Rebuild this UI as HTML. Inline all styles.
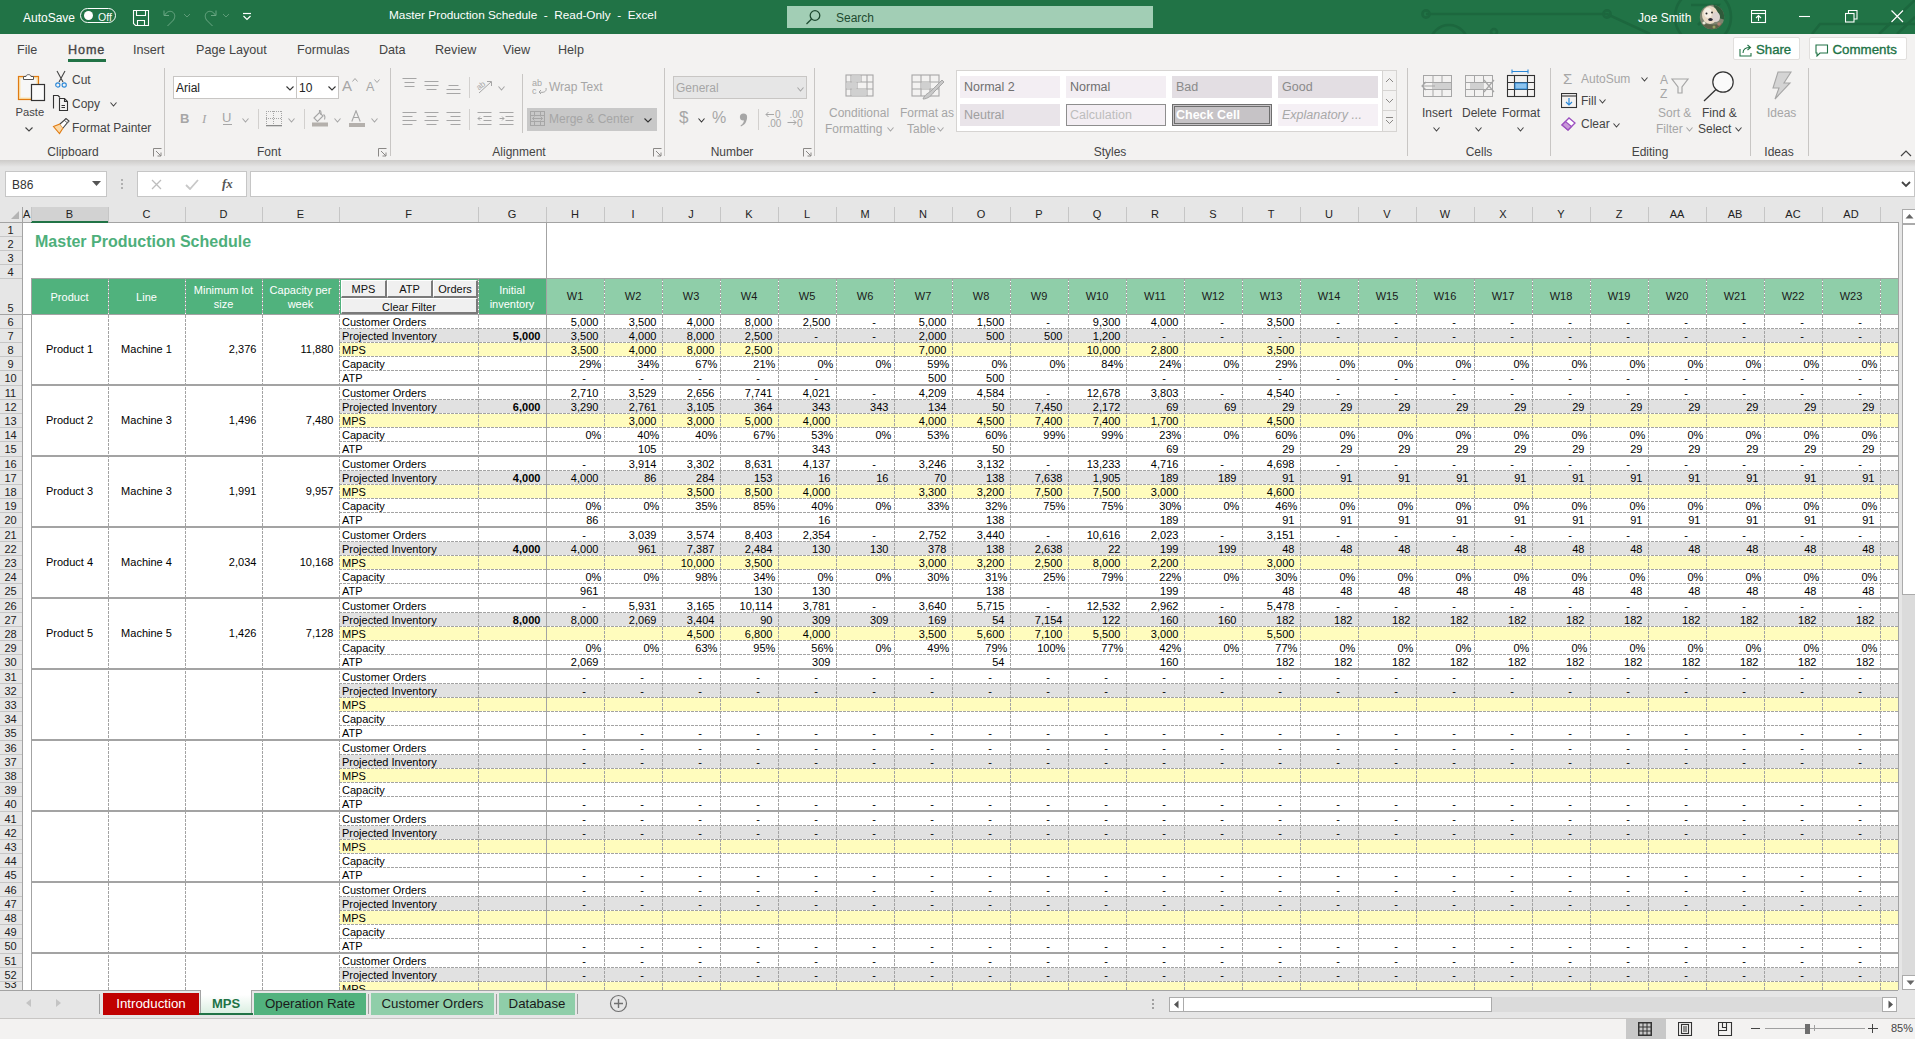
<!DOCTYPE html><html><head><meta charset="utf-8"><title>Master Production Schedule - Excel</title><style>html,body{margin:0;padding:0;}body{width:1915px;height:1039px;overflow:hidden;position:relative;background:#F3F2F1;font-family:"Liberation Sans",sans-serif;}</style></head><body><div style="position:absolute;left:0px;top:0px;width:1915px;height:34px;background:#217346;"></div><svg style="position:absolute;left:1400px;top:0px;" width="515" height="34" viewBox="0 0 515 34"><g stroke="#1C673E" stroke-width="2.6" fill="none"><path d="M26 14 H207 L250 34"/><circle cx="26" cy="14" r="3.6"/><circle cx="207" cy="14" r="3.6"/><circle cx="49" cy="44" r="19"/><circle cx="94" cy="32" r="3"/><circle cx="303" cy="17" r="28"/><path d="M291 5 H318 L298 25"/><path d="M479 34 L515 0"/><path d="M497 34 L515 17"/><path d="M412 34 L420 24 H515"/></g></svg><div style="position:absolute;left:23px;top:11px;white-space:pre;font:12px 'Liberation Sans', sans-serif;color:#fff;">AutoSave</div><div style="position:absolute;left:80px;top:8px;width:36px;height:15px;border:1px solid #fff;border-radius:9px;box-sizing:border-box;"></div><div style="position:absolute;left:84px;top:11px;width:9px;height:9px;background:#fff;border-radius:50%;"></div><div style="position:absolute;left:98px;top:11px;white-space:pre;font:10.5px 'Liberation Sans', sans-serif;color:#fff;">Off</div><svg style="position:absolute;left:132px;top:9px;" width="18" height="18" viewBox="0 0 18 18"><g fill="none" stroke="#fff" stroke-width="1.1"><path d="M1.5 1.5 H16.5 V16.5 H3.5 L1.5 14.5 Z"/><path d="M4.5 1.5 V6.5 H13.5 V1.5"/><path d="M5.5 16.5 V11.5 H12.5 V16.5"/></g></svg><svg style="position:absolute;left:161px;top:9px;" width="20" height="18" viewBox="0 0 20 18"><g fill="none" stroke="#6BA784" stroke-width="1"><path d="M3 1.5 V6.5 H8"/><path d="M3.5 6.5 C5.5 2.5 9 1.5 11.5 3 C14 4.5 14.5 8 12.5 11 L6.5 17"/></g></svg><svg style="position:absolute;left:183px;top:13px;" width="8" height="6" viewBox="0 0 8 6"><path d="M1 1 L4 4 L7 1" fill="none" stroke="#5E9B78" stroke-width="1"/></svg><svg style="position:absolute;left:200px;top:9px;" width="20" height="18" viewBox="0 0 20 18"><g fill="none" stroke="#6BA784" stroke-width="1"><path d="M16 1.5 V6.5 H11"/><path d="M15.5 6.5 C13.5 2.5 10 1.5 7.5 3 C5 4.5 4.5 8 6.5 11 L12.5 17"/></g></svg><svg style="position:absolute;left:222px;top:13px;" width="8" height="6" viewBox="0 0 8 6"><path d="M1 1 L4 4 L7 1" fill="none" stroke="#5E9B78" stroke-width="1"/></svg><svg style="position:absolute;left:242px;top:12px;" width="10" height="10" viewBox="0 0 10 10"><g fill="none" stroke="#fff" stroke-width="1.2"><path d="M1 1.5 H9"/><path d="M1.5 4 L5 7.5 L8.5 4"/></g></svg><div style="position:absolute;left:389px;top:7.6px;white-space:pre;font:11.8px 'Liberation Sans', sans-serif;color:#fff;">Master Production Schedule  -  Read-Only  -  Excel</div><div style="position:absolute;left:787px;top:6px;width:366px;height:22px;background:#A2CEB5;"></div><svg style="position:absolute;left:804px;top:9px;" width="18" height="16" viewBox="0 0 18 16"><g fill="none" stroke="#1E4A30" stroke-width="1.3"><circle cx="11" cy="6.5" r="4.8"/><path d="M7.6 10 L2.5 15"/></g></svg><div style="position:absolute;left:836px;top:11px;white-space:pre;font:12px 'Liberation Sans', sans-serif;color:#1E4A30;">Search</div><div style="position:absolute;left:1638px;top:11px;white-space:pre;font:12px 'Liberation Sans', sans-serif;color:#fff;">Joe Smith</div><svg style="position:absolute;left:1699px;top:4px;" width="26" height="26" viewBox="0 0 26 26"><defs><clipPath id="avc"><circle cx="13" cy="13" r="12.2"/></clipPath></defs><g clip-path="url(#avc)"><rect width="26" height="26" fill="#7E8470"/><path d="M14 0 H26 V16 L20 14 Z" fill="#2F5A3A"/><ellipse cx="11" cy="11" rx="8" ry="9" fill="#E8D9C4"/><ellipse cx="9" cy="9" rx="4" ry="5" fill="#F6EEE4"/><ellipse cx="17" cy="13" rx="4" ry="5" fill="#DCD3D0"/><circle cx="7.5" cy="9.5" r="1" fill="#222"/><circle cx="13" cy="8.5" r="0.9" fill="#222"/><ellipse cx="11.5" cy="15.5" rx="2.2" ry="1.6" fill="#2A2A3A"/><path d="M0 18 C6 20 12 22 26 19 V26 H0 Z" fill="#5B6148"/><circle cx="5" cy="19" r="1.6" fill="#E8E8D8"/><circle cx="20" cy="20" r="1.8" fill="#B08070"/><circle cx="15" cy="23" r="1.5" fill="#9AA060"/></g></svg><svg style="position:absolute;left:1751px;top:10px;" width="16" height="14" viewBox="0 0 16 14"><g fill="none" stroke="#fff" stroke-width="1.1"><rect x="0.5" y="0.5" width="14" height="12"/><path d="M0.5 3.5 H14.5"/><path d="M7.5 11 V6 M5 8 L7.5 5.5 L10 8"/></g></svg><svg style="position:absolute;left:1799px;top:15px;" width="12" height="3" viewBox="0 0 12 3"><path d="M0 1.5 H11" stroke="#fff" stroke-width="1.1"/></svg><svg style="position:absolute;left:1845px;top:10px;" width="13" height="13" viewBox="0 0 13 13"><g fill="none" stroke="#fff" stroke-width="1.1"><rect x="0.5" y="3.5" width="8.5" height="8.5"/><path d="M3.5 3.5 V0.5 H12 V9 H9"/></g></svg><svg style="position:absolute;left:1891px;top:10px;" width="13" height="13" viewBox="0 0 13 13"><path d="M0.5 0.5 L12 12 M12 0.5 L0.5 12" stroke="#fff" stroke-width="1.2"/></svg><div style="position:absolute;left:0px;top:34px;width:1915px;height:126px;background:#F3F2F1;"></div><div style="position:absolute;left:17px;top:43.3px;white-space:pre;font:12.6px 'Liberation Sans', sans-serif;color:#444444;">File</div><div style="position:absolute;left:68px;top:43.3px;white-space:pre;font:12.6px 'Liberation Sans', sans-serif;color:#444444;-webkit-text-stroke:0.35px #444;letter-spacing:0.9px;">Home</div><div style="position:absolute;left:133px;top:43.3px;white-space:pre;font:12.6px 'Liberation Sans', sans-serif;color:#444444;">Insert</div><div style="position:absolute;left:196px;top:43.3px;white-space:pre;font:12.6px 'Liberation Sans', sans-serif;color:#444444;">Page Layout</div><div style="position:absolute;left:297px;top:43.3px;white-space:pre;font:12.6px 'Liberation Sans', sans-serif;color:#444444;">Formulas</div><div style="position:absolute;left:379px;top:43.3px;white-space:pre;font:12.6px 'Liberation Sans', sans-serif;color:#444444;">Data</div><div style="position:absolute;left:435px;top:43.3px;white-space:pre;font:12.6px 'Liberation Sans', sans-serif;color:#444444;">Review</div><div style="position:absolute;left:503px;top:43.3px;white-space:pre;font:12.6px 'Liberation Sans', sans-serif;color:#444444;">View</div><div style="position:absolute;left:558px;top:43.3px;white-space:pre;font:12.6px 'Liberation Sans', sans-serif;color:#444444;">Help</div><div style="position:absolute;left:68px;top:59px;width:38px;height:3px;background:#217346;"></div><div style="position:absolute;left:1733px;top:37px;width:67px;height:23px;background:#fff;border:1px solid #E1DFDD;box-sizing:border-box;border-radius:2px;"></div><svg style="position:absolute;left:1739px;top:43px;" width="14" height="14" viewBox="0 0 14 14"><g fill="none" stroke="#217346" stroke-width="1.1"><path d="M1 6 V13 H12 V10"/><path d="M4 10 C4 6 7 4.5 11 4.5"/><path d="M8.5 2 L11.5 4.5 L8.5 7"/></g></svg><div style="position:absolute;left:1756px;top:42px;white-space:pre;font:13.2px 'Liberation Sans', sans-serif;color:#217346;-webkit-text-stroke:0.35px #217346;">Share</div><div style="position:absolute;left:1809px;top:37px;width:98px;height:23px;background:#fff;border:1px solid #E1DFDD;box-sizing:border-box;border-radius:2px;"></div><svg style="position:absolute;left:1815px;top:44px;" width="14" height="13" viewBox="0 0 14 13"><path d="M1 1 H12.5 V9 H5 L2 12 V9 H1 Z" fill="none" stroke="#217346" stroke-width="1.1"/></svg><div style="position:absolute;left:1832.5px;top:42px;white-space:pre;font:13.3px 'Liberation Sans', sans-serif;color:#217346;-webkit-text-stroke:0.35px #217346;">Comments</div><svg style="position:absolute;left:15px;top:71px;" width="32" height="32" viewBox="0 0 32 32"><rect x="3.5" y="5.5" width="20" height="23" fill="#FBE3B0" stroke="#E07B12" stroke-width="1.2"/><rect x="5.5" y="7.5" width="16" height="19" fill="#F7F7F7"/><path d="M8.5 8.5 V5.5 H11 C11 3 16 3 16 5.5 H18.5 V8.5 Z" fill="#fff" stroke="#555" stroke-width="1"/><rect x="16.5" y="13.5" width="13" height="16" fill="#FAFAFA" stroke="#333" stroke-width="1.2"/></svg><div style="position:absolute;left:15.5px;top:106px;white-space:pre;font:11.2px 'Liberation Sans', sans-serif;color:#444444;">Paste</div><svg style="position:absolute;left:25px;top:127px;" width="8" height="5" viewBox="0 0 8 5"><path d="M0.5 0.5 L4.0 4 L7.5 0.5" fill="none" stroke="#444" stroke-width="1.1"/></svg><svg style="position:absolute;left:55px;top:70px;" width="12" height="18" viewBox="0 0 12 18"><g fill="none" stroke-width="1.1"><path d="M2 1 L8 12 M10 1 L4 12" stroke="#444"/><circle cx="2.8" cy="15" r="2.1" stroke="#2B88D8"/><circle cx="9.2" cy="15" r="2.1" stroke="#2B88D8"/></g></svg><div style="position:absolute;left:72px;top:73px;white-space:pre;font:12px 'Liberation Sans', sans-serif;color:#444444;">Cut</div><svg style="position:absolute;left:52px;top:94px;" width="18" height="18" viewBox="0 0 18 18"><g fill="none" stroke="#333" stroke-width="1.1"><path d="M1.5 14.5 V1.5 H6 L8 3.5"/><path d="M7.5 4.5 H12.5 L15.5 7.5 V16.5 H7.5 Z"/><path d="M12.5 4.5 V7.5 H15.5"/><path d="M9.5 11.5 H13 M9.5 13.5 H13"/></g></svg><div style="position:absolute;left:72px;top:97px;white-space:pre;font:12px 'Liberation Sans', sans-serif;color:#444444;">Copy</div><svg style="position:absolute;left:110px;top:102px;" width="7" height="5" viewBox="0 0 7 5"><path d="M0.5 0.5 L3.5 4 L6.5 0.5" fill="none" stroke="#444" stroke-width="1.1"/></svg><svg style="position:absolute;left:52px;top:118px;" width="18" height="17" viewBox="0 0 18 17"><g stroke-width="1.1"><path d="M1.5 8.5 L8 6 L11 10 L7.5 15.5 Z" fill="#FCD9A5" stroke="#E07B12"/><path d="M8 6 L12.5 2 L15.5 4.5 L11 10" fill="#fff" stroke="#444"/><path d="M12.5 2 L14 0.5 L17 3 L15.5 4.5" fill="#fff" stroke="#444"/></g></svg><div style="position:absolute;left:72px;top:121px;white-space:pre;font:12px 'Liberation Sans', sans-serif;color:#444444;">Format Painter</div><div style="position:absolute;left:13px;top:145px;width:120px;text-align:center;font:12px 'Liberation Sans', sans-serif;color:#444444;white-space:pre;">Clipboard</div><svg style="position:absolute;left:153px;top:148px;" width="9" height="9" viewBox="0 0 9 9"><g fill="none" stroke="#8A8886" stroke-width="1"><path d="M0.5 8.5 V0.5 H8.5"/><path d="M3 3 L8 8 M8 4.5 V8 H4.5"/></g></svg><div style="position:absolute;left:164px;top:68px;width:1px;height:88px;background:#C8C6C4;"></div><div style="position:absolute;left:173px;top:76px;width:124px;height:23px;background:#fff;border:1px solid #C8C6C4;box-sizing:border-box;"></div><div style="position:absolute;left:176px;top:81px;white-space:pre;font:12px 'Liberation Sans', sans-serif;color:#222;">Arial</div><svg style="position:absolute;left:286px;top:86px;" width="8" height="5" viewBox="0 0 8 5"><path d="M0.5 0.5 L4.0 4 L7.5 0.5" fill="none" stroke="#333" stroke-width="1.1"/></svg><div style="position:absolute;left:296px;top:76px;width:43px;height:23px;background:#fff;border:1px solid #C8C6C4;box-sizing:border-box;"></div><div style="position:absolute;left:299px;top:81px;white-space:pre;font:12px 'Liberation Sans', sans-serif;color:#222;">10</div><svg style="position:absolute;left:328px;top:86px;" width="8" height="5" viewBox="0 0 8 5"><path d="M0.5 0.5 L4.0 4 L7.5 0.5" fill="none" stroke="#333" stroke-width="1.1"/></svg><div style="position:absolute;left:342px;top:77px;white-space:pre;font:15px 'Liberation Sans', sans-serif;color:#A6A6A6;">A</div><svg style="position:absolute;left:352px;top:78px;" width="6" height="4" viewBox="0 0 6 4"><path d="M0.5 3.5 L3 0.5 L5.5 3.5" fill="none" stroke="#A6A6A6" stroke-width="1"/></svg><div style="position:absolute;left:366px;top:80px;white-space:pre;font:12.5px 'Liberation Sans', sans-serif;color:#A6A6A6;">A</div><svg style="position:absolute;left:374px;top:79px;" width="6" height="4" viewBox="0 0 6 4"><path d="M0.5 0.5 L3 3.5 L5.5 0.5" fill="none" stroke="#A6A6A6" stroke-width="1"/></svg><div style="position:absolute;left:180px;top:111px;white-space:pre;font:bold 13px 'Liberation Sans', sans-serif;color:#A6A6A6;">B</div><div style="position:absolute;left:202px;top:111px;white-space:pre;font:italic 13px 'Liberation Serif', serif;color:#A6A6A6;">I</div><div style="position:absolute;left:222px;top:110px;white-space:pre;font:13px 'Liberation Sans', sans-serif;color:#A6A6A6;">U</div><div style="position:absolute;left:223px;top:124px;width:9px;height:1px;background:#A6A6A6;"></div><svg style="position:absolute;left:242px;top:118px;" width="7" height="5" viewBox="0 0 7 5"><path d="M0.5 0.5 L3.5 4 L6.5 0.5" fill="none" stroke="#A6A6A6" stroke-width="1.1"/></svg><div style="position:absolute;left:258px;top:109px;width:1px;height:20px;background:#D2D0CE;"></div><svg style="position:absolute;left:266px;top:111px;" width="16" height="16" viewBox="0 0 16 16"><rect x="0" y="0" width="1" height="1" fill="#A6A6A6"/><rect x="0" y="2" width="1" height="1" fill="#A6A6A6"/><rect x="0" y="4" width="1" height="1" fill="#A6A6A6"/><rect x="0" y="6" width="1" height="1" fill="#A6A6A6"/><rect x="0" y="7" width="1" height="1" fill="#A6A6A6"/><rect x="0" y="8" width="1" height="1" fill="#A6A6A6"/><rect x="0" y="10" width="1" height="1" fill="#A6A6A6"/><rect x="0" y="12" width="1" height="1" fill="#A6A6A6"/><rect x="0" y="14" width="1" height="1" fill="#A6A6A6"/><rect x="2" y="0" width="1" height="1" fill="#A6A6A6"/><rect x="2" y="7" width="1" height="1" fill="#A6A6A6"/><rect x="4" y="0" width="1" height="1" fill="#A6A6A6"/><rect x="4" y="7" width="1" height="1" fill="#A6A6A6"/><rect x="6" y="0" width="1" height="1" fill="#A6A6A6"/><rect x="6" y="7" width="1" height="1" fill="#A6A6A6"/><rect x="7" y="0" width="1" height="1" fill="#A6A6A6"/><rect x="7" y="2" width="1" height="1" fill="#A6A6A6"/><rect x="7" y="4" width="1" height="1" fill="#A6A6A6"/><rect x="7" y="6" width="1" height="1" fill="#A6A6A6"/><rect x="7" y="8" width="1" height="1" fill="#A6A6A6"/><rect x="7" y="10" width="1" height="1" fill="#A6A6A6"/><rect x="7" y="12" width="1" height="1" fill="#A6A6A6"/><rect x="7" y="14" width="1" height="1" fill="#A6A6A6"/><rect x="8" y="0" width="1" height="1" fill="#A6A6A6"/><rect x="8" y="7" width="1" height="1" fill="#A6A6A6"/><rect x="10" y="0" width="1" height="1" fill="#A6A6A6"/><rect x="10" y="7" width="1" height="1" fill="#A6A6A6"/><rect x="12" y="0" width="1" height="1" fill="#A6A6A6"/><rect x="12" y="7" width="1" height="1" fill="#A6A6A6"/><rect x="14" y="0" width="1" height="1" fill="#A6A6A6"/><rect x="14" y="7" width="1" height="1" fill="#A6A6A6"/><rect x="15" y="0" width="1" height="1" fill="#A6A6A6"/><rect x="15" y="2" width="1" height="1" fill="#A6A6A6"/><rect x="15" y="4" width="1" height="1" fill="#A6A6A6"/><rect x="15" y="6" width="1" height="1" fill="#A6A6A6"/><rect x="15" y="8" width="1" height="1" fill="#A6A6A6"/><rect x="15" y="10" width="1" height="1" fill="#A6A6A6"/><rect x="15" y="12" width="1" height="1" fill="#A6A6A6"/><rect x="15" y="14" width="1" height="1" fill="#A6A6A6"/><rect x="0" y="14" width="16" height="1.3" fill="#8A8A8A"/></svg><svg style="position:absolute;left:288px;top:118px;" width="7" height="5" viewBox="0 0 7 5"><path d="M0.5 0.5 L3.5 4 L6.5 0.5" fill="none" stroke="#A6A6A6" stroke-width="1.1"/></svg><div style="position:absolute;left:304px;top:109px;width:1px;height:20px;background:#D2D0CE;"></div><svg style="position:absolute;left:311px;top:110px;" width="18" height="17" viewBox="0 0 18 17"><g fill="none" stroke="#A6A6A6" stroke-width="1.1"><path d="M3 8 L8.5 2.5 L12 6 L6.5 11.5 Z"/><path d="M8.5 2.5 V0.5 C9.5 0.5 10 1 10 2.5 V5"/><path d="M12.5 4.5 C14 5.5 14 8 13.5 9.5"/></g><rect x="1" y="12.5" width="16" height="4" fill="#B4B0AC"/></svg><svg style="position:absolute;left:334px;top:118px;" width="7" height="5" viewBox="0 0 7 5"><path d="M0.5 0.5 L3.5 4 L6.5 0.5" fill="none" stroke="#A6A6A6" stroke-width="1.1"/></svg><svg style="position:absolute;left:351px;top:110px;" width="10" height="13" viewBox="0 0 10 13"><path d="M0.8 11.5 L5 0.8 L9.2 11.5 M2.3 7.5 H7.7" fill="none" stroke="#A6A6A6" stroke-width="1.1"/></svg><div style="position:absolute;left:349px;top:123px;width:16px;height:4px;background:#B4B0AC;"></div><svg style="position:absolute;left:371px;top:118px;" width="7" height="5" viewBox="0 0 7 5"><path d="M0.5 0.5 L3.5 4 L6.5 0.5" fill="none" stroke="#A6A6A6" stroke-width="1.1"/></svg><div style="position:absolute;left:209px;top:145px;width:120px;text-align:center;font:12px 'Liberation Sans', sans-serif;color:#444444;white-space:pre;">Font</div><svg style="position:absolute;left:378px;top:148px;" width="9" height="9" viewBox="0 0 9 9"><g fill="none" stroke="#8A8886" stroke-width="1"><path d="M0.5 8.5 V0.5 H8.5"/><path d="M3 3 L8 8 M8 4.5 V8 H4.5"/></g></svg><div style="position:absolute;left:390px;top:68px;width:1px;height:88px;background:#C8C6C4;"></div><svg style="position:absolute;left:402px;top:78px;" width="16" height="12" viewBox="0 0 16 12"><g stroke="#A6A6A6" stroke-width="1"><path d="M0.5 0.5 H14.5 M2.5 4.5 H12.5 M2.5 8.5 H12.5"/></g></svg><svg style="position:absolute;left:424px;top:81px;" width="16" height="12" viewBox="0 0 16 12"><g stroke="#A6A6A6" stroke-width="1"><path d="M0.5 0.5 H14.5 M0.5 4.5 H14.5 M2.5 8.5 H12.5"/></g></svg><svg style="position:absolute;left:446px;top:85px;" width="16" height="12" viewBox="0 0 16 12"><g stroke="#A6A6A6" stroke-width="1"><path d="M2.5 0.5 H12.5 M0.5 4.5 H14.5 M0.5 8.5 H14.5"/></g></svg><div style="position:absolute;left:469px;top:77px;width:1px;height:21px;background:#D2D0CE;"></div><svg style="position:absolute;left:476px;top:78px;" width="18" height="16" viewBox="0 0 18 16"><g fill="none" stroke="#A6A6A6" stroke-width="1"><path d="M3 15 L15 4 M11 3.5 H15.5 V8"/></g><text x="0" y="10" font-size="8" fill="#A6A6A6" font-family="Liberation Sans" transform="rotate(-40 5 7)">ab</text></svg><svg style="position:absolute;left:498px;top:86px;" width="7" height="5" viewBox="0 0 7 5"><path d="M0.5 0.5 L3.5 4 L6.5 0.5" fill="none" stroke="#A6A6A6" stroke-width="1.1"/></svg><svg style="position:absolute;left:402px;top:111px;" width="16" height="16" viewBox="0 0 16 16"><g stroke="#A6A6A6" stroke-width="1"><path d="M0.5 1.5 H14.5 M0.5 5.5 H10.5 M0.5 9.5 H14.5 M0.5 13.5 H10.5"/></g></svg><svg style="position:absolute;left:424px;top:111px;" width="16" height="16" viewBox="0 0 16 16"><g stroke="#A6A6A6" stroke-width="1"><path d="M0.5 1.5 H14.5 M2.5 5.5 H12.5 M0.5 9.5 H14.5 M2.5 13.5 H12.5"/></g></svg><svg style="position:absolute;left:446px;top:111px;" width="16" height="16" viewBox="0 0 16 16"><g stroke="#A6A6A6" stroke-width="1"><path d="M0.5 1.5 H14.5 M4.5 5.5 H14.5 M0.5 9.5 H14.5 M4.5 13.5 H14.5"/></g></svg><div style="position:absolute;left:469px;top:109px;width:1px;height:21px;background:#D2D0CE;"></div><svg style="position:absolute;left:477px;top:111px;" width="16" height="16" viewBox="0 0 16 16"><g fill="none" stroke="#A6A6A6" stroke-width="1"><path d="M0.5 1.5 H14.5 M6.5 5.5 H14.5 M6.5 9.5 H14.5 M0.5 13.5 H14.5 M1 7.5 H5 M3 5.5 L1 7.5 L3 9.5"/></g></svg><svg style="position:absolute;left:499px;top:111px;" width="16" height="16" viewBox="0 0 16 16"><g fill="none" stroke="#A6A6A6" stroke-width="1"><path d="M0.5 1.5 H14.5 M6.5 5.5 H14.5 M6.5 9.5 H14.5 M0.5 13.5 H14.5 M0.5 7.5 H5 M3 5.5 L5 7.5 L3 9.5"/></g></svg><div style="position:absolute;left:522px;top:74px;width:1px;height:59px;background:#C8C6C4;"></div><svg style="position:absolute;left:531px;top:78px;" width="17" height="18" viewBox="0 0 17 18"><text x="1" y="8" font-size="9" fill="#A6A6A6" font-family="Liberation Sans">ab</text><text x="1" y="16" font-size="9" fill="#A6A6A6" font-family="Liberation Sans">c</text><path d="M15 10 C16 14 12 15 8 14 M10 12 L8 14 L10 16" fill="none" stroke="#A6A6A6" stroke-width="1"/></svg><div style="position:absolute;left:549px;top:80px;white-space:pre;font:12px 'Liberation Sans', sans-serif;color:#A6A6A6;">Wrap Text</div><div style="position:absolute;left:527px;top:108px;width:130px;height:23px;background:#C8C8C8;"></div><svg style="position:absolute;left:530px;top:111px;" width="16" height="16" viewBox="0 0 16 16"><g fill="none" stroke="#A6A6A6" stroke-width="1"><rect x="0.5" y="0.5" width="14" height="14"/><path d="M0.5 4.5 H14.5 M0.5 10.5 H14.5 M4.5 0.5 V4.5 M10.5 0.5 V4.5 M4.5 10.5 V14.5 M10.5 10.5 V14.5 M2.5 7.5 H12.5 M4.5 5.5 L2.5 7.5 L4.5 9.5 M10.5 5.5 L12.5 7.5 L10.5 9.5"/></g></svg><div style="position:absolute;left:549px;top:112px;white-space:pre;font:12px 'Liberation Sans', sans-serif;color:#A6A6A6;">Merge &amp; Center</div><svg style="position:absolute;left:644px;top:118px;" width="8" height="5" viewBox="0 0 8 5"><path d="M0.5 0.5 L4.0 4 L7.5 0.5" fill="none" stroke="#333" stroke-width="1.1"/></svg><div style="position:absolute;left:459px;top:145px;width:120px;text-align:center;font:12px 'Liberation Sans', sans-serif;color:#444444;white-space:pre;">Alignment</div><svg style="position:absolute;left:653px;top:148px;" width="9" height="9" viewBox="0 0 9 9"><g fill="none" stroke="#8A8886" stroke-width="1"><path d="M0.5 8.5 V0.5 H8.5"/><path d="M3 3 L8 8 M8 4.5 V8 H4.5"/></g></svg><div style="position:absolute;left:664px;top:68px;width:1px;height:88px;background:#C8C6C4;"></div><div style="position:absolute;left:673px;top:76px;width:134px;height:23px;background:#E6E6E6;border:1px solid #C8C6C4;box-sizing:border-box;"></div><div style="position:absolute;left:676px;top:81px;white-space:pre;font:12px 'Liberation Sans', sans-serif;color:#A6A6A6;">General</div><svg style="position:absolute;left:797px;top:87px;" width="7" height="5" viewBox="0 0 7 5"><path d="M0.5 0.5 L3.5 4 L6.5 0.5" fill="none" stroke="#A6A6A6" stroke-width="1.1"/></svg><div style="position:absolute;left:679px;top:108px;white-space:pre;font:17px 'Liberation Sans', sans-serif;color:#A6A6A6;">$</div><svg style="position:absolute;left:698px;top:118px;" width="7" height="5" viewBox="0 0 7 5"><path d="M0.5 0.5 L3.5 4 L6.5 0.5" fill="none" stroke="#333" stroke-width="1.1"/></svg><div style="position:absolute;left:712px;top:109px;white-space:pre;font:16px 'Liberation Sans', sans-serif;color:#A6A6A6;">%</div><svg style="position:absolute;left:739px;top:112px;" width="9" height="15" viewBox="0 0 9 15"><circle cx="4.5" cy="5" r="3.6" fill="#A6A6A6"/><path d="M7.8 5.5 C8 10 5.5 13 2 14.5 L1.5 13.5 C4 12 5.5 9.5 5 6 Z" fill="#A6A6A6"/></svg><div style="position:absolute;left:758px;top:109px;width:1px;height:21px;background:#D2D0CE;"></div><svg style="position:absolute;left:765px;top:110px;" width="18" height="18" viewBox="0 0 18 18"><text x="10" y="8" font-size="10" fill="#A6A6A6" font-family="Liberation Sans">0</text><text x="2.5" y="16.5" font-size="10" fill="#A6A6A6" font-family="Liberation Sans">.00</text><path d="M1 4.5 H9 M3.5 2 L1 4.5 L3.5 7" fill="none" stroke="#A6A6A6" stroke-width="1"/></svg><svg style="position:absolute;left:787px;top:110px;" width="18" height="18" viewBox="0 0 18 18"><text x="2.5" y="8" font-size="10" fill="#A6A6A6" font-family="Liberation Sans">.00</text><text x="10" y="16.5" font-size="10" fill="#A6A6A6" font-family="Liberation Sans">0</text><path d="M0.5 12.5 H9 M6.5 10 L9 12.5 L6.5 15" fill="none" stroke="#A6A6A6" stroke-width="1"/></svg><div style="position:absolute;left:672px;top:145px;width:120px;text-align:center;font:12px 'Liberation Sans', sans-serif;color:#444444;white-space:pre;">Number</div><svg style="position:absolute;left:803px;top:148px;" width="9" height="9" viewBox="0 0 9 9"><g fill="none" stroke="#8A8886" stroke-width="1"><path d="M0.5 8.5 V0.5 H8.5"/><path d="M3 3 L8 8 M8 4.5 V8 H4.5"/></g></svg><div style="position:absolute;left:814px;top:68px;width:1px;height:88px;background:#C8C6C4;"></div><svg style="position:absolute;left:845px;top:74px;" width="30" height="24" viewBox="0 0 30 24"><g fill="none" stroke="#A6A6A6" stroke-width="1.1"><rect x="1" y="1" width="27" height="21"/><path d="M1 8 H28 M1 15 H28 M6 1 V22 M22 1 V22 M16 1 V8 M12 8 V15"/></g><rect x="6.5" y="1.5" width="9.5" height="6" fill="#D0D0D0"/><rect x="1.5" y="8.5" width="10.5" height="6" fill="#D0D0D0"/><rect x="6.5" y="15.5" width="15" height="6" fill="#D0D0D0"/></svg><div style="position:absolute;left:829px;top:106px;white-space:pre;font:12px 'Liberation Sans', sans-serif;color:#A6A6A6;">Conditional</div><div style="position:absolute;left:825px;top:122px;white-space:pre;font:12px 'Liberation Sans', sans-serif;color:#A6A6A6;">Formatting</div><svg style="position:absolute;left:887px;top:127px;" width="7" height="5" viewBox="0 0 7 5"><path d="M0.5 0.5 L3.5 4 L6.5 0.5" fill="none" stroke="#A6A6A6" stroke-width="1.1"/></svg><svg style="position:absolute;left:911px;top:74px;" width="34" height="28" viewBox="0 0 34 28"><g fill="none" stroke="#A6A6A6" stroke-width="1.1"><rect x="1" y="1" width="27" height="21"/><path d="M1 8 H28 M1 15 H28 M10 1 V22 M19 1 V22"/></g><rect x="10.5" y="8.5" width="9" height="6" fill="#D0D0D0"/><path d="M12 25 C14 20 18 19 21 16 L31 6 L33 8 L23 18 C21 21 17 25 12 25 Z" fill="#C8C8C8" stroke="#A6A6A6" stroke-width="1"/></svg><div style="position:absolute;left:900px;top:106px;white-space:pre;font:12px 'Liberation Sans', sans-serif;color:#A6A6A6;">Format as</div><div style="position:absolute;left:907px;top:122px;white-space:pre;font:12px 'Liberation Sans', sans-serif;color:#A6A6A6;">Table</div><svg style="position:absolute;left:937px;top:127px;" width="7" height="5" viewBox="0 0 7 5"><path d="M0.5 0.5 L3.5 4 L6.5 0.5" fill="none" stroke="#A6A6A6" stroke-width="1.1"/></svg><div style="position:absolute;left:956px;top:70px;width:427px;height:62px;background:#fff;border:1px solid #D6D4D2;box-sizing:border-box;"></div><div style="position:absolute;left:960px;top:76px;width:100px;height:22px;background:#F3EEF3;"></div><div style="position:absolute;left:964px;top:80px;white-space:pre;font:12.5px 'Liberation Sans', sans-serif;color:#707070;">Normal 2</div><div style="position:absolute;left:1066px;top:76px;width:100px;height:22px;background:#F3EEF3;"></div><div style="position:absolute;left:1070px;top:80px;white-space:pre;font:12.5px 'Liberation Sans', sans-serif;color:#707070;">Normal</div><div style="position:absolute;left:1172px;top:76px;width:100px;height:22px;background:#E3DEE3;"></div><div style="position:absolute;left:1176px;top:80px;white-space:pre;font:12.5px 'Liberation Sans', sans-serif;color:#8A8A8A;">Bad</div><div style="position:absolute;left:1278px;top:76px;width:100px;height:22px;background:#E3DEE3;"></div><div style="position:absolute;left:1282px;top:80px;white-space:pre;font:12.5px 'Liberation Sans', sans-serif;color:#8A8A8A;">Good</div><div style="position:absolute;left:960px;top:104px;width:100px;height:22px;background:#E9E4E9;"></div><div style="position:absolute;left:964px;top:108px;white-space:pre;font:12.5px 'Liberation Sans', sans-serif;color:#A0A0A0;">Neutral</div><div style="position:absolute;left:1066px;top:104px;width:100px;height:22px;background:#F3EEF3;border:1px solid #8E8E8E;box-sizing:border-box;"></div><div style="position:absolute;left:1070px;top:108px;white-space:pre;font:12.5px 'Liberation Sans', sans-serif;color:#BDBDBD;">Calculation</div><div style="position:absolute;left:1172px;top:104px;width:100px;height:22px;background:#C6C3C6;border:3px double #6E6E6E;box-sizing:border-box;"></div><div style="position:absolute;left:1176px;top:108px;white-space:pre;font:bold 12.5px 'Liberation Sans', sans-serif;color:#FFFFFF;">Check Cell</div><div style="position:absolute;left:1278px;top:104px;width:100px;height:22px;background:#F5F0F5;"></div><div style="position:absolute;left:1282px;top:108px;white-space:pre;font:italic 12.5px 'Liberation Sans', sans-serif;color:#A8A8A8;">Explanatory ...</div><div style="position:absolute;left:1382px;top:70px;width:15px;height:21px;background:#F3F2F1;border:1px solid #D6D4D2;box-sizing:border-box;"></div><div style="position:absolute;left:1382px;top:90px;width:15px;height:21px;background:#F3F2F1;border:1px solid #D6D4D2;box-sizing:border-box;"></div><div style="position:absolute;left:1382px;top:110px;width:15px;height:22px;background:#F3F2F1;border:1px solid #D6D4D2;box-sizing:border-box;"></div><svg style="position:absolute;left:1385px;top:77px;" width="9" height="6" viewBox="0 0 9 6"><path d="M1 5 L4.5 1.5 L8 5" fill="none" stroke="#8A8886" stroke-width="1"/></svg><svg style="position:absolute;left:1385px;top:98px;" width="9" height="6" viewBox="0 0 9 6"><path d="M1 1 L4.5 4.5 L8 1" fill="none" stroke="#8A8886" stroke-width="1"/></svg><svg style="position:absolute;left:1385px;top:116px;" width="9" height="9" viewBox="0 0 9 9"><path d="M1 1.5 H8 M1 4 L4.5 7.5 L8 4" fill="none" stroke="#8A8886" stroke-width="1"/></svg><div style="position:absolute;left:1050px;top:145px;width:120px;text-align:center;font:12px 'Liberation Sans', sans-serif;color:#444444;white-space:pre;">Styles</div><div style="position:absolute;left:1407px;top:68px;width:1px;height:88px;background:#C8C6C4;"></div><svg style="position:absolute;left:1421px;top:74px;" width="32" height="24" viewBox="0 0 32 24"><g fill="none" stroke="#A6A6A6" stroke-width="1"><rect x="2.5" y="1.5" width="28" height="21"/><path d="M2.5 8.5 H30.5 M2.5 15.5 H30.5 M12 1.5 V22 M21 1.5 V22"/></g><rect x="12" y="9" width="18" height="6" fill="#D0D0D0"/><path d="M1 12 H14 M5 8 L1 12 L5 16" fill="none" stroke="#A6A6A6" stroke-width="1.2"/></svg><div style="position:absolute;left:1422px;top:106px;white-space:pre;font:12px 'Liberation Sans', sans-serif;color:#444444;">Insert</div><svg style="position:absolute;left:1433px;top:127px;" width="7" height="5" viewBox="0 0 7 5"><path d="M0.5 0.5 L3.5 4 L6.5 0.5" fill="none" stroke="#444444" stroke-width="1.1"/></svg><svg style="position:absolute;left:1464px;top:74px;" width="32" height="24" viewBox="0 0 32 24"><g fill="none" stroke="#A6A6A6" stroke-width="1"><rect x="1.5" y="1.5" width="27" height="21"/><path d="M1.5 8.5 H28.5 M1.5 15.5 H28.5 M10.5 1.5 V22 M19.5 1.5 V22"/></g><rect x="6" y="9" width="14" height="6" fill="#D0D0D0"/><path d="M20 6 L30 18 M30 6 L20 18" stroke="#A6A6A6" stroke-width="1.2"/></svg><div style="position:absolute;left:1462px;top:106px;white-space:pre;font:12px 'Liberation Sans', sans-serif;color:#444444;">Delete</div><svg style="position:absolute;left:1475px;top:127px;" width="7" height="5" viewBox="0 0 7 5"><path d="M0.5 0.5 L3.5 4 L6.5 0.5" fill="none" stroke="#444444" stroke-width="1.1"/></svg><svg style="position:absolute;left:1506px;top:69px;" width="30" height="30" viewBox="0 0 30 30"><path d="M6 2.5 H22 M6 0.5 V4.5 M22 0.5 V4.5" stroke="#2B88D8" stroke-width="1.1"/><g fill="none" stroke="#333" stroke-width="1.1"><rect x="1.5" y="6.5" width="27" height="21"/><path d="M1.5 13.5 H28.5 M1.5 20.5 H28.5 M8.5 6.5 V27.5 M21.5 6.5 V27.5"/></g><rect x="9" y="14" width="12" height="6" fill="#8CC3EE" stroke="#2B88D8" stroke-width="1"/></svg><div style="position:absolute;left:1502px;top:106px;white-space:pre;font:12px 'Liberation Sans', sans-serif;color:#444444;">Format</div><svg style="position:absolute;left:1517px;top:127px;" width="7" height="5" viewBox="0 0 7 5"><path d="M0.5 0.5 L3.5 4 L6.5 0.5" fill="none" stroke="#444444" stroke-width="1.1"/></svg><div style="position:absolute;left:1419px;top:145px;width:120px;text-align:center;font:12px 'Liberation Sans', sans-serif;color:#444444;white-space:pre;">Cells</div><div style="position:absolute;left:1550px;top:68px;width:1px;height:88px;background:#C8C6C4;"></div><div style="position:absolute;left:1563px;top:70px;white-space:pre;font:15px 'Liberation Sans', sans-serif;color:#A6A6A6;">Σ</div><div style="position:absolute;left:1581px;top:72px;white-space:pre;font:12px 'Liberation Sans', sans-serif;color:#A6A6A6;">AutoSum</div><svg style="position:absolute;left:1641px;top:77px;" width="7" height="5" viewBox="0 0 7 5"><path d="M0.5 0.5 L3.5 4 L6.5 0.5" fill="none" stroke="#444" stroke-width="1.1"/></svg><svg style="position:absolute;left:1561px;top:93px;" width="17" height="16" viewBox="0 0 17 16"><g fill="none" stroke="#333" stroke-width="1.1"><rect x="0.5" y="0.5" width="15" height="14"/><path d="M0.5 3 H15.5"/></g><path d="M8 5 V12 M5 9 L8 12 L11 9" fill="none" stroke="#2B88D8" stroke-width="1.2"/></svg><div style="position:absolute;left:1581px;top:94px;white-space:pre;font:12px 'Liberation Sans', sans-serif;color:#444444;">Fill</div><svg style="position:absolute;left:1599px;top:99px;" width="7" height="5" viewBox="0 0 7 5"><path d="M0.5 0.5 L3.5 4 L6.5 0.5" fill="none" stroke="#444444" stroke-width="1.1"/></svg><svg style="position:absolute;left:1561px;top:115px;" width="17" height="17" viewBox="0 0 17 17"><path d="M1 10 L8 3 L14 8 L7 15 Z" fill="#fff" stroke="#9B4FBF" stroke-width="1.3"/><path d="M1 10 L4.5 6.5 L10.5 11.5 L7 15 Z" fill="#C89AD8" stroke="#9B4FBF" stroke-width="1.2"/></svg><div style="position:absolute;left:1581px;top:117px;white-space:pre;font:12px 'Liberation Sans', sans-serif;color:#444444;">Clear</div><svg style="position:absolute;left:1613px;top:123px;" width="7" height="5" viewBox="0 0 7 5"><path d="M0.5 0.5 L3.5 4 L6.5 0.5" fill="none" stroke="#444444" stroke-width="1.1"/></svg><svg style="position:absolute;left:1659px;top:72px;" width="32" height="28" viewBox="0 0 32 28"><text x="1" y="12" font-size="12" fill="#A6A6A6" font-family="Liberation Sans">A</text><text x="1" y="26" font-size="12" fill="#A6A6A6" font-family="Liberation Sans">Z</text><path d="M13 7 H29 L23 15 V21 H19 V15 Z" fill="none" stroke="#A6A6A6" stroke-width="1.2"/></svg><div style="position:absolute;left:1658px;top:106px;white-space:pre;font:12px 'Liberation Sans', sans-serif;color:#A6A6A6;">Sort &amp;</div><div style="position:absolute;left:1656px;top:122px;white-space:pre;font:12px 'Liberation Sans', sans-serif;color:#A6A6A6;">Filter</div><svg style="position:absolute;left:1686px;top:127px;" width="7" height="5" viewBox="0 0 7 5"><path d="M0.5 0.5 L3.5 4 L6.5 0.5" fill="none" stroke="#A6A6A6" stroke-width="1.1"/></svg><svg style="position:absolute;left:1702px;top:70px;" width="34" height="32" viewBox="0 0 34 32"><circle cx="21" cy="12" r="10.2" fill="#FAFAFA" stroke="#333" stroke-width="1.2"/><path d="M14 19.5 L2 31" stroke="#333" stroke-width="1.3"/></svg><div style="position:absolute;left:1702px;top:106px;white-space:pre;font:12px 'Liberation Sans', sans-serif;color:#444444;">Find &amp;</div><div style="position:absolute;left:1698px;top:122px;white-space:pre;font:12px 'Liberation Sans', sans-serif;color:#444444;">Select</div><svg style="position:absolute;left:1735px;top:127px;" width="7" height="5" viewBox="0 0 7 5"><path d="M0.5 0.5 L3.5 4 L6.5 0.5" fill="none" stroke="#444444" stroke-width="1.1"/></svg><div style="position:absolute;left:1590px;top:145px;width:120px;text-align:center;font:12px 'Liberation Sans', sans-serif;color:#444444;white-space:pre;">Editing</div><div style="position:absolute;left:1750px;top:68px;width:1px;height:88px;background:#C8C6C4;"></div><svg style="position:absolute;left:1768px;top:71px;" width="24" height="30" viewBox="0 0 24 30"><path d="M10 1 H23 L16 12 H22 L7 28 L11 17 H5 Z" fill="#D4D4D4" stroke="#A6A6A6" stroke-width="1.1"/></svg><div style="position:absolute;left:1767px;top:106px;white-space:pre;font:12px 'Liberation Sans', sans-serif;color:#A6A6A6;">Ideas</div><div style="position:absolute;left:1719px;top:145px;width:120px;text-align:center;font:12px 'Liberation Sans', sans-serif;color:#444444;white-space:pre;">Ideas</div><div style="position:absolute;left:1808px;top:68px;width:1px;height:88px;background:#C8C6C4;"></div><svg style="position:absolute;left:1900px;top:150px;" width="12" height="7" viewBox="0 0 12 7"><path d="M1 6 L6 1 L11 6" fill="none" stroke="#444" stroke-width="1.2"/></svg><div style="position:absolute;left:0px;top:160px;width:1915px;height:47px;background:#E6E6E6;"></div><div style="position:absolute;left:0;top:160px;width:1915px;height:7px;background:linear-gradient(#CDCBC9,#E6E6E6);"></div><div style="position:absolute;left:5px;top:171px;width:102px;height:26px;background:#fff;border:1px solid #C6C6C6;box-sizing:border-box;"></div><div style="position:absolute;left:12px;top:178px;white-space:pre;font:12px 'Liberation Sans', sans-serif;color:#333;">B86</div><svg style="position:absolute;left:92px;top:181px;" width="10" height="6" viewBox="0 0 10 6"><path d="M0 0 H9 L4.5 5 Z" fill="#555"/></svg><svg style="position:absolute;left:120px;top:178px;" width="4" height="12" viewBox="0 0 4 12"><g fill="#9E9E9E"><circle cx="2" cy="2" r="1"/><circle cx="2" cy="6" r="1"/><circle cx="2" cy="10" r="1"/></g></svg><div style="position:absolute;left:137px;top:171px;width:110px;height:26px;background:#fff;border:1px solid #C6C6C6;box-sizing:border-box;"></div><svg style="position:absolute;left:151px;top:179px;" width="11" height="11" viewBox="0 0 11 11"><path d="M1 1 L10 10 M10 1 L1 10" stroke="#BDBDBD" stroke-width="1.3"/></svg><svg style="position:absolute;left:185px;top:179px;" width="14" height="11" viewBox="0 0 14 11"><path d="M1 6 L5 10 L13 1" fill="none" stroke="#C8C8C8" stroke-width="1.8"/></svg><div style="position:absolute;left:222px;top:176px;white-space:pre;font:italic bold 13px 'Liberation Serif', serif;color:#555;">fx</div><div style="position:absolute;left:250px;top:171px;width:1665px;height:26px;background:#fff;border:1px solid #C6C6C6;box-sizing:border-box;"></div><svg style="position:absolute;left:1901px;top:181px;" width="10" height="7" viewBox="0 0 10 7"><path d="M1 1 L5 5 L9 1" fill="none" stroke="#444" stroke-width="1.8"/></svg><div style="position:absolute;left:0px;top:207px;width:1915px;height:15px;background:#E6E6E6;"></div><div style="position:absolute;left:0px;top:222px;width:1898px;height:1px;background:#A3A3A3;"></div><svg style="position:absolute;left:11px;top:211px;" width="9" height="8" viewBox="0 0 9 8"><path d="M8 0 V8 H0 Z" fill="#B4B4B4"/></svg><div style="position:absolute;left:22px;top:207px;width:1px;height:783px;background:#A3A3A3;"></div><div style="position:absolute;left:31px;top:207px;width:77px;height:15px;background:#D2D2D2;"></div><div style="position:absolute;left:31px;top:221px;width:77px;height:2px;background:#217346;"></div><div style="position:absolute;left:23px;top:208px;white-space:pre;font:11px 'Liberation Sans', sans-serif;color:#222;">A</div><div style="position:absolute;left:31px;top:207px;width:1px;height:15px;background:#C6C6C6;"></div><div style="position:absolute;left:31px;top:208px;width:77px;text-align:center;font:11px 'Liberation Sans', sans-serif;color:#222;">B</div><div style="position:absolute;left:108px;top:207px;width:1px;height:15px;background:#C6C6C6;"></div><div style="position:absolute;left:108px;top:208px;width:77px;text-align:center;font:11px 'Liberation Sans', sans-serif;color:#222;">C</div><div style="position:absolute;left:185px;top:207px;width:1px;height:15px;background:#C6C6C6;"></div><div style="position:absolute;left:185px;top:208px;width:77px;text-align:center;font:11px 'Liberation Sans', sans-serif;color:#222;">D</div><div style="position:absolute;left:262px;top:207px;width:1px;height:15px;background:#C6C6C6;"></div><div style="position:absolute;left:262px;top:208px;width:77px;text-align:center;font:11px 'Liberation Sans', sans-serif;color:#222;">E</div><div style="position:absolute;left:339px;top:207px;width:1px;height:15px;background:#C6C6C6;"></div><div style="position:absolute;left:339px;top:208px;width:139px;text-align:center;font:11px 'Liberation Sans', sans-serif;color:#222;">F</div><div style="position:absolute;left:478px;top:207px;width:1px;height:15px;background:#C6C6C6;"></div><div style="position:absolute;left:478px;top:208px;width:68px;text-align:center;font:11px 'Liberation Sans', sans-serif;color:#222;">G</div><div style="position:absolute;left:546px;top:207px;width:1px;height:15px;background:#C6C6C6;"></div><div style="position:absolute;left:546px;top:208px;width:58px;text-align:center;font:11px 'Liberation Sans', sans-serif;color:#222;">H</div><div style="position:absolute;left:604px;top:207px;width:1px;height:15px;background:#C6C6C6;"></div><div style="position:absolute;left:604px;top:208px;width:58px;text-align:center;font:11px 'Liberation Sans', sans-serif;color:#222;">I</div><div style="position:absolute;left:662px;top:207px;width:1px;height:15px;background:#C6C6C6;"></div><div style="position:absolute;left:662px;top:208px;width:58px;text-align:center;font:11px 'Liberation Sans', sans-serif;color:#222;">J</div><div style="position:absolute;left:720px;top:207px;width:1px;height:15px;background:#C6C6C6;"></div><div style="position:absolute;left:720px;top:208px;width:58px;text-align:center;font:11px 'Liberation Sans', sans-serif;color:#222;">K</div><div style="position:absolute;left:778px;top:207px;width:1px;height:15px;background:#C6C6C6;"></div><div style="position:absolute;left:778px;top:208px;width:58px;text-align:center;font:11px 'Liberation Sans', sans-serif;color:#222;">L</div><div style="position:absolute;left:836px;top:207px;width:1px;height:15px;background:#C6C6C6;"></div><div style="position:absolute;left:836px;top:208px;width:58px;text-align:center;font:11px 'Liberation Sans', sans-serif;color:#222;">M</div><div style="position:absolute;left:894px;top:207px;width:1px;height:15px;background:#C6C6C6;"></div><div style="position:absolute;left:894px;top:208px;width:58px;text-align:center;font:11px 'Liberation Sans', sans-serif;color:#222;">N</div><div style="position:absolute;left:952px;top:207px;width:1px;height:15px;background:#C6C6C6;"></div><div style="position:absolute;left:952px;top:208px;width:58px;text-align:center;font:11px 'Liberation Sans', sans-serif;color:#222;">O</div><div style="position:absolute;left:1010px;top:207px;width:1px;height:15px;background:#C6C6C6;"></div><div style="position:absolute;left:1010px;top:208px;width:58px;text-align:center;font:11px 'Liberation Sans', sans-serif;color:#222;">P</div><div style="position:absolute;left:1068px;top:207px;width:1px;height:15px;background:#C6C6C6;"></div><div style="position:absolute;left:1068px;top:208px;width:58px;text-align:center;font:11px 'Liberation Sans', sans-serif;color:#222;">Q</div><div style="position:absolute;left:1126px;top:207px;width:1px;height:15px;background:#C6C6C6;"></div><div style="position:absolute;left:1126px;top:208px;width:58px;text-align:center;font:11px 'Liberation Sans', sans-serif;color:#222;">R</div><div style="position:absolute;left:1184px;top:207px;width:1px;height:15px;background:#C6C6C6;"></div><div style="position:absolute;left:1184px;top:208px;width:58px;text-align:center;font:11px 'Liberation Sans', sans-serif;color:#222;">S</div><div style="position:absolute;left:1242px;top:207px;width:1px;height:15px;background:#C6C6C6;"></div><div style="position:absolute;left:1242px;top:208px;width:58px;text-align:center;font:11px 'Liberation Sans', sans-serif;color:#222;">T</div><div style="position:absolute;left:1300px;top:207px;width:1px;height:15px;background:#C6C6C6;"></div><div style="position:absolute;left:1300px;top:208px;width:58px;text-align:center;font:11px 'Liberation Sans', sans-serif;color:#222;">U</div><div style="position:absolute;left:1358px;top:207px;width:1px;height:15px;background:#C6C6C6;"></div><div style="position:absolute;left:1358px;top:208px;width:58px;text-align:center;font:11px 'Liberation Sans', sans-serif;color:#222;">V</div><div style="position:absolute;left:1416px;top:207px;width:1px;height:15px;background:#C6C6C6;"></div><div style="position:absolute;left:1416px;top:208px;width:58px;text-align:center;font:11px 'Liberation Sans', sans-serif;color:#222;">W</div><div style="position:absolute;left:1474px;top:207px;width:1px;height:15px;background:#C6C6C6;"></div><div style="position:absolute;left:1474px;top:208px;width:58px;text-align:center;font:11px 'Liberation Sans', sans-serif;color:#222;">X</div><div style="position:absolute;left:1532px;top:207px;width:1px;height:15px;background:#C6C6C6;"></div><div style="position:absolute;left:1532px;top:208px;width:58px;text-align:center;font:11px 'Liberation Sans', sans-serif;color:#222;">Y</div><div style="position:absolute;left:1590px;top:207px;width:1px;height:15px;background:#C6C6C6;"></div><div style="position:absolute;left:1590px;top:208px;width:58px;text-align:center;font:11px 'Liberation Sans', sans-serif;color:#222;">Z</div><div style="position:absolute;left:1648px;top:207px;width:1px;height:15px;background:#C6C6C6;"></div><div style="position:absolute;left:1648px;top:208px;width:58px;text-align:center;font:11px 'Liberation Sans', sans-serif;color:#222;">AA</div><div style="position:absolute;left:1706px;top:207px;width:1px;height:15px;background:#C6C6C6;"></div><div style="position:absolute;left:1706px;top:208px;width:58px;text-align:center;font:11px 'Liberation Sans', sans-serif;color:#222;">AB</div><div style="position:absolute;left:1764px;top:207px;width:1px;height:15px;background:#C6C6C6;"></div><div style="position:absolute;left:1764px;top:208px;width:58px;text-align:center;font:11px 'Liberation Sans', sans-serif;color:#222;">AC</div><div style="position:absolute;left:1822px;top:207px;width:1px;height:15px;background:#C6C6C6;"></div><div style="position:absolute;left:1822px;top:208px;width:58px;text-align:center;font:11px 'Liberation Sans', sans-serif;color:#222;">AD</div><div style="position:absolute;left:1880px;top:207px;width:1px;height:15px;background:#C6C6C6;"></div><div style="position:absolute;left:23px;top:223px;width:1875px;height:767px;background:#fff;"></div><div style="position:absolute;left:0px;top:223px;width:22px;height:767px;background:#E6E6E6;"></div><div style="position:absolute;left:0px;top:236px;width:22px;height:1px;background:#C6C6C6;"></div><div style="position:absolute;left:0;top:223px;width:21px;height:13px;overflow:hidden;"><div style="position:absolute;bottom:-1px;left:0;width:21px;text-align:center;font:11px 'Liberation Sans', sans-serif;color:#222;line-height:14px;">1</div></div><div style="position:absolute;left:0px;top:250px;width:22px;height:1px;background:#C6C6C6;"></div><div style="position:absolute;left:0;top:237px;width:21px;height:13px;overflow:hidden;"><div style="position:absolute;bottom:-1px;left:0;width:21px;text-align:center;font:11px 'Liberation Sans', sans-serif;color:#222;line-height:14px;">2</div></div><div style="position:absolute;left:0px;top:264px;width:22px;height:1px;background:#C6C6C6;"></div><div style="position:absolute;left:0;top:251px;width:21px;height:13px;overflow:hidden;"><div style="position:absolute;bottom:-1px;left:0;width:21px;text-align:center;font:11px 'Liberation Sans', sans-serif;color:#222;line-height:14px;">3</div></div><div style="position:absolute;left:0px;top:278px;width:22px;height:1px;background:#C6C6C6;"></div><div style="position:absolute;left:0;top:265px;width:21px;height:13px;overflow:hidden;"><div style="position:absolute;bottom:-1px;left:0;width:21px;text-align:center;font:11px 'Liberation Sans', sans-serif;color:#222;line-height:14px;">4</div></div><div style="position:absolute;left:0px;top:314px;width:22px;height:1px;background:#C6C6C6;"></div><div style="position:absolute;left:0;top:279px;width:21px;height:35px;overflow:hidden;"><div style="position:absolute;bottom:-1px;left:0;width:21px;text-align:center;font:11px 'Liberation Sans', sans-serif;color:#222;line-height:14px;">5</div></div><div style="position:absolute;left:0px;top:328px;width:22px;height:1px;background:#C6C6C6;"></div><div style="position:absolute;left:0;top:315px;width:21px;height:13px;overflow:hidden;"><div style="position:absolute;bottom:-1px;left:0;width:21px;text-align:center;font:11px 'Liberation Sans', sans-serif;color:#222;line-height:14px;">6</div></div><div style="position:absolute;left:0px;top:342px;width:22px;height:1px;background:#C6C6C6;"></div><div style="position:absolute;left:0;top:329px;width:21px;height:13px;overflow:hidden;"><div style="position:absolute;bottom:-1px;left:0;width:21px;text-align:center;font:11px 'Liberation Sans', sans-serif;color:#222;line-height:14px;">7</div></div><div style="position:absolute;left:0px;top:356px;width:22px;height:1px;background:#C6C6C6;"></div><div style="position:absolute;left:0;top:343px;width:21px;height:13px;overflow:hidden;"><div style="position:absolute;bottom:-1px;left:0;width:21px;text-align:center;font:11px 'Liberation Sans', sans-serif;color:#222;line-height:14px;">8</div></div><div style="position:absolute;left:0px;top:370px;width:22px;height:1px;background:#C6C6C6;"></div><div style="position:absolute;left:0;top:357px;width:21px;height:13px;overflow:hidden;"><div style="position:absolute;bottom:-1px;left:0;width:21px;text-align:center;font:11px 'Liberation Sans', sans-serif;color:#222;line-height:14px;">9</div></div><div style="position:absolute;left:0;top:371px;width:21px;height:13px;overflow:hidden;"><div style="position:absolute;bottom:-1px;left:0;width:21px;text-align:center;font:11px 'Liberation Sans', sans-serif;color:#222;line-height:14px;">10</div></div><div style="position:absolute;left:0px;top:399px;width:22px;height:1px;background:#C6C6C6;"></div><div style="position:absolute;left:0;top:386px;width:21px;height:13px;overflow:hidden;"><div style="position:absolute;bottom:-1px;left:0;width:21px;text-align:center;font:11px 'Liberation Sans', sans-serif;color:#222;line-height:14px;">11</div></div><div style="position:absolute;left:0px;top:413px;width:22px;height:1px;background:#C6C6C6;"></div><div style="position:absolute;left:0;top:400px;width:21px;height:13px;overflow:hidden;"><div style="position:absolute;bottom:-1px;left:0;width:21px;text-align:center;font:11px 'Liberation Sans', sans-serif;color:#222;line-height:14px;">12</div></div><div style="position:absolute;left:0px;top:427px;width:22px;height:1px;background:#C6C6C6;"></div><div style="position:absolute;left:0;top:414px;width:21px;height:13px;overflow:hidden;"><div style="position:absolute;bottom:-1px;left:0;width:21px;text-align:center;font:11px 'Liberation Sans', sans-serif;color:#222;line-height:14px;">13</div></div><div style="position:absolute;left:0px;top:441px;width:22px;height:1px;background:#C6C6C6;"></div><div style="position:absolute;left:0;top:428px;width:21px;height:13px;overflow:hidden;"><div style="position:absolute;bottom:-1px;left:0;width:21px;text-align:center;font:11px 'Liberation Sans', sans-serif;color:#222;line-height:14px;">14</div></div><div style="position:absolute;left:0;top:442px;width:21px;height:13px;overflow:hidden;"><div style="position:absolute;bottom:-1px;left:0;width:21px;text-align:center;font:11px 'Liberation Sans', sans-serif;color:#222;line-height:14px;">15</div></div><div style="position:absolute;left:0px;top:470px;width:22px;height:1px;background:#C6C6C6;"></div><div style="position:absolute;left:0;top:457px;width:21px;height:13px;overflow:hidden;"><div style="position:absolute;bottom:-1px;left:0;width:21px;text-align:center;font:11px 'Liberation Sans', sans-serif;color:#222;line-height:14px;">16</div></div><div style="position:absolute;left:0px;top:484px;width:22px;height:1px;background:#C6C6C6;"></div><div style="position:absolute;left:0;top:471px;width:21px;height:13px;overflow:hidden;"><div style="position:absolute;bottom:-1px;left:0;width:21px;text-align:center;font:11px 'Liberation Sans', sans-serif;color:#222;line-height:14px;">17</div></div><div style="position:absolute;left:0px;top:498px;width:22px;height:1px;background:#C6C6C6;"></div><div style="position:absolute;left:0;top:485px;width:21px;height:13px;overflow:hidden;"><div style="position:absolute;bottom:-1px;left:0;width:21px;text-align:center;font:11px 'Liberation Sans', sans-serif;color:#222;line-height:14px;">18</div></div><div style="position:absolute;left:0px;top:512px;width:22px;height:1px;background:#C6C6C6;"></div><div style="position:absolute;left:0;top:499px;width:21px;height:13px;overflow:hidden;"><div style="position:absolute;bottom:-1px;left:0;width:21px;text-align:center;font:11px 'Liberation Sans', sans-serif;color:#222;line-height:14px;">19</div></div><div style="position:absolute;left:0;top:513px;width:21px;height:13px;overflow:hidden;"><div style="position:absolute;bottom:-1px;left:0;width:21px;text-align:center;font:11px 'Liberation Sans', sans-serif;color:#222;line-height:14px;">20</div></div><div style="position:absolute;left:0px;top:541px;width:22px;height:1px;background:#C6C6C6;"></div><div style="position:absolute;left:0;top:528px;width:21px;height:13px;overflow:hidden;"><div style="position:absolute;bottom:-1px;left:0;width:21px;text-align:center;font:11px 'Liberation Sans', sans-serif;color:#222;line-height:14px;">21</div></div><div style="position:absolute;left:0px;top:555px;width:22px;height:1px;background:#C6C6C6;"></div><div style="position:absolute;left:0;top:542px;width:21px;height:13px;overflow:hidden;"><div style="position:absolute;bottom:-1px;left:0;width:21px;text-align:center;font:11px 'Liberation Sans', sans-serif;color:#222;line-height:14px;">22</div></div><div style="position:absolute;left:0px;top:569px;width:22px;height:1px;background:#C6C6C6;"></div><div style="position:absolute;left:0;top:556px;width:21px;height:13px;overflow:hidden;"><div style="position:absolute;bottom:-1px;left:0;width:21px;text-align:center;font:11px 'Liberation Sans', sans-serif;color:#222;line-height:14px;">23</div></div><div style="position:absolute;left:0px;top:583px;width:22px;height:1px;background:#C6C6C6;"></div><div style="position:absolute;left:0;top:570px;width:21px;height:13px;overflow:hidden;"><div style="position:absolute;bottom:-1px;left:0;width:21px;text-align:center;font:11px 'Liberation Sans', sans-serif;color:#222;line-height:14px;">24</div></div><div style="position:absolute;left:0;top:584px;width:21px;height:13px;overflow:hidden;"><div style="position:absolute;bottom:-1px;left:0;width:21px;text-align:center;font:11px 'Liberation Sans', sans-serif;color:#222;line-height:14px;">25</div></div><div style="position:absolute;left:0px;top:612px;width:22px;height:1px;background:#C6C6C6;"></div><div style="position:absolute;left:0;top:599px;width:21px;height:13px;overflow:hidden;"><div style="position:absolute;bottom:-1px;left:0;width:21px;text-align:center;font:11px 'Liberation Sans', sans-serif;color:#222;line-height:14px;">26</div></div><div style="position:absolute;left:0px;top:626px;width:22px;height:1px;background:#C6C6C6;"></div><div style="position:absolute;left:0;top:613px;width:21px;height:13px;overflow:hidden;"><div style="position:absolute;bottom:-1px;left:0;width:21px;text-align:center;font:11px 'Liberation Sans', sans-serif;color:#222;line-height:14px;">27</div></div><div style="position:absolute;left:0px;top:640px;width:22px;height:1px;background:#C6C6C6;"></div><div style="position:absolute;left:0;top:627px;width:21px;height:13px;overflow:hidden;"><div style="position:absolute;bottom:-1px;left:0;width:21px;text-align:center;font:11px 'Liberation Sans', sans-serif;color:#222;line-height:14px;">28</div></div><div style="position:absolute;left:0px;top:654px;width:22px;height:1px;background:#C6C6C6;"></div><div style="position:absolute;left:0;top:641px;width:21px;height:13px;overflow:hidden;"><div style="position:absolute;bottom:-1px;left:0;width:21px;text-align:center;font:11px 'Liberation Sans', sans-serif;color:#222;line-height:14px;">29</div></div><div style="position:absolute;left:0;top:655px;width:21px;height:13px;overflow:hidden;"><div style="position:absolute;bottom:-1px;left:0;width:21px;text-align:center;font:11px 'Liberation Sans', sans-serif;color:#222;line-height:14px;">30</div></div><div style="position:absolute;left:0px;top:683px;width:22px;height:1px;background:#C6C6C6;"></div><div style="position:absolute;left:0;top:670px;width:21px;height:13px;overflow:hidden;"><div style="position:absolute;bottom:-1px;left:0;width:21px;text-align:center;font:11px 'Liberation Sans', sans-serif;color:#222;line-height:14px;">31</div></div><div style="position:absolute;left:0px;top:697px;width:22px;height:1px;background:#C6C6C6;"></div><div style="position:absolute;left:0;top:684px;width:21px;height:13px;overflow:hidden;"><div style="position:absolute;bottom:-1px;left:0;width:21px;text-align:center;font:11px 'Liberation Sans', sans-serif;color:#222;line-height:14px;">32</div></div><div style="position:absolute;left:0px;top:711px;width:22px;height:1px;background:#C6C6C6;"></div><div style="position:absolute;left:0;top:698px;width:21px;height:13px;overflow:hidden;"><div style="position:absolute;bottom:-1px;left:0;width:21px;text-align:center;font:11px 'Liberation Sans', sans-serif;color:#222;line-height:14px;">33</div></div><div style="position:absolute;left:0px;top:725px;width:22px;height:1px;background:#C6C6C6;"></div><div style="position:absolute;left:0;top:712px;width:21px;height:13px;overflow:hidden;"><div style="position:absolute;bottom:-1px;left:0;width:21px;text-align:center;font:11px 'Liberation Sans', sans-serif;color:#222;line-height:14px;">34</div></div><div style="position:absolute;left:0;top:726px;width:21px;height:13px;overflow:hidden;"><div style="position:absolute;bottom:-1px;left:0;width:21px;text-align:center;font:11px 'Liberation Sans', sans-serif;color:#222;line-height:14px;">35</div></div><div style="position:absolute;left:0px;top:754px;width:22px;height:1px;background:#C6C6C6;"></div><div style="position:absolute;left:0;top:741px;width:21px;height:13px;overflow:hidden;"><div style="position:absolute;bottom:-1px;left:0;width:21px;text-align:center;font:11px 'Liberation Sans', sans-serif;color:#222;line-height:14px;">36</div></div><div style="position:absolute;left:0px;top:768px;width:22px;height:1px;background:#C6C6C6;"></div><div style="position:absolute;left:0;top:755px;width:21px;height:13px;overflow:hidden;"><div style="position:absolute;bottom:-1px;left:0;width:21px;text-align:center;font:11px 'Liberation Sans', sans-serif;color:#222;line-height:14px;">37</div></div><div style="position:absolute;left:0px;top:782px;width:22px;height:1px;background:#C6C6C6;"></div><div style="position:absolute;left:0;top:769px;width:21px;height:13px;overflow:hidden;"><div style="position:absolute;bottom:-1px;left:0;width:21px;text-align:center;font:11px 'Liberation Sans', sans-serif;color:#222;line-height:14px;">38</div></div><div style="position:absolute;left:0px;top:796px;width:22px;height:1px;background:#C6C6C6;"></div><div style="position:absolute;left:0;top:783px;width:21px;height:13px;overflow:hidden;"><div style="position:absolute;bottom:-1px;left:0;width:21px;text-align:center;font:11px 'Liberation Sans', sans-serif;color:#222;line-height:14px;">39</div></div><div style="position:absolute;left:0;top:797px;width:21px;height:13px;overflow:hidden;"><div style="position:absolute;bottom:-1px;left:0;width:21px;text-align:center;font:11px 'Liberation Sans', sans-serif;color:#222;line-height:14px;">40</div></div><div style="position:absolute;left:0px;top:825px;width:22px;height:1px;background:#C6C6C6;"></div><div style="position:absolute;left:0;top:812px;width:21px;height:13px;overflow:hidden;"><div style="position:absolute;bottom:-1px;left:0;width:21px;text-align:center;font:11px 'Liberation Sans', sans-serif;color:#222;line-height:14px;">41</div></div><div style="position:absolute;left:0px;top:839px;width:22px;height:1px;background:#C6C6C6;"></div><div style="position:absolute;left:0;top:826px;width:21px;height:13px;overflow:hidden;"><div style="position:absolute;bottom:-1px;left:0;width:21px;text-align:center;font:11px 'Liberation Sans', sans-serif;color:#222;line-height:14px;">42</div></div><div style="position:absolute;left:0px;top:853px;width:22px;height:1px;background:#C6C6C6;"></div><div style="position:absolute;left:0;top:840px;width:21px;height:13px;overflow:hidden;"><div style="position:absolute;bottom:-1px;left:0;width:21px;text-align:center;font:11px 'Liberation Sans', sans-serif;color:#222;line-height:14px;">43</div></div><div style="position:absolute;left:0px;top:867px;width:22px;height:1px;background:#C6C6C6;"></div><div style="position:absolute;left:0;top:854px;width:21px;height:13px;overflow:hidden;"><div style="position:absolute;bottom:-1px;left:0;width:21px;text-align:center;font:11px 'Liberation Sans', sans-serif;color:#222;line-height:14px;">44</div></div><div style="position:absolute;left:0;top:868px;width:21px;height:13px;overflow:hidden;"><div style="position:absolute;bottom:-1px;left:0;width:21px;text-align:center;font:11px 'Liberation Sans', sans-serif;color:#222;line-height:14px;">45</div></div><div style="position:absolute;left:0px;top:896px;width:22px;height:1px;background:#C6C6C6;"></div><div style="position:absolute;left:0;top:883px;width:21px;height:13px;overflow:hidden;"><div style="position:absolute;bottom:-1px;left:0;width:21px;text-align:center;font:11px 'Liberation Sans', sans-serif;color:#222;line-height:14px;">46</div></div><div style="position:absolute;left:0px;top:910px;width:22px;height:1px;background:#C6C6C6;"></div><div style="position:absolute;left:0;top:897px;width:21px;height:13px;overflow:hidden;"><div style="position:absolute;bottom:-1px;left:0;width:21px;text-align:center;font:11px 'Liberation Sans', sans-serif;color:#222;line-height:14px;">47</div></div><div style="position:absolute;left:0px;top:924px;width:22px;height:1px;background:#C6C6C6;"></div><div style="position:absolute;left:0;top:911px;width:21px;height:13px;overflow:hidden;"><div style="position:absolute;bottom:-1px;left:0;width:21px;text-align:center;font:11px 'Liberation Sans', sans-serif;color:#222;line-height:14px;">48</div></div><div style="position:absolute;left:0px;top:938px;width:22px;height:1px;background:#C6C6C6;"></div><div style="position:absolute;left:0;top:925px;width:21px;height:13px;overflow:hidden;"><div style="position:absolute;bottom:-1px;left:0;width:21px;text-align:center;font:11px 'Liberation Sans', sans-serif;color:#222;line-height:14px;">49</div></div><div style="position:absolute;left:0;top:939px;width:21px;height:13px;overflow:hidden;"><div style="position:absolute;bottom:-1px;left:0;width:21px;text-align:center;font:11px 'Liberation Sans', sans-serif;color:#222;line-height:14px;">50</div></div><div style="position:absolute;left:0px;top:967px;width:22px;height:1px;background:#C6C6C6;"></div><div style="position:absolute;left:0;top:954px;width:21px;height:13px;overflow:hidden;"><div style="position:absolute;bottom:-1px;left:0;width:21px;text-align:center;font:11px 'Liberation Sans', sans-serif;color:#222;line-height:14px;">51</div></div><div style="position:absolute;left:0px;top:981px;width:22px;height:1px;background:#C6C6C6;"></div><div style="position:absolute;left:0;top:968px;width:21px;height:13px;overflow:hidden;"><div style="position:absolute;bottom:-1px;left:0;width:21px;text-align:center;font:11px 'Liberation Sans', sans-serif;color:#222;line-height:14px;">52</div></div><div style="position:absolute;left:0;top:982px;width:21px;height:8px;overflow:hidden;"><div style="position:absolute;bottom:-1px;left:0;width:21px;text-align:center;font:11px 'Liberation Sans', sans-serif;color:#222;line-height:14px;">53</div></div><div style="position:absolute;left:0px;top:385px;width:22px;height:1px;background:#C6C6C6;"></div><div style="position:absolute;left:0px;top:456px;width:22px;height:1px;background:#C6C6C6;"></div><div style="position:absolute;left:0px;top:527px;width:22px;height:1px;background:#C6C6C6;"></div><div style="position:absolute;left:0px;top:598px;width:22px;height:1px;background:#C6C6C6;"></div><div style="position:absolute;left:0px;top:669px;width:22px;height:1px;background:#C6C6C6;"></div><div style="position:absolute;left:0px;top:740px;width:22px;height:1px;background:#C6C6C6;"></div><div style="position:absolute;left:0px;top:811px;width:22px;height:1px;background:#C6C6C6;"></div><div style="position:absolute;left:0px;top:882px;width:22px;height:1px;background:#C6C6C6;"></div><div style="position:absolute;left:0px;top:953px;width:22px;height:1px;background:#C6C6C6;"></div><div style="position:absolute;left:0px;top:1024px;width:22px;height:1px;background:#C6C6C6;"></div><div style="position:absolute;left:339px;top:329px;width:1559px;height:13px;background:#E1E1E1;"></div><div style="position:absolute;left:339px;top:343px;width:1559px;height:13px;background:#FFFCBD;"></div><div style="position:absolute;left:339px;top:400px;width:1559px;height:13px;background:#E1E1E1;"></div><div style="position:absolute;left:339px;top:414px;width:1559px;height:13px;background:#FFFCBD;"></div><div style="position:absolute;left:339px;top:471px;width:1559px;height:13px;background:#E1E1E1;"></div><div style="position:absolute;left:339px;top:485px;width:1559px;height:13px;background:#FFFCBD;"></div><div style="position:absolute;left:339px;top:542px;width:1559px;height:13px;background:#E1E1E1;"></div><div style="position:absolute;left:339px;top:556px;width:1559px;height:13px;background:#FFFCBD;"></div><div style="position:absolute;left:339px;top:613px;width:1559px;height:13px;background:#E1E1E1;"></div><div style="position:absolute;left:339px;top:627px;width:1559px;height:13px;background:#FFFCBD;"></div><div style="position:absolute;left:339px;top:684px;width:1559px;height:13px;background:#E1E1E1;"></div><div style="position:absolute;left:339px;top:698px;width:1559px;height:13px;background:#FFFCBD;"></div><div style="position:absolute;left:339px;top:755px;width:1559px;height:13px;background:#E1E1E1;"></div><div style="position:absolute;left:339px;top:769px;width:1559px;height:13px;background:#FFFCBD;"></div><div style="position:absolute;left:339px;top:826px;width:1559px;height:13px;background:#E1E1E1;"></div><div style="position:absolute;left:339px;top:840px;width:1559px;height:13px;background:#FFFCBD;"></div><div style="position:absolute;left:339px;top:897px;width:1559px;height:13px;background:#E1E1E1;"></div><div style="position:absolute;left:339px;top:911px;width:1559px;height:13px;background:#FFFCBD;"></div><div style="position:absolute;left:339px;top:968px;width:1559px;height:13px;background:#E1E1E1;"></div><div style="position:absolute;left:339px;top:982px;width:1559px;height:13px;background:#FFFCBD;"></div><div style="position:absolute;left:31px;top:279px;width:515px;height:35px;background:#50B27D;"></div><div style="position:absolute;left:546px;top:279px;width:1352px;height:35px;background:#8FCEA9;"></div><div style="position:absolute;left:31px;top:278px;width:1867px;height:1px;background:#A3A3A3;"></div><div style="position:absolute;left:339px;top:328px;width:1559px;height:1px;background:repeating-linear-gradient(to right,#A3A3A3 0 3px,transparent 3px 4px);"></div><div style="position:absolute;left:339px;top:342px;width:1559px;height:1px;background:repeating-linear-gradient(to right,#A3A3A3 0 3px,transparent 3px 4px);"></div><div style="position:absolute;left:339px;top:356px;width:1559px;height:1px;background:repeating-linear-gradient(to right,#A3A3A3 0 3px,transparent 3px 4px);"></div><div style="position:absolute;left:339px;top:370px;width:1559px;height:1px;background:repeating-linear-gradient(to right,#A3A3A3 0 3px,transparent 3px 4px);"></div><div style="position:absolute;left:31px;top:384px;width:1867px;height:2px;background:#A3A3A3;"></div><div style="position:absolute;left:339px;top:399px;width:1559px;height:1px;background:repeating-linear-gradient(to right,#A3A3A3 0 3px,transparent 3px 4px);"></div><div style="position:absolute;left:339px;top:413px;width:1559px;height:1px;background:repeating-linear-gradient(to right,#A3A3A3 0 3px,transparent 3px 4px);"></div><div style="position:absolute;left:339px;top:427px;width:1559px;height:1px;background:repeating-linear-gradient(to right,#A3A3A3 0 3px,transparent 3px 4px);"></div><div style="position:absolute;left:339px;top:441px;width:1559px;height:1px;background:repeating-linear-gradient(to right,#A3A3A3 0 3px,transparent 3px 4px);"></div><div style="position:absolute;left:31px;top:455px;width:1867px;height:2px;background:#A3A3A3;"></div><div style="position:absolute;left:339px;top:470px;width:1559px;height:1px;background:repeating-linear-gradient(to right,#A3A3A3 0 3px,transparent 3px 4px);"></div><div style="position:absolute;left:339px;top:484px;width:1559px;height:1px;background:repeating-linear-gradient(to right,#A3A3A3 0 3px,transparent 3px 4px);"></div><div style="position:absolute;left:339px;top:498px;width:1559px;height:1px;background:repeating-linear-gradient(to right,#A3A3A3 0 3px,transparent 3px 4px);"></div><div style="position:absolute;left:339px;top:512px;width:1559px;height:1px;background:repeating-linear-gradient(to right,#A3A3A3 0 3px,transparent 3px 4px);"></div><div style="position:absolute;left:31px;top:526px;width:1867px;height:2px;background:#A3A3A3;"></div><div style="position:absolute;left:339px;top:541px;width:1559px;height:1px;background:repeating-linear-gradient(to right,#A3A3A3 0 3px,transparent 3px 4px);"></div><div style="position:absolute;left:339px;top:555px;width:1559px;height:1px;background:repeating-linear-gradient(to right,#A3A3A3 0 3px,transparent 3px 4px);"></div><div style="position:absolute;left:339px;top:569px;width:1559px;height:1px;background:repeating-linear-gradient(to right,#A3A3A3 0 3px,transparent 3px 4px);"></div><div style="position:absolute;left:339px;top:583px;width:1559px;height:1px;background:repeating-linear-gradient(to right,#A3A3A3 0 3px,transparent 3px 4px);"></div><div style="position:absolute;left:31px;top:597px;width:1867px;height:2px;background:#A3A3A3;"></div><div style="position:absolute;left:339px;top:612px;width:1559px;height:1px;background:repeating-linear-gradient(to right,#A3A3A3 0 3px,transparent 3px 4px);"></div><div style="position:absolute;left:339px;top:626px;width:1559px;height:1px;background:repeating-linear-gradient(to right,#A3A3A3 0 3px,transparent 3px 4px);"></div><div style="position:absolute;left:339px;top:640px;width:1559px;height:1px;background:repeating-linear-gradient(to right,#A3A3A3 0 3px,transparent 3px 4px);"></div><div style="position:absolute;left:339px;top:654px;width:1559px;height:1px;background:repeating-linear-gradient(to right,#A3A3A3 0 3px,transparent 3px 4px);"></div><div style="position:absolute;left:31px;top:668px;width:1867px;height:2px;background:#A3A3A3;"></div><div style="position:absolute;left:339px;top:683px;width:1559px;height:1px;background:repeating-linear-gradient(to right,#A3A3A3 0 3px,transparent 3px 4px);"></div><div style="position:absolute;left:339px;top:697px;width:1559px;height:1px;background:repeating-linear-gradient(to right,#A3A3A3 0 3px,transparent 3px 4px);"></div><div style="position:absolute;left:339px;top:711px;width:1559px;height:1px;background:repeating-linear-gradient(to right,#A3A3A3 0 3px,transparent 3px 4px);"></div><div style="position:absolute;left:339px;top:725px;width:1559px;height:1px;background:repeating-linear-gradient(to right,#A3A3A3 0 3px,transparent 3px 4px);"></div><div style="position:absolute;left:31px;top:739px;width:1867px;height:2px;background:#A3A3A3;"></div><div style="position:absolute;left:339px;top:754px;width:1559px;height:1px;background:repeating-linear-gradient(to right,#A3A3A3 0 3px,transparent 3px 4px);"></div><div style="position:absolute;left:339px;top:768px;width:1559px;height:1px;background:repeating-linear-gradient(to right,#A3A3A3 0 3px,transparent 3px 4px);"></div><div style="position:absolute;left:339px;top:782px;width:1559px;height:1px;background:repeating-linear-gradient(to right,#A3A3A3 0 3px,transparent 3px 4px);"></div><div style="position:absolute;left:339px;top:796px;width:1559px;height:1px;background:repeating-linear-gradient(to right,#A3A3A3 0 3px,transparent 3px 4px);"></div><div style="position:absolute;left:31px;top:810px;width:1867px;height:2px;background:#A3A3A3;"></div><div style="position:absolute;left:339px;top:825px;width:1559px;height:1px;background:repeating-linear-gradient(to right,#A3A3A3 0 3px,transparent 3px 4px);"></div><div style="position:absolute;left:339px;top:839px;width:1559px;height:1px;background:repeating-linear-gradient(to right,#A3A3A3 0 3px,transparent 3px 4px);"></div><div style="position:absolute;left:339px;top:853px;width:1559px;height:1px;background:repeating-linear-gradient(to right,#A3A3A3 0 3px,transparent 3px 4px);"></div><div style="position:absolute;left:339px;top:867px;width:1559px;height:1px;background:repeating-linear-gradient(to right,#A3A3A3 0 3px,transparent 3px 4px);"></div><div style="position:absolute;left:31px;top:881px;width:1867px;height:2px;background:#A3A3A3;"></div><div style="position:absolute;left:339px;top:896px;width:1559px;height:1px;background:repeating-linear-gradient(to right,#A3A3A3 0 3px,transparent 3px 4px);"></div><div style="position:absolute;left:339px;top:910px;width:1559px;height:1px;background:repeating-linear-gradient(to right,#A3A3A3 0 3px,transparent 3px 4px);"></div><div style="position:absolute;left:339px;top:924px;width:1559px;height:1px;background:repeating-linear-gradient(to right,#A3A3A3 0 3px,transparent 3px 4px);"></div><div style="position:absolute;left:339px;top:938px;width:1559px;height:1px;background:repeating-linear-gradient(to right,#A3A3A3 0 3px,transparent 3px 4px);"></div><div style="position:absolute;left:31px;top:952px;width:1867px;height:2px;background:#A3A3A3;"></div><div style="position:absolute;left:339px;top:967px;width:1559px;height:1px;background:repeating-linear-gradient(to right,#A3A3A3 0 3px,transparent 3px 4px);"></div><div style="position:absolute;left:339px;top:981px;width:1559px;height:1px;background:repeating-linear-gradient(to right,#A3A3A3 0 3px,transparent 3px 4px);"></div><div style="position:absolute;left:339px;top:995px;width:1559px;height:1px;background:repeating-linear-gradient(to right,#A3A3A3 0 3px,transparent 3px 4px);"></div><div style="position:absolute;left:339px;top:1009px;width:1559px;height:1px;background:repeating-linear-gradient(to right,#A3A3A3 0 3px,transparent 3px 4px);"></div><div style="position:absolute;left:108px;top:279px;width:1px;height:35px;background:repeating-linear-gradient(to bottom,#A3A3A3 0 2px,#FFFFFF 2px 3px,#A3A3A3 3px 4px);"></div><div style="position:absolute;left:108px;top:315px;width:1px;height:675px;background:repeating-linear-gradient(to bottom,#A3A3A3 0 3px,transparent 3px 4px);"></div><div style="position:absolute;left:185px;top:279px;width:1px;height:35px;background:repeating-linear-gradient(to bottom,#A3A3A3 0 2px,#FFFFFF 2px 3px,#A3A3A3 3px 4px);"></div><div style="position:absolute;left:185px;top:315px;width:1px;height:675px;background:repeating-linear-gradient(to bottom,#A3A3A3 0 3px,transparent 3px 4px);"></div><div style="position:absolute;left:262px;top:279px;width:1px;height:35px;background:repeating-linear-gradient(to bottom,#A3A3A3 0 2px,#FFFFFF 2px 3px,#A3A3A3 3px 4px);"></div><div style="position:absolute;left:262px;top:315px;width:1px;height:675px;background:repeating-linear-gradient(to bottom,#A3A3A3 0 3px,transparent 3px 4px);"></div><div style="position:absolute;left:339px;top:279px;width:1px;height:35px;background:repeating-linear-gradient(to bottom,#A3A3A3 0 2px,#FFFFFF 2px 3px,#A3A3A3 3px 4px);"></div><div style="position:absolute;left:339px;top:315px;width:1px;height:675px;background:repeating-linear-gradient(to bottom,#A3A3A3 0 3px,transparent 3px 4px);"></div><div style="position:absolute;left:478px;top:279px;width:1px;height:35px;background:repeating-linear-gradient(to bottom,#A3A3A3 0 2px,#FFFFFF 2px 3px,#A3A3A3 3px 4px);"></div><div style="position:absolute;left:478px;top:315px;width:1px;height:675px;background:repeating-linear-gradient(to bottom,#A3A3A3 0 3px,transparent 3px 4px);"></div><div style="position:absolute;left:604px;top:279px;width:1px;height:35px;background:repeating-linear-gradient(to bottom,#A3A3A3 0 2px,#FFFFFF 2px 3px,#A3A3A3 3px 4px);"></div><div style="position:absolute;left:604px;top:315px;width:1px;height:675px;background:repeating-linear-gradient(to bottom,#A3A3A3 0 3px,transparent 3px 4px);"></div><div style="position:absolute;left:662px;top:279px;width:1px;height:35px;background:repeating-linear-gradient(to bottom,#A3A3A3 0 2px,#FFFFFF 2px 3px,#A3A3A3 3px 4px);"></div><div style="position:absolute;left:662px;top:315px;width:1px;height:675px;background:repeating-linear-gradient(to bottom,#A3A3A3 0 3px,transparent 3px 4px);"></div><div style="position:absolute;left:720px;top:279px;width:1px;height:35px;background:repeating-linear-gradient(to bottom,#A3A3A3 0 2px,#FFFFFF 2px 3px,#A3A3A3 3px 4px);"></div><div style="position:absolute;left:720px;top:315px;width:1px;height:675px;background:repeating-linear-gradient(to bottom,#A3A3A3 0 3px,transparent 3px 4px);"></div><div style="position:absolute;left:778px;top:279px;width:1px;height:35px;background:repeating-linear-gradient(to bottom,#A3A3A3 0 2px,#FFFFFF 2px 3px,#A3A3A3 3px 4px);"></div><div style="position:absolute;left:778px;top:315px;width:1px;height:675px;background:repeating-linear-gradient(to bottom,#A3A3A3 0 3px,transparent 3px 4px);"></div><div style="position:absolute;left:836px;top:279px;width:1px;height:35px;background:repeating-linear-gradient(to bottom,#A3A3A3 0 2px,#FFFFFF 2px 3px,#A3A3A3 3px 4px);"></div><div style="position:absolute;left:836px;top:315px;width:1px;height:675px;background:repeating-linear-gradient(to bottom,#A3A3A3 0 3px,transparent 3px 4px);"></div><div style="position:absolute;left:894px;top:279px;width:1px;height:35px;background:repeating-linear-gradient(to bottom,#A3A3A3 0 2px,#FFFFFF 2px 3px,#A3A3A3 3px 4px);"></div><div style="position:absolute;left:894px;top:315px;width:1px;height:675px;background:repeating-linear-gradient(to bottom,#A3A3A3 0 3px,transparent 3px 4px);"></div><div style="position:absolute;left:952px;top:279px;width:1px;height:35px;background:repeating-linear-gradient(to bottom,#A3A3A3 0 2px,#FFFFFF 2px 3px,#A3A3A3 3px 4px);"></div><div style="position:absolute;left:952px;top:315px;width:1px;height:675px;background:repeating-linear-gradient(to bottom,#A3A3A3 0 3px,transparent 3px 4px);"></div><div style="position:absolute;left:1010px;top:279px;width:1px;height:35px;background:repeating-linear-gradient(to bottom,#A3A3A3 0 2px,#FFFFFF 2px 3px,#A3A3A3 3px 4px);"></div><div style="position:absolute;left:1010px;top:315px;width:1px;height:675px;background:repeating-linear-gradient(to bottom,#A3A3A3 0 3px,transparent 3px 4px);"></div><div style="position:absolute;left:1068px;top:279px;width:1px;height:35px;background:repeating-linear-gradient(to bottom,#A3A3A3 0 2px,#FFFFFF 2px 3px,#A3A3A3 3px 4px);"></div><div style="position:absolute;left:1068px;top:315px;width:1px;height:675px;background:repeating-linear-gradient(to bottom,#A3A3A3 0 3px,transparent 3px 4px);"></div><div style="position:absolute;left:1126px;top:279px;width:1px;height:35px;background:repeating-linear-gradient(to bottom,#A3A3A3 0 2px,#FFFFFF 2px 3px,#A3A3A3 3px 4px);"></div><div style="position:absolute;left:1126px;top:315px;width:1px;height:675px;background:repeating-linear-gradient(to bottom,#A3A3A3 0 3px,transparent 3px 4px);"></div><div style="position:absolute;left:1184px;top:279px;width:1px;height:35px;background:repeating-linear-gradient(to bottom,#A3A3A3 0 2px,#FFFFFF 2px 3px,#A3A3A3 3px 4px);"></div><div style="position:absolute;left:1184px;top:315px;width:1px;height:675px;background:repeating-linear-gradient(to bottom,#A3A3A3 0 3px,transparent 3px 4px);"></div><div style="position:absolute;left:1242px;top:279px;width:1px;height:35px;background:repeating-linear-gradient(to bottom,#A3A3A3 0 2px,#FFFFFF 2px 3px,#A3A3A3 3px 4px);"></div><div style="position:absolute;left:1242px;top:315px;width:1px;height:675px;background:repeating-linear-gradient(to bottom,#A3A3A3 0 3px,transparent 3px 4px);"></div><div style="position:absolute;left:1300px;top:279px;width:1px;height:35px;background:repeating-linear-gradient(to bottom,#A3A3A3 0 2px,#FFFFFF 2px 3px,#A3A3A3 3px 4px);"></div><div style="position:absolute;left:1300px;top:315px;width:1px;height:675px;background:repeating-linear-gradient(to bottom,#A3A3A3 0 3px,transparent 3px 4px);"></div><div style="position:absolute;left:1358px;top:279px;width:1px;height:35px;background:repeating-linear-gradient(to bottom,#A3A3A3 0 2px,#FFFFFF 2px 3px,#A3A3A3 3px 4px);"></div><div style="position:absolute;left:1358px;top:315px;width:1px;height:675px;background:repeating-linear-gradient(to bottom,#A3A3A3 0 3px,transparent 3px 4px);"></div><div style="position:absolute;left:1416px;top:279px;width:1px;height:35px;background:repeating-linear-gradient(to bottom,#A3A3A3 0 2px,#FFFFFF 2px 3px,#A3A3A3 3px 4px);"></div><div style="position:absolute;left:1416px;top:315px;width:1px;height:675px;background:repeating-linear-gradient(to bottom,#A3A3A3 0 3px,transparent 3px 4px);"></div><div style="position:absolute;left:1474px;top:279px;width:1px;height:35px;background:repeating-linear-gradient(to bottom,#A3A3A3 0 2px,#FFFFFF 2px 3px,#A3A3A3 3px 4px);"></div><div style="position:absolute;left:1474px;top:315px;width:1px;height:675px;background:repeating-linear-gradient(to bottom,#A3A3A3 0 3px,transparent 3px 4px);"></div><div style="position:absolute;left:1532px;top:279px;width:1px;height:35px;background:repeating-linear-gradient(to bottom,#A3A3A3 0 2px,#FFFFFF 2px 3px,#A3A3A3 3px 4px);"></div><div style="position:absolute;left:1532px;top:315px;width:1px;height:675px;background:repeating-linear-gradient(to bottom,#A3A3A3 0 3px,transparent 3px 4px);"></div><div style="position:absolute;left:1590px;top:279px;width:1px;height:35px;background:repeating-linear-gradient(to bottom,#A3A3A3 0 2px,#FFFFFF 2px 3px,#A3A3A3 3px 4px);"></div><div style="position:absolute;left:1590px;top:315px;width:1px;height:675px;background:repeating-linear-gradient(to bottom,#A3A3A3 0 3px,transparent 3px 4px);"></div><div style="position:absolute;left:1648px;top:279px;width:1px;height:35px;background:repeating-linear-gradient(to bottom,#A3A3A3 0 2px,#FFFFFF 2px 3px,#A3A3A3 3px 4px);"></div><div style="position:absolute;left:1648px;top:315px;width:1px;height:675px;background:repeating-linear-gradient(to bottom,#A3A3A3 0 3px,transparent 3px 4px);"></div><div style="position:absolute;left:1706px;top:279px;width:1px;height:35px;background:repeating-linear-gradient(to bottom,#A3A3A3 0 2px,#FFFFFF 2px 3px,#A3A3A3 3px 4px);"></div><div style="position:absolute;left:1706px;top:315px;width:1px;height:675px;background:repeating-linear-gradient(to bottom,#A3A3A3 0 3px,transparent 3px 4px);"></div><div style="position:absolute;left:1764px;top:279px;width:1px;height:35px;background:repeating-linear-gradient(to bottom,#A3A3A3 0 2px,#FFFFFF 2px 3px,#A3A3A3 3px 4px);"></div><div style="position:absolute;left:1764px;top:315px;width:1px;height:675px;background:repeating-linear-gradient(to bottom,#A3A3A3 0 3px,transparent 3px 4px);"></div><div style="position:absolute;left:1822px;top:279px;width:1px;height:35px;background:repeating-linear-gradient(to bottom,#A3A3A3 0 2px,#FFFFFF 2px 3px,#A3A3A3 3px 4px);"></div><div style="position:absolute;left:1822px;top:315px;width:1px;height:675px;background:repeating-linear-gradient(to bottom,#A3A3A3 0 3px,transparent 3px 4px);"></div><div style="position:absolute;left:1880px;top:279px;width:1px;height:35px;background:repeating-linear-gradient(to bottom,#A3A3A3 0 2px,#FFFFFF 2px 3px,#A3A3A3 3px 4px);"></div><div style="position:absolute;left:1880px;top:315px;width:1px;height:675px;background:repeating-linear-gradient(to bottom,#A3A3A3 0 3px,transparent 3px 4px);"></div><div style="position:absolute;left:31px;top:278px;width:1px;height:712px;background:#A3A3A3;"></div><div style="position:absolute;left:0px;top:314px;width:1898px;height:1px;background:#A3A3A3;"></div><div style="position:absolute;left:546px;top:223px;width:1px;height:767px;background:#A3A3A3;"></div><div style="position:absolute;left:1898px;top:222px;width:1px;height:768px;background:#A3A3A3;"></div><div style="position:absolute;left:35px;top:233px;white-space:pre;font:bold 16px 'Liberation Sans', sans-serif;color:#4EAF7B;">Master Production Schedule</div><div style="position:absolute;left:31px;top:291px;width:77px;height:14px;line-height:14px;text-align:center;font:11px 'Liberation Sans', sans-serif;color:#FFFFFF;white-space:pre;">Product</div><div style="position:absolute;left:108px;top:291px;width:77px;height:14px;line-height:14px;text-align:center;font:11px 'Liberation Sans', sans-serif;color:#FFFFFF;white-space:pre;">Line</div><div style="position:absolute;left:185px;top:284px;width:77px;height:14px;line-height:14px;text-align:center;font:11px 'Liberation Sans', sans-serif;color:#FFFFFF;white-space:pre;">Minimum lot</div><div style="position:absolute;left:185px;top:298px;width:77px;height:14px;line-height:14px;text-align:center;font:11px 'Liberation Sans', sans-serif;color:#FFFFFF;white-space:pre;">size</div><div style="position:absolute;left:262px;top:284px;width:77px;height:14px;line-height:14px;text-align:center;font:11px 'Liberation Sans', sans-serif;color:#FFFFFF;white-space:pre;">Capacity per</div><div style="position:absolute;left:262px;top:298px;width:77px;height:14px;line-height:14px;text-align:center;font:11px 'Liberation Sans', sans-serif;color:#FFFFFF;white-space:pre;">week</div><div style="position:absolute;left:478px;top:284px;width:68px;height:14px;line-height:14px;text-align:center;font:11px 'Liberation Sans', sans-serif;color:#FFFFFF;white-space:pre;">Initial</div><div style="position:absolute;left:478px;top:298px;width:68px;height:14px;line-height:14px;text-align:center;font:11px 'Liberation Sans', sans-serif;color:#FFFFFF;white-space:pre;">inventory</div><div style="position:absolute;left:546px;top:290px;width:58px;height:14px;line-height:14px;text-align:center;font:11px 'Liberation Sans', sans-serif;color:#1A1A1A;white-space:pre;">W1</div><div style="position:absolute;left:604px;top:290px;width:58px;height:14px;line-height:14px;text-align:center;font:11px 'Liberation Sans', sans-serif;color:#1A1A1A;white-space:pre;">W2</div><div style="position:absolute;left:662px;top:290px;width:58px;height:14px;line-height:14px;text-align:center;font:11px 'Liberation Sans', sans-serif;color:#1A1A1A;white-space:pre;">W3</div><div style="position:absolute;left:720px;top:290px;width:58px;height:14px;line-height:14px;text-align:center;font:11px 'Liberation Sans', sans-serif;color:#1A1A1A;white-space:pre;">W4</div><div style="position:absolute;left:778px;top:290px;width:58px;height:14px;line-height:14px;text-align:center;font:11px 'Liberation Sans', sans-serif;color:#1A1A1A;white-space:pre;">W5</div><div style="position:absolute;left:836px;top:290px;width:58px;height:14px;line-height:14px;text-align:center;font:11px 'Liberation Sans', sans-serif;color:#1A1A1A;white-space:pre;">W6</div><div style="position:absolute;left:894px;top:290px;width:58px;height:14px;line-height:14px;text-align:center;font:11px 'Liberation Sans', sans-serif;color:#1A1A1A;white-space:pre;">W7</div><div style="position:absolute;left:952px;top:290px;width:58px;height:14px;line-height:14px;text-align:center;font:11px 'Liberation Sans', sans-serif;color:#1A1A1A;white-space:pre;">W8</div><div style="position:absolute;left:1010px;top:290px;width:58px;height:14px;line-height:14px;text-align:center;font:11px 'Liberation Sans', sans-serif;color:#1A1A1A;white-space:pre;">W9</div><div style="position:absolute;left:1068px;top:290px;width:58px;height:14px;line-height:14px;text-align:center;font:11px 'Liberation Sans', sans-serif;color:#1A1A1A;white-space:pre;">W10</div><div style="position:absolute;left:1126px;top:290px;width:58px;height:14px;line-height:14px;text-align:center;font:11px 'Liberation Sans', sans-serif;color:#1A1A1A;white-space:pre;">W11</div><div style="position:absolute;left:1184px;top:290px;width:58px;height:14px;line-height:14px;text-align:center;font:11px 'Liberation Sans', sans-serif;color:#1A1A1A;white-space:pre;">W12</div><div style="position:absolute;left:1242px;top:290px;width:58px;height:14px;line-height:14px;text-align:center;font:11px 'Liberation Sans', sans-serif;color:#1A1A1A;white-space:pre;">W13</div><div style="position:absolute;left:1300px;top:290px;width:58px;height:14px;line-height:14px;text-align:center;font:11px 'Liberation Sans', sans-serif;color:#1A1A1A;white-space:pre;">W14</div><div style="position:absolute;left:1358px;top:290px;width:58px;height:14px;line-height:14px;text-align:center;font:11px 'Liberation Sans', sans-serif;color:#1A1A1A;white-space:pre;">W15</div><div style="position:absolute;left:1416px;top:290px;width:58px;height:14px;line-height:14px;text-align:center;font:11px 'Liberation Sans', sans-serif;color:#1A1A1A;white-space:pre;">W16</div><div style="position:absolute;left:1474px;top:290px;width:58px;height:14px;line-height:14px;text-align:center;font:11px 'Liberation Sans', sans-serif;color:#1A1A1A;white-space:pre;">W17</div><div style="position:absolute;left:1532px;top:290px;width:58px;height:14px;line-height:14px;text-align:center;font:11px 'Liberation Sans', sans-serif;color:#1A1A1A;white-space:pre;">W18</div><div style="position:absolute;left:1590px;top:290px;width:58px;height:14px;line-height:14px;text-align:center;font:11px 'Liberation Sans', sans-serif;color:#1A1A1A;white-space:pre;">W19</div><div style="position:absolute;left:1648px;top:290px;width:58px;height:14px;line-height:14px;text-align:center;font:11px 'Liberation Sans', sans-serif;color:#1A1A1A;white-space:pre;">W20</div><div style="position:absolute;left:1706px;top:290px;width:58px;height:14px;line-height:14px;text-align:center;font:11px 'Liberation Sans', sans-serif;color:#1A1A1A;white-space:pre;">W21</div><div style="position:absolute;left:1764px;top:290px;width:58px;height:14px;line-height:14px;text-align:center;font:11px 'Liberation Sans', sans-serif;color:#1A1A1A;white-space:pre;">W22</div><div style="position:absolute;left:1822px;top:290px;width:58px;height:14px;line-height:14px;text-align:center;font:11px 'Liberation Sans', sans-serif;color:#1A1A1A;white-space:pre;">W23</div><div style="position:absolute;left:341px;top:280px;width:46px;height:18px;box-sizing:border-box;background:#F0F0F0;border-top:1px solid #FFFFFF;border-left:1px solid #FFFFFF;border-right:2px solid #7A7A7A;border-bottom:2px solid #7A7A7A;text-align:center;font:11px 'Liberation Sans', sans-serif;color:#111;line-height:17px;">MPS</div><div style="position:absolute;left:387px;top:280px;width:46px;height:18px;box-sizing:border-box;background:#F0F0F0;border-top:1px solid #FFFFFF;border-left:1px solid #FFFFFF;border-right:2px solid #7A7A7A;border-bottom:2px solid #7A7A7A;text-align:center;font:11px 'Liberation Sans', sans-serif;color:#111;line-height:17px;">ATP</div><div style="position:absolute;left:433px;top:280px;width:45px;height:18px;box-sizing:border-box;background:#F0F0F0;border-top:1px solid #FFFFFF;border-left:1px solid #FFFFFF;border-right:2px solid #7A7A7A;border-bottom:2px solid #7A7A7A;text-align:center;font:11px 'Liberation Sans', sans-serif;color:#111;line-height:17px;">Orders</div><div style="position:absolute;left:341px;top:298px;width:137px;height:16px;box-sizing:border-box;background:#F0F0F0;border-top:1px solid #FFFFFF;border-left:1px solid #FFFFFF;border-right:2px solid #7A7A7A;border-bottom:2px solid #7A7A7A;text-align:center;font:11px 'Liberation Sans', sans-serif;color:#111;line-height:17px;">Clear Filter</div><div style="position:absolute;left:342px;top:316px;height:14px;line-height:14px;font:11px 'Liberation Sans', sans-serif;color:#000;white-space:pre;">Customer Orders</div><div style="position:absolute;left:546px;top:316px;width:52.4px;height:14px;line-height:14px;text-align:right;font:11px 'Liberation Sans', sans-serif;color:#000;white-space:pre;">5,000</div><div style="position:absolute;left:604px;top:316px;width:52.4px;height:14px;line-height:14px;text-align:right;font:11px 'Liberation Sans', sans-serif;color:#000;white-space:pre;">3,500</div><div style="position:absolute;left:662px;top:316px;width:52.4px;height:14px;line-height:14px;text-align:right;font:11px 'Liberation Sans', sans-serif;color:#000;white-space:pre;">4,000</div><div style="position:absolute;left:720px;top:316px;width:52.4px;height:14px;line-height:14px;text-align:right;font:11px 'Liberation Sans', sans-serif;color:#000;white-space:pre;">8,000</div><div style="position:absolute;left:778px;top:316px;width:52.4px;height:14px;line-height:14px;text-align:right;font:11px 'Liberation Sans', sans-serif;color:#000;white-space:pre;">2,500</div><div style="position:absolute;left:836px;top:316px;width:39.8px;height:14px;line-height:14px;text-align:right;font:11px 'Liberation Sans', sans-serif;color:#000;white-space:pre;">-</div><div style="position:absolute;left:894px;top:316px;width:52.4px;height:14px;line-height:14px;text-align:right;font:11px 'Liberation Sans', sans-serif;color:#000;white-space:pre;">5,000</div><div style="position:absolute;left:952px;top:316px;width:52.4px;height:14px;line-height:14px;text-align:right;font:11px 'Liberation Sans', sans-serif;color:#000;white-space:pre;">1,500</div><div style="position:absolute;left:1010px;top:316px;width:39.8px;height:14px;line-height:14px;text-align:right;font:11px 'Liberation Sans', sans-serif;color:#000;white-space:pre;">-</div><div style="position:absolute;left:1068px;top:316px;width:52.4px;height:14px;line-height:14px;text-align:right;font:11px 'Liberation Sans', sans-serif;color:#000;white-space:pre;">9,300</div><div style="position:absolute;left:1126px;top:316px;width:52.4px;height:14px;line-height:14px;text-align:right;font:11px 'Liberation Sans', sans-serif;color:#000;white-space:pre;">4,000</div><div style="position:absolute;left:1184px;top:316px;width:39.8px;height:14px;line-height:14px;text-align:right;font:11px 'Liberation Sans', sans-serif;color:#000;white-space:pre;">-</div><div style="position:absolute;left:1242px;top:316px;width:52.4px;height:14px;line-height:14px;text-align:right;font:11px 'Liberation Sans', sans-serif;color:#000;white-space:pre;">3,500</div><div style="position:absolute;left:1300px;top:316px;width:39.8px;height:14px;line-height:14px;text-align:right;font:11px 'Liberation Sans', sans-serif;color:#000;white-space:pre;">-</div><div style="position:absolute;left:1358px;top:316px;width:39.8px;height:14px;line-height:14px;text-align:right;font:11px 'Liberation Sans', sans-serif;color:#000;white-space:pre;">-</div><div style="position:absolute;left:1416px;top:316px;width:39.8px;height:14px;line-height:14px;text-align:right;font:11px 'Liberation Sans', sans-serif;color:#000;white-space:pre;">-</div><div style="position:absolute;left:1474px;top:316px;width:39.8px;height:14px;line-height:14px;text-align:right;font:11px 'Liberation Sans', sans-serif;color:#000;white-space:pre;">-</div><div style="position:absolute;left:1532px;top:316px;width:39.8px;height:14px;line-height:14px;text-align:right;font:11px 'Liberation Sans', sans-serif;color:#000;white-space:pre;">-</div><div style="position:absolute;left:1590px;top:316px;width:39.8px;height:14px;line-height:14px;text-align:right;font:11px 'Liberation Sans', sans-serif;color:#000;white-space:pre;">-</div><div style="position:absolute;left:1648px;top:316px;width:39.8px;height:14px;line-height:14px;text-align:right;font:11px 'Liberation Sans', sans-serif;color:#000;white-space:pre;">-</div><div style="position:absolute;left:1706px;top:316px;width:39.8px;height:14px;line-height:14px;text-align:right;font:11px 'Liberation Sans', sans-serif;color:#000;white-space:pre;">-</div><div style="position:absolute;left:1764px;top:316px;width:39.8px;height:14px;line-height:14px;text-align:right;font:11px 'Liberation Sans', sans-serif;color:#000;white-space:pre;">-</div><div style="position:absolute;left:1822px;top:316px;width:39.8px;height:14px;line-height:14px;text-align:right;font:11px 'Liberation Sans', sans-serif;color:#000;white-space:pre;">-</div><div style="position:absolute;left:342px;top:330px;height:14px;line-height:14px;font:11px 'Liberation Sans', sans-serif;color:#000;white-space:pre;">Projected Inventory</div><div style="position:absolute;left:546px;top:330px;width:52.4px;height:14px;line-height:14px;text-align:right;font:11px 'Liberation Sans', sans-serif;color:#000;white-space:pre;">3,500</div><div style="position:absolute;left:604px;top:330px;width:52.4px;height:14px;line-height:14px;text-align:right;font:11px 'Liberation Sans', sans-serif;color:#000;white-space:pre;">4,000</div><div style="position:absolute;left:662px;top:330px;width:52.4px;height:14px;line-height:14px;text-align:right;font:11px 'Liberation Sans', sans-serif;color:#000;white-space:pre;">8,000</div><div style="position:absolute;left:720px;top:330px;width:52.4px;height:14px;line-height:14px;text-align:right;font:11px 'Liberation Sans', sans-serif;color:#000;white-space:pre;">2,500</div><div style="position:absolute;left:778px;top:330px;width:39.8px;height:14px;line-height:14px;text-align:right;font:11px 'Liberation Sans', sans-serif;color:#000;white-space:pre;">-</div><div style="position:absolute;left:836px;top:330px;width:39.8px;height:14px;line-height:14px;text-align:right;font:11px 'Liberation Sans', sans-serif;color:#000;white-space:pre;">-</div><div style="position:absolute;left:894px;top:330px;width:52.4px;height:14px;line-height:14px;text-align:right;font:11px 'Liberation Sans', sans-serif;color:#000;white-space:pre;">2,000</div><div style="position:absolute;left:952px;top:330px;width:52.4px;height:14px;line-height:14px;text-align:right;font:11px 'Liberation Sans', sans-serif;color:#000;white-space:pre;">500</div><div style="position:absolute;left:1010px;top:330px;width:52.4px;height:14px;line-height:14px;text-align:right;font:11px 'Liberation Sans', sans-serif;color:#000;white-space:pre;">500</div><div style="position:absolute;left:1068px;top:330px;width:52.4px;height:14px;line-height:14px;text-align:right;font:11px 'Liberation Sans', sans-serif;color:#000;white-space:pre;">1,200</div><div style="position:absolute;left:1126px;top:330px;width:39.8px;height:14px;line-height:14px;text-align:right;font:11px 'Liberation Sans', sans-serif;color:#000;white-space:pre;">-</div><div style="position:absolute;left:1184px;top:330px;width:39.8px;height:14px;line-height:14px;text-align:right;font:11px 'Liberation Sans', sans-serif;color:#000;white-space:pre;">-</div><div style="position:absolute;left:1242px;top:330px;width:39.8px;height:14px;line-height:14px;text-align:right;font:11px 'Liberation Sans', sans-serif;color:#000;white-space:pre;">-</div><div style="position:absolute;left:1300px;top:330px;width:39.8px;height:14px;line-height:14px;text-align:right;font:11px 'Liberation Sans', sans-serif;color:#000;white-space:pre;">-</div><div style="position:absolute;left:1358px;top:330px;width:39.8px;height:14px;line-height:14px;text-align:right;font:11px 'Liberation Sans', sans-serif;color:#000;white-space:pre;">-</div><div style="position:absolute;left:1416px;top:330px;width:39.8px;height:14px;line-height:14px;text-align:right;font:11px 'Liberation Sans', sans-serif;color:#000;white-space:pre;">-</div><div style="position:absolute;left:1474px;top:330px;width:39.8px;height:14px;line-height:14px;text-align:right;font:11px 'Liberation Sans', sans-serif;color:#000;white-space:pre;">-</div><div style="position:absolute;left:1532px;top:330px;width:39.8px;height:14px;line-height:14px;text-align:right;font:11px 'Liberation Sans', sans-serif;color:#000;white-space:pre;">-</div><div style="position:absolute;left:1590px;top:330px;width:39.8px;height:14px;line-height:14px;text-align:right;font:11px 'Liberation Sans', sans-serif;color:#000;white-space:pre;">-</div><div style="position:absolute;left:1648px;top:330px;width:39.8px;height:14px;line-height:14px;text-align:right;font:11px 'Liberation Sans', sans-serif;color:#000;white-space:pre;">-</div><div style="position:absolute;left:1706px;top:330px;width:39.8px;height:14px;line-height:14px;text-align:right;font:11px 'Liberation Sans', sans-serif;color:#000;white-space:pre;">-</div><div style="position:absolute;left:1764px;top:330px;width:39.8px;height:14px;line-height:14px;text-align:right;font:11px 'Liberation Sans', sans-serif;color:#000;white-space:pre;">-</div><div style="position:absolute;left:1822px;top:330px;width:39.8px;height:14px;line-height:14px;text-align:right;font:11px 'Liberation Sans', sans-serif;color:#000;white-space:pre;">-</div><div style="position:absolute;left:342px;top:344px;height:14px;line-height:14px;font:11px 'Liberation Sans', sans-serif;color:#000;white-space:pre;">MPS</div><div style="position:absolute;left:546px;top:344px;width:52.4px;height:14px;line-height:14px;text-align:right;font:11px 'Liberation Sans', sans-serif;color:#000;white-space:pre;">3,500</div><div style="position:absolute;left:604px;top:344px;width:52.4px;height:14px;line-height:14px;text-align:right;font:11px 'Liberation Sans', sans-serif;color:#000;white-space:pre;">4,000</div><div style="position:absolute;left:662px;top:344px;width:52.4px;height:14px;line-height:14px;text-align:right;font:11px 'Liberation Sans', sans-serif;color:#000;white-space:pre;">8,000</div><div style="position:absolute;left:720px;top:344px;width:52.4px;height:14px;line-height:14px;text-align:right;font:11px 'Liberation Sans', sans-serif;color:#000;white-space:pre;">2,500</div><div style="position:absolute;left:894px;top:344px;width:52.4px;height:14px;line-height:14px;text-align:right;font:11px 'Liberation Sans', sans-serif;color:#000;white-space:pre;">7,000</div><div style="position:absolute;left:1068px;top:344px;width:52.4px;height:14px;line-height:14px;text-align:right;font:11px 'Liberation Sans', sans-serif;color:#000;white-space:pre;">10,000</div><div style="position:absolute;left:1126px;top:344px;width:52.4px;height:14px;line-height:14px;text-align:right;font:11px 'Liberation Sans', sans-serif;color:#000;white-space:pre;">2,800</div><div style="position:absolute;left:1242px;top:344px;width:52.4px;height:14px;line-height:14px;text-align:right;font:11px 'Liberation Sans', sans-serif;color:#000;white-space:pre;">3,500</div><div style="position:absolute;left:342px;top:358px;height:14px;line-height:14px;font:11px 'Liberation Sans', sans-serif;color:#000;white-space:pre;">Capacity</div><div style="position:absolute;left:546px;top:358px;width:55.4px;height:14px;line-height:14px;text-align:right;font:11px 'Liberation Sans', sans-serif;color:#000;white-space:pre;">29%</div><div style="position:absolute;left:604px;top:358px;width:55.4px;height:14px;line-height:14px;text-align:right;font:11px 'Liberation Sans', sans-serif;color:#000;white-space:pre;">34%</div><div style="position:absolute;left:662px;top:358px;width:55.4px;height:14px;line-height:14px;text-align:right;font:11px 'Liberation Sans', sans-serif;color:#000;white-space:pre;">67%</div><div style="position:absolute;left:720px;top:358px;width:55.4px;height:14px;line-height:14px;text-align:right;font:11px 'Liberation Sans', sans-serif;color:#000;white-space:pre;">21%</div><div style="position:absolute;left:778px;top:358px;width:55.4px;height:14px;line-height:14px;text-align:right;font:11px 'Liberation Sans', sans-serif;color:#000;white-space:pre;">0%</div><div style="position:absolute;left:836px;top:358px;width:55.4px;height:14px;line-height:14px;text-align:right;font:11px 'Liberation Sans', sans-serif;color:#000;white-space:pre;">0%</div><div style="position:absolute;left:894px;top:358px;width:55.4px;height:14px;line-height:14px;text-align:right;font:11px 'Liberation Sans', sans-serif;color:#000;white-space:pre;">59%</div><div style="position:absolute;left:952px;top:358px;width:55.4px;height:14px;line-height:14px;text-align:right;font:11px 'Liberation Sans', sans-serif;color:#000;white-space:pre;">0%</div><div style="position:absolute;left:1010px;top:358px;width:55.4px;height:14px;line-height:14px;text-align:right;font:11px 'Liberation Sans', sans-serif;color:#000;white-space:pre;">0%</div><div style="position:absolute;left:1068px;top:358px;width:55.4px;height:14px;line-height:14px;text-align:right;font:11px 'Liberation Sans', sans-serif;color:#000;white-space:pre;">84%</div><div style="position:absolute;left:1126px;top:358px;width:55.4px;height:14px;line-height:14px;text-align:right;font:11px 'Liberation Sans', sans-serif;color:#000;white-space:pre;">24%</div><div style="position:absolute;left:1184px;top:358px;width:55.4px;height:14px;line-height:14px;text-align:right;font:11px 'Liberation Sans', sans-serif;color:#000;white-space:pre;">0%</div><div style="position:absolute;left:1242px;top:358px;width:55.4px;height:14px;line-height:14px;text-align:right;font:11px 'Liberation Sans', sans-serif;color:#000;white-space:pre;">29%</div><div style="position:absolute;left:1300px;top:358px;width:55.4px;height:14px;line-height:14px;text-align:right;font:11px 'Liberation Sans', sans-serif;color:#000;white-space:pre;">0%</div><div style="position:absolute;left:1358px;top:358px;width:55.4px;height:14px;line-height:14px;text-align:right;font:11px 'Liberation Sans', sans-serif;color:#000;white-space:pre;">0%</div><div style="position:absolute;left:1416px;top:358px;width:55.4px;height:14px;line-height:14px;text-align:right;font:11px 'Liberation Sans', sans-serif;color:#000;white-space:pre;">0%</div><div style="position:absolute;left:1474px;top:358px;width:55.4px;height:14px;line-height:14px;text-align:right;font:11px 'Liberation Sans', sans-serif;color:#000;white-space:pre;">0%</div><div style="position:absolute;left:1532px;top:358px;width:55.4px;height:14px;line-height:14px;text-align:right;font:11px 'Liberation Sans', sans-serif;color:#000;white-space:pre;">0%</div><div style="position:absolute;left:1590px;top:358px;width:55.4px;height:14px;line-height:14px;text-align:right;font:11px 'Liberation Sans', sans-serif;color:#000;white-space:pre;">0%</div><div style="position:absolute;left:1648px;top:358px;width:55.4px;height:14px;line-height:14px;text-align:right;font:11px 'Liberation Sans', sans-serif;color:#000;white-space:pre;">0%</div><div style="position:absolute;left:1706px;top:358px;width:55.4px;height:14px;line-height:14px;text-align:right;font:11px 'Liberation Sans', sans-serif;color:#000;white-space:pre;">0%</div><div style="position:absolute;left:1764px;top:358px;width:55.4px;height:14px;line-height:14px;text-align:right;font:11px 'Liberation Sans', sans-serif;color:#000;white-space:pre;">0%</div><div style="position:absolute;left:1822px;top:358px;width:55.4px;height:14px;line-height:14px;text-align:right;font:11px 'Liberation Sans', sans-serif;color:#000;white-space:pre;">0%</div><div style="position:absolute;left:342px;top:372px;height:14px;line-height:14px;font:11px 'Liberation Sans', sans-serif;color:#000;white-space:pre;">ATP</div><div style="position:absolute;left:546px;top:372px;width:39.8px;height:14px;line-height:14px;text-align:right;font:11px 'Liberation Sans', sans-serif;color:#000;white-space:pre;">-</div><div style="position:absolute;left:604px;top:372px;width:39.8px;height:14px;line-height:14px;text-align:right;font:11px 'Liberation Sans', sans-serif;color:#000;white-space:pre;">-</div><div style="position:absolute;left:662px;top:372px;width:39.8px;height:14px;line-height:14px;text-align:right;font:11px 'Liberation Sans', sans-serif;color:#000;white-space:pre;">-</div><div style="position:absolute;left:720px;top:372px;width:39.8px;height:14px;line-height:14px;text-align:right;font:11px 'Liberation Sans', sans-serif;color:#000;white-space:pre;">-</div><div style="position:absolute;left:778px;top:372px;width:39.8px;height:14px;line-height:14px;text-align:right;font:11px 'Liberation Sans', sans-serif;color:#000;white-space:pre;">-</div><div style="position:absolute;left:894px;top:372px;width:52.4px;height:14px;line-height:14px;text-align:right;font:11px 'Liberation Sans', sans-serif;color:#000;white-space:pre;">500</div><div style="position:absolute;left:952px;top:372px;width:52.4px;height:14px;line-height:14px;text-align:right;font:11px 'Liberation Sans', sans-serif;color:#000;white-space:pre;">500</div><div style="position:absolute;left:1126px;top:372px;width:39.8px;height:14px;line-height:14px;text-align:right;font:11px 'Liberation Sans', sans-serif;color:#000;white-space:pre;">-</div><div style="position:absolute;left:1242px;top:372px;width:39.8px;height:14px;line-height:14px;text-align:right;font:11px 'Liberation Sans', sans-serif;color:#000;white-space:pre;">-</div><div style="position:absolute;left:1300px;top:372px;width:39.8px;height:14px;line-height:14px;text-align:right;font:11px 'Liberation Sans', sans-serif;color:#000;white-space:pre;">-</div><div style="position:absolute;left:1358px;top:372px;width:39.8px;height:14px;line-height:14px;text-align:right;font:11px 'Liberation Sans', sans-serif;color:#000;white-space:pre;">-</div><div style="position:absolute;left:1416px;top:372px;width:39.8px;height:14px;line-height:14px;text-align:right;font:11px 'Liberation Sans', sans-serif;color:#000;white-space:pre;">-</div><div style="position:absolute;left:1474px;top:372px;width:39.8px;height:14px;line-height:14px;text-align:right;font:11px 'Liberation Sans', sans-serif;color:#000;white-space:pre;">-</div><div style="position:absolute;left:1532px;top:372px;width:39.8px;height:14px;line-height:14px;text-align:right;font:11px 'Liberation Sans', sans-serif;color:#000;white-space:pre;">-</div><div style="position:absolute;left:1590px;top:372px;width:39.8px;height:14px;line-height:14px;text-align:right;font:11px 'Liberation Sans', sans-serif;color:#000;white-space:pre;">-</div><div style="position:absolute;left:1648px;top:372px;width:39.8px;height:14px;line-height:14px;text-align:right;font:11px 'Liberation Sans', sans-serif;color:#000;white-space:pre;">-</div><div style="position:absolute;left:1706px;top:372px;width:39.8px;height:14px;line-height:14px;text-align:right;font:11px 'Liberation Sans', sans-serif;color:#000;white-space:pre;">-</div><div style="position:absolute;left:1764px;top:372px;width:39.8px;height:14px;line-height:14px;text-align:right;font:11px 'Liberation Sans', sans-serif;color:#000;white-space:pre;">-</div><div style="position:absolute;left:1822px;top:372px;width:39.8px;height:14px;line-height:14px;text-align:right;font:11px 'Liberation Sans', sans-serif;color:#000;white-space:pre;">-</div><div style="position:absolute;left:31px;top:343px;width:77px;height:14px;line-height:14px;text-align:center;font:11px 'Liberation Sans', sans-serif;color:#000;">Product 1</div><div style="position:absolute;left:108px;top:343px;width:77px;height:14px;line-height:14px;text-align:center;font:11px 'Liberation Sans', sans-serif;color:#000;">Machine 1</div><div style="position:absolute;left:185px;top:343px;width:71.4px;height:14px;line-height:14px;text-align:right;font:11px 'Liberation Sans', sans-serif;color:#000;white-space:pre;">2,376</div><div style="position:absolute;left:262px;top:343px;width:71.4px;height:14px;line-height:14px;text-align:right;font:11px 'Liberation Sans', sans-serif;color:#000;white-space:pre;">11,880</div><div style="position:absolute;left:478px;top:330px;width:62.4px;height:14px;line-height:14px;text-align:right;font:11px 'Liberation Sans', sans-serif;font-weight:bold;color:#000;white-space:pre;">5,000</div><div style="position:absolute;left:342px;top:387px;height:14px;line-height:14px;font:11px 'Liberation Sans', sans-serif;color:#000;white-space:pre;">Customer Orders</div><div style="position:absolute;left:546px;top:387px;width:52.4px;height:14px;line-height:14px;text-align:right;font:11px 'Liberation Sans', sans-serif;color:#000;white-space:pre;">2,710</div><div style="position:absolute;left:604px;top:387px;width:52.4px;height:14px;line-height:14px;text-align:right;font:11px 'Liberation Sans', sans-serif;color:#000;white-space:pre;">3,529</div><div style="position:absolute;left:662px;top:387px;width:52.4px;height:14px;line-height:14px;text-align:right;font:11px 'Liberation Sans', sans-serif;color:#000;white-space:pre;">2,656</div><div style="position:absolute;left:720px;top:387px;width:52.4px;height:14px;line-height:14px;text-align:right;font:11px 'Liberation Sans', sans-serif;color:#000;white-space:pre;">7,741</div><div style="position:absolute;left:778px;top:387px;width:52.4px;height:14px;line-height:14px;text-align:right;font:11px 'Liberation Sans', sans-serif;color:#000;white-space:pre;">4,021</div><div style="position:absolute;left:836px;top:387px;width:39.8px;height:14px;line-height:14px;text-align:right;font:11px 'Liberation Sans', sans-serif;color:#000;white-space:pre;">-</div><div style="position:absolute;left:894px;top:387px;width:52.4px;height:14px;line-height:14px;text-align:right;font:11px 'Liberation Sans', sans-serif;color:#000;white-space:pre;">4,209</div><div style="position:absolute;left:952px;top:387px;width:52.4px;height:14px;line-height:14px;text-align:right;font:11px 'Liberation Sans', sans-serif;color:#000;white-space:pre;">4,584</div><div style="position:absolute;left:1010px;top:387px;width:39.8px;height:14px;line-height:14px;text-align:right;font:11px 'Liberation Sans', sans-serif;color:#000;white-space:pre;">-</div><div style="position:absolute;left:1068px;top:387px;width:52.4px;height:14px;line-height:14px;text-align:right;font:11px 'Liberation Sans', sans-serif;color:#000;white-space:pre;">12,678</div><div style="position:absolute;left:1126px;top:387px;width:52.4px;height:14px;line-height:14px;text-align:right;font:11px 'Liberation Sans', sans-serif;color:#000;white-space:pre;">3,803</div><div style="position:absolute;left:1184px;top:387px;width:39.8px;height:14px;line-height:14px;text-align:right;font:11px 'Liberation Sans', sans-serif;color:#000;white-space:pre;">-</div><div style="position:absolute;left:1242px;top:387px;width:52.4px;height:14px;line-height:14px;text-align:right;font:11px 'Liberation Sans', sans-serif;color:#000;white-space:pre;">4,540</div><div style="position:absolute;left:1300px;top:387px;width:39.8px;height:14px;line-height:14px;text-align:right;font:11px 'Liberation Sans', sans-serif;color:#000;white-space:pre;">-</div><div style="position:absolute;left:1358px;top:387px;width:39.8px;height:14px;line-height:14px;text-align:right;font:11px 'Liberation Sans', sans-serif;color:#000;white-space:pre;">-</div><div style="position:absolute;left:1416px;top:387px;width:39.8px;height:14px;line-height:14px;text-align:right;font:11px 'Liberation Sans', sans-serif;color:#000;white-space:pre;">-</div><div style="position:absolute;left:1474px;top:387px;width:39.8px;height:14px;line-height:14px;text-align:right;font:11px 'Liberation Sans', sans-serif;color:#000;white-space:pre;">-</div><div style="position:absolute;left:1532px;top:387px;width:39.8px;height:14px;line-height:14px;text-align:right;font:11px 'Liberation Sans', sans-serif;color:#000;white-space:pre;">-</div><div style="position:absolute;left:1590px;top:387px;width:39.8px;height:14px;line-height:14px;text-align:right;font:11px 'Liberation Sans', sans-serif;color:#000;white-space:pre;">-</div><div style="position:absolute;left:1648px;top:387px;width:39.8px;height:14px;line-height:14px;text-align:right;font:11px 'Liberation Sans', sans-serif;color:#000;white-space:pre;">-</div><div style="position:absolute;left:1706px;top:387px;width:39.8px;height:14px;line-height:14px;text-align:right;font:11px 'Liberation Sans', sans-serif;color:#000;white-space:pre;">-</div><div style="position:absolute;left:1764px;top:387px;width:39.8px;height:14px;line-height:14px;text-align:right;font:11px 'Liberation Sans', sans-serif;color:#000;white-space:pre;">-</div><div style="position:absolute;left:1822px;top:387px;width:39.8px;height:14px;line-height:14px;text-align:right;font:11px 'Liberation Sans', sans-serif;color:#000;white-space:pre;">-</div><div style="position:absolute;left:342px;top:401px;height:14px;line-height:14px;font:11px 'Liberation Sans', sans-serif;color:#000;white-space:pre;">Projected Inventory</div><div style="position:absolute;left:546px;top:401px;width:52.4px;height:14px;line-height:14px;text-align:right;font:11px 'Liberation Sans', sans-serif;color:#000;white-space:pre;">3,290</div><div style="position:absolute;left:604px;top:401px;width:52.4px;height:14px;line-height:14px;text-align:right;font:11px 'Liberation Sans', sans-serif;color:#000;white-space:pre;">2,761</div><div style="position:absolute;left:662px;top:401px;width:52.4px;height:14px;line-height:14px;text-align:right;font:11px 'Liberation Sans', sans-serif;color:#000;white-space:pre;">3,105</div><div style="position:absolute;left:720px;top:401px;width:52.4px;height:14px;line-height:14px;text-align:right;font:11px 'Liberation Sans', sans-serif;color:#000;white-space:pre;">364</div><div style="position:absolute;left:778px;top:401px;width:52.4px;height:14px;line-height:14px;text-align:right;font:11px 'Liberation Sans', sans-serif;color:#000;white-space:pre;">343</div><div style="position:absolute;left:836px;top:401px;width:52.4px;height:14px;line-height:14px;text-align:right;font:11px 'Liberation Sans', sans-serif;color:#000;white-space:pre;">343</div><div style="position:absolute;left:894px;top:401px;width:52.4px;height:14px;line-height:14px;text-align:right;font:11px 'Liberation Sans', sans-serif;color:#000;white-space:pre;">134</div><div style="position:absolute;left:952px;top:401px;width:52.4px;height:14px;line-height:14px;text-align:right;font:11px 'Liberation Sans', sans-serif;color:#000;white-space:pre;">50</div><div style="position:absolute;left:1010px;top:401px;width:52.4px;height:14px;line-height:14px;text-align:right;font:11px 'Liberation Sans', sans-serif;color:#000;white-space:pre;">7,450</div><div style="position:absolute;left:1068px;top:401px;width:52.4px;height:14px;line-height:14px;text-align:right;font:11px 'Liberation Sans', sans-serif;color:#000;white-space:pre;">2,172</div><div style="position:absolute;left:1126px;top:401px;width:52.4px;height:14px;line-height:14px;text-align:right;font:11px 'Liberation Sans', sans-serif;color:#000;white-space:pre;">69</div><div style="position:absolute;left:1184px;top:401px;width:52.4px;height:14px;line-height:14px;text-align:right;font:11px 'Liberation Sans', sans-serif;color:#000;white-space:pre;">69</div><div style="position:absolute;left:1242px;top:401px;width:52.4px;height:14px;line-height:14px;text-align:right;font:11px 'Liberation Sans', sans-serif;color:#000;white-space:pre;">29</div><div style="position:absolute;left:1300px;top:401px;width:52.4px;height:14px;line-height:14px;text-align:right;font:11px 'Liberation Sans', sans-serif;color:#000;white-space:pre;">29</div><div style="position:absolute;left:1358px;top:401px;width:52.4px;height:14px;line-height:14px;text-align:right;font:11px 'Liberation Sans', sans-serif;color:#000;white-space:pre;">29</div><div style="position:absolute;left:1416px;top:401px;width:52.4px;height:14px;line-height:14px;text-align:right;font:11px 'Liberation Sans', sans-serif;color:#000;white-space:pre;">29</div><div style="position:absolute;left:1474px;top:401px;width:52.4px;height:14px;line-height:14px;text-align:right;font:11px 'Liberation Sans', sans-serif;color:#000;white-space:pre;">29</div><div style="position:absolute;left:1532px;top:401px;width:52.4px;height:14px;line-height:14px;text-align:right;font:11px 'Liberation Sans', sans-serif;color:#000;white-space:pre;">29</div><div style="position:absolute;left:1590px;top:401px;width:52.4px;height:14px;line-height:14px;text-align:right;font:11px 'Liberation Sans', sans-serif;color:#000;white-space:pre;">29</div><div style="position:absolute;left:1648px;top:401px;width:52.4px;height:14px;line-height:14px;text-align:right;font:11px 'Liberation Sans', sans-serif;color:#000;white-space:pre;">29</div><div style="position:absolute;left:1706px;top:401px;width:52.4px;height:14px;line-height:14px;text-align:right;font:11px 'Liberation Sans', sans-serif;color:#000;white-space:pre;">29</div><div style="position:absolute;left:1764px;top:401px;width:52.4px;height:14px;line-height:14px;text-align:right;font:11px 'Liberation Sans', sans-serif;color:#000;white-space:pre;">29</div><div style="position:absolute;left:1822px;top:401px;width:52.4px;height:14px;line-height:14px;text-align:right;font:11px 'Liberation Sans', sans-serif;color:#000;white-space:pre;">29</div><div style="position:absolute;left:342px;top:415px;height:14px;line-height:14px;font:11px 'Liberation Sans', sans-serif;color:#000;white-space:pre;">MPS</div><div style="position:absolute;left:604px;top:415px;width:52.4px;height:14px;line-height:14px;text-align:right;font:11px 'Liberation Sans', sans-serif;color:#000;white-space:pre;">3,000</div><div style="position:absolute;left:662px;top:415px;width:52.4px;height:14px;line-height:14px;text-align:right;font:11px 'Liberation Sans', sans-serif;color:#000;white-space:pre;">3,000</div><div style="position:absolute;left:720px;top:415px;width:52.4px;height:14px;line-height:14px;text-align:right;font:11px 'Liberation Sans', sans-serif;color:#000;white-space:pre;">5,000</div><div style="position:absolute;left:778px;top:415px;width:52.4px;height:14px;line-height:14px;text-align:right;font:11px 'Liberation Sans', sans-serif;color:#000;white-space:pre;">4,000</div><div style="position:absolute;left:894px;top:415px;width:52.4px;height:14px;line-height:14px;text-align:right;font:11px 'Liberation Sans', sans-serif;color:#000;white-space:pre;">4,000</div><div style="position:absolute;left:952px;top:415px;width:52.4px;height:14px;line-height:14px;text-align:right;font:11px 'Liberation Sans', sans-serif;color:#000;white-space:pre;">4,500</div><div style="position:absolute;left:1010px;top:415px;width:52.4px;height:14px;line-height:14px;text-align:right;font:11px 'Liberation Sans', sans-serif;color:#000;white-space:pre;">7,400</div><div style="position:absolute;left:1068px;top:415px;width:52.4px;height:14px;line-height:14px;text-align:right;font:11px 'Liberation Sans', sans-serif;color:#000;white-space:pre;">7,400</div><div style="position:absolute;left:1126px;top:415px;width:52.4px;height:14px;line-height:14px;text-align:right;font:11px 'Liberation Sans', sans-serif;color:#000;white-space:pre;">1,700</div><div style="position:absolute;left:1242px;top:415px;width:52.4px;height:14px;line-height:14px;text-align:right;font:11px 'Liberation Sans', sans-serif;color:#000;white-space:pre;">4,500</div><div style="position:absolute;left:342px;top:429px;height:14px;line-height:14px;font:11px 'Liberation Sans', sans-serif;color:#000;white-space:pre;">Capacity</div><div style="position:absolute;left:546px;top:429px;width:55.4px;height:14px;line-height:14px;text-align:right;font:11px 'Liberation Sans', sans-serif;color:#000;white-space:pre;">0%</div><div style="position:absolute;left:604px;top:429px;width:55.4px;height:14px;line-height:14px;text-align:right;font:11px 'Liberation Sans', sans-serif;color:#000;white-space:pre;">40%</div><div style="position:absolute;left:662px;top:429px;width:55.4px;height:14px;line-height:14px;text-align:right;font:11px 'Liberation Sans', sans-serif;color:#000;white-space:pre;">40%</div><div style="position:absolute;left:720px;top:429px;width:55.4px;height:14px;line-height:14px;text-align:right;font:11px 'Liberation Sans', sans-serif;color:#000;white-space:pre;">67%</div><div style="position:absolute;left:778px;top:429px;width:55.4px;height:14px;line-height:14px;text-align:right;font:11px 'Liberation Sans', sans-serif;color:#000;white-space:pre;">53%</div><div style="position:absolute;left:836px;top:429px;width:55.4px;height:14px;line-height:14px;text-align:right;font:11px 'Liberation Sans', sans-serif;color:#000;white-space:pre;">0%</div><div style="position:absolute;left:894px;top:429px;width:55.4px;height:14px;line-height:14px;text-align:right;font:11px 'Liberation Sans', sans-serif;color:#000;white-space:pre;">53%</div><div style="position:absolute;left:952px;top:429px;width:55.4px;height:14px;line-height:14px;text-align:right;font:11px 'Liberation Sans', sans-serif;color:#000;white-space:pre;">60%</div><div style="position:absolute;left:1010px;top:429px;width:55.4px;height:14px;line-height:14px;text-align:right;font:11px 'Liberation Sans', sans-serif;color:#000;white-space:pre;">99%</div><div style="position:absolute;left:1068px;top:429px;width:55.4px;height:14px;line-height:14px;text-align:right;font:11px 'Liberation Sans', sans-serif;color:#000;white-space:pre;">99%</div><div style="position:absolute;left:1126px;top:429px;width:55.4px;height:14px;line-height:14px;text-align:right;font:11px 'Liberation Sans', sans-serif;color:#000;white-space:pre;">23%</div><div style="position:absolute;left:1184px;top:429px;width:55.4px;height:14px;line-height:14px;text-align:right;font:11px 'Liberation Sans', sans-serif;color:#000;white-space:pre;">0%</div><div style="position:absolute;left:1242px;top:429px;width:55.4px;height:14px;line-height:14px;text-align:right;font:11px 'Liberation Sans', sans-serif;color:#000;white-space:pre;">60%</div><div style="position:absolute;left:1300px;top:429px;width:55.4px;height:14px;line-height:14px;text-align:right;font:11px 'Liberation Sans', sans-serif;color:#000;white-space:pre;">0%</div><div style="position:absolute;left:1358px;top:429px;width:55.4px;height:14px;line-height:14px;text-align:right;font:11px 'Liberation Sans', sans-serif;color:#000;white-space:pre;">0%</div><div style="position:absolute;left:1416px;top:429px;width:55.4px;height:14px;line-height:14px;text-align:right;font:11px 'Liberation Sans', sans-serif;color:#000;white-space:pre;">0%</div><div style="position:absolute;left:1474px;top:429px;width:55.4px;height:14px;line-height:14px;text-align:right;font:11px 'Liberation Sans', sans-serif;color:#000;white-space:pre;">0%</div><div style="position:absolute;left:1532px;top:429px;width:55.4px;height:14px;line-height:14px;text-align:right;font:11px 'Liberation Sans', sans-serif;color:#000;white-space:pre;">0%</div><div style="position:absolute;left:1590px;top:429px;width:55.4px;height:14px;line-height:14px;text-align:right;font:11px 'Liberation Sans', sans-serif;color:#000;white-space:pre;">0%</div><div style="position:absolute;left:1648px;top:429px;width:55.4px;height:14px;line-height:14px;text-align:right;font:11px 'Liberation Sans', sans-serif;color:#000;white-space:pre;">0%</div><div style="position:absolute;left:1706px;top:429px;width:55.4px;height:14px;line-height:14px;text-align:right;font:11px 'Liberation Sans', sans-serif;color:#000;white-space:pre;">0%</div><div style="position:absolute;left:1764px;top:429px;width:55.4px;height:14px;line-height:14px;text-align:right;font:11px 'Liberation Sans', sans-serif;color:#000;white-space:pre;">0%</div><div style="position:absolute;left:1822px;top:429px;width:55.4px;height:14px;line-height:14px;text-align:right;font:11px 'Liberation Sans', sans-serif;color:#000;white-space:pre;">0%</div><div style="position:absolute;left:342px;top:443px;height:14px;line-height:14px;font:11px 'Liberation Sans', sans-serif;color:#000;white-space:pre;">ATP</div><div style="position:absolute;left:604px;top:443px;width:52.4px;height:14px;line-height:14px;text-align:right;font:11px 'Liberation Sans', sans-serif;color:#000;white-space:pre;">105</div><div style="position:absolute;left:778px;top:443px;width:52.4px;height:14px;line-height:14px;text-align:right;font:11px 'Liberation Sans', sans-serif;color:#000;white-space:pre;">343</div><div style="position:absolute;left:952px;top:443px;width:52.4px;height:14px;line-height:14px;text-align:right;font:11px 'Liberation Sans', sans-serif;color:#000;white-space:pre;">50</div><div style="position:absolute;left:1126px;top:443px;width:52.4px;height:14px;line-height:14px;text-align:right;font:11px 'Liberation Sans', sans-serif;color:#000;white-space:pre;">69</div><div style="position:absolute;left:1242px;top:443px;width:52.4px;height:14px;line-height:14px;text-align:right;font:11px 'Liberation Sans', sans-serif;color:#000;white-space:pre;">29</div><div style="position:absolute;left:1300px;top:443px;width:52.4px;height:14px;line-height:14px;text-align:right;font:11px 'Liberation Sans', sans-serif;color:#000;white-space:pre;">29</div><div style="position:absolute;left:1358px;top:443px;width:52.4px;height:14px;line-height:14px;text-align:right;font:11px 'Liberation Sans', sans-serif;color:#000;white-space:pre;">29</div><div style="position:absolute;left:1416px;top:443px;width:52.4px;height:14px;line-height:14px;text-align:right;font:11px 'Liberation Sans', sans-serif;color:#000;white-space:pre;">29</div><div style="position:absolute;left:1474px;top:443px;width:52.4px;height:14px;line-height:14px;text-align:right;font:11px 'Liberation Sans', sans-serif;color:#000;white-space:pre;">29</div><div style="position:absolute;left:1532px;top:443px;width:52.4px;height:14px;line-height:14px;text-align:right;font:11px 'Liberation Sans', sans-serif;color:#000;white-space:pre;">29</div><div style="position:absolute;left:1590px;top:443px;width:52.4px;height:14px;line-height:14px;text-align:right;font:11px 'Liberation Sans', sans-serif;color:#000;white-space:pre;">29</div><div style="position:absolute;left:1648px;top:443px;width:52.4px;height:14px;line-height:14px;text-align:right;font:11px 'Liberation Sans', sans-serif;color:#000;white-space:pre;">29</div><div style="position:absolute;left:1706px;top:443px;width:52.4px;height:14px;line-height:14px;text-align:right;font:11px 'Liberation Sans', sans-serif;color:#000;white-space:pre;">29</div><div style="position:absolute;left:1764px;top:443px;width:52.4px;height:14px;line-height:14px;text-align:right;font:11px 'Liberation Sans', sans-serif;color:#000;white-space:pre;">29</div><div style="position:absolute;left:1822px;top:443px;width:52.4px;height:14px;line-height:14px;text-align:right;font:11px 'Liberation Sans', sans-serif;color:#000;white-space:pre;">29</div><div style="position:absolute;left:31px;top:414px;width:77px;height:14px;line-height:14px;text-align:center;font:11px 'Liberation Sans', sans-serif;color:#000;">Product 2</div><div style="position:absolute;left:108px;top:414px;width:77px;height:14px;line-height:14px;text-align:center;font:11px 'Liberation Sans', sans-serif;color:#000;">Machine 3</div><div style="position:absolute;left:185px;top:414px;width:71.4px;height:14px;line-height:14px;text-align:right;font:11px 'Liberation Sans', sans-serif;color:#000;white-space:pre;">1,496</div><div style="position:absolute;left:262px;top:414px;width:71.4px;height:14px;line-height:14px;text-align:right;font:11px 'Liberation Sans', sans-serif;color:#000;white-space:pre;">7,480</div><div style="position:absolute;left:478px;top:401px;width:62.4px;height:14px;line-height:14px;text-align:right;font:11px 'Liberation Sans', sans-serif;font-weight:bold;color:#000;white-space:pre;">6,000</div><div style="position:absolute;left:342px;top:458px;height:14px;line-height:14px;font:11px 'Liberation Sans', sans-serif;color:#000;white-space:pre;">Customer Orders</div><div style="position:absolute;left:546px;top:458px;width:39.8px;height:14px;line-height:14px;text-align:right;font:11px 'Liberation Sans', sans-serif;color:#000;white-space:pre;">-</div><div style="position:absolute;left:604px;top:458px;width:52.4px;height:14px;line-height:14px;text-align:right;font:11px 'Liberation Sans', sans-serif;color:#000;white-space:pre;">3,914</div><div style="position:absolute;left:662px;top:458px;width:52.4px;height:14px;line-height:14px;text-align:right;font:11px 'Liberation Sans', sans-serif;color:#000;white-space:pre;">3,302</div><div style="position:absolute;left:720px;top:458px;width:52.4px;height:14px;line-height:14px;text-align:right;font:11px 'Liberation Sans', sans-serif;color:#000;white-space:pre;">8,631</div><div style="position:absolute;left:778px;top:458px;width:52.4px;height:14px;line-height:14px;text-align:right;font:11px 'Liberation Sans', sans-serif;color:#000;white-space:pre;">4,137</div><div style="position:absolute;left:836px;top:458px;width:39.8px;height:14px;line-height:14px;text-align:right;font:11px 'Liberation Sans', sans-serif;color:#000;white-space:pre;">-</div><div style="position:absolute;left:894px;top:458px;width:52.4px;height:14px;line-height:14px;text-align:right;font:11px 'Liberation Sans', sans-serif;color:#000;white-space:pre;">3,246</div><div style="position:absolute;left:952px;top:458px;width:52.4px;height:14px;line-height:14px;text-align:right;font:11px 'Liberation Sans', sans-serif;color:#000;white-space:pre;">3,132</div><div style="position:absolute;left:1010px;top:458px;width:39.8px;height:14px;line-height:14px;text-align:right;font:11px 'Liberation Sans', sans-serif;color:#000;white-space:pre;">-</div><div style="position:absolute;left:1068px;top:458px;width:52.4px;height:14px;line-height:14px;text-align:right;font:11px 'Liberation Sans', sans-serif;color:#000;white-space:pre;">13,233</div><div style="position:absolute;left:1126px;top:458px;width:52.4px;height:14px;line-height:14px;text-align:right;font:11px 'Liberation Sans', sans-serif;color:#000;white-space:pre;">4,716</div><div style="position:absolute;left:1184px;top:458px;width:39.8px;height:14px;line-height:14px;text-align:right;font:11px 'Liberation Sans', sans-serif;color:#000;white-space:pre;">-</div><div style="position:absolute;left:1242px;top:458px;width:52.4px;height:14px;line-height:14px;text-align:right;font:11px 'Liberation Sans', sans-serif;color:#000;white-space:pre;">4,698</div><div style="position:absolute;left:1300px;top:458px;width:39.8px;height:14px;line-height:14px;text-align:right;font:11px 'Liberation Sans', sans-serif;color:#000;white-space:pre;">-</div><div style="position:absolute;left:1358px;top:458px;width:39.8px;height:14px;line-height:14px;text-align:right;font:11px 'Liberation Sans', sans-serif;color:#000;white-space:pre;">-</div><div style="position:absolute;left:1416px;top:458px;width:39.8px;height:14px;line-height:14px;text-align:right;font:11px 'Liberation Sans', sans-serif;color:#000;white-space:pre;">-</div><div style="position:absolute;left:1474px;top:458px;width:39.8px;height:14px;line-height:14px;text-align:right;font:11px 'Liberation Sans', sans-serif;color:#000;white-space:pre;">-</div><div style="position:absolute;left:1532px;top:458px;width:39.8px;height:14px;line-height:14px;text-align:right;font:11px 'Liberation Sans', sans-serif;color:#000;white-space:pre;">-</div><div style="position:absolute;left:1590px;top:458px;width:39.8px;height:14px;line-height:14px;text-align:right;font:11px 'Liberation Sans', sans-serif;color:#000;white-space:pre;">-</div><div style="position:absolute;left:1648px;top:458px;width:39.8px;height:14px;line-height:14px;text-align:right;font:11px 'Liberation Sans', sans-serif;color:#000;white-space:pre;">-</div><div style="position:absolute;left:1706px;top:458px;width:39.8px;height:14px;line-height:14px;text-align:right;font:11px 'Liberation Sans', sans-serif;color:#000;white-space:pre;">-</div><div style="position:absolute;left:1764px;top:458px;width:39.8px;height:14px;line-height:14px;text-align:right;font:11px 'Liberation Sans', sans-serif;color:#000;white-space:pre;">-</div><div style="position:absolute;left:1822px;top:458px;width:39.8px;height:14px;line-height:14px;text-align:right;font:11px 'Liberation Sans', sans-serif;color:#000;white-space:pre;">-</div><div style="position:absolute;left:342px;top:472px;height:14px;line-height:14px;font:11px 'Liberation Sans', sans-serif;color:#000;white-space:pre;">Projected Inventory</div><div style="position:absolute;left:546px;top:472px;width:52.4px;height:14px;line-height:14px;text-align:right;font:11px 'Liberation Sans', sans-serif;color:#000;white-space:pre;">4,000</div><div style="position:absolute;left:604px;top:472px;width:52.4px;height:14px;line-height:14px;text-align:right;font:11px 'Liberation Sans', sans-serif;color:#000;white-space:pre;">86</div><div style="position:absolute;left:662px;top:472px;width:52.4px;height:14px;line-height:14px;text-align:right;font:11px 'Liberation Sans', sans-serif;color:#000;white-space:pre;">284</div><div style="position:absolute;left:720px;top:472px;width:52.4px;height:14px;line-height:14px;text-align:right;font:11px 'Liberation Sans', sans-serif;color:#000;white-space:pre;">153</div><div style="position:absolute;left:778px;top:472px;width:52.4px;height:14px;line-height:14px;text-align:right;font:11px 'Liberation Sans', sans-serif;color:#000;white-space:pre;">16</div><div style="position:absolute;left:836px;top:472px;width:52.4px;height:14px;line-height:14px;text-align:right;font:11px 'Liberation Sans', sans-serif;color:#000;white-space:pre;">16</div><div style="position:absolute;left:894px;top:472px;width:52.4px;height:14px;line-height:14px;text-align:right;font:11px 'Liberation Sans', sans-serif;color:#000;white-space:pre;">70</div><div style="position:absolute;left:952px;top:472px;width:52.4px;height:14px;line-height:14px;text-align:right;font:11px 'Liberation Sans', sans-serif;color:#000;white-space:pre;">138</div><div style="position:absolute;left:1010px;top:472px;width:52.4px;height:14px;line-height:14px;text-align:right;font:11px 'Liberation Sans', sans-serif;color:#000;white-space:pre;">7,638</div><div style="position:absolute;left:1068px;top:472px;width:52.4px;height:14px;line-height:14px;text-align:right;font:11px 'Liberation Sans', sans-serif;color:#000;white-space:pre;">1,905</div><div style="position:absolute;left:1126px;top:472px;width:52.4px;height:14px;line-height:14px;text-align:right;font:11px 'Liberation Sans', sans-serif;color:#000;white-space:pre;">189</div><div style="position:absolute;left:1184px;top:472px;width:52.4px;height:14px;line-height:14px;text-align:right;font:11px 'Liberation Sans', sans-serif;color:#000;white-space:pre;">189</div><div style="position:absolute;left:1242px;top:472px;width:52.4px;height:14px;line-height:14px;text-align:right;font:11px 'Liberation Sans', sans-serif;color:#000;white-space:pre;">91</div><div style="position:absolute;left:1300px;top:472px;width:52.4px;height:14px;line-height:14px;text-align:right;font:11px 'Liberation Sans', sans-serif;color:#000;white-space:pre;">91</div><div style="position:absolute;left:1358px;top:472px;width:52.4px;height:14px;line-height:14px;text-align:right;font:11px 'Liberation Sans', sans-serif;color:#000;white-space:pre;">91</div><div style="position:absolute;left:1416px;top:472px;width:52.4px;height:14px;line-height:14px;text-align:right;font:11px 'Liberation Sans', sans-serif;color:#000;white-space:pre;">91</div><div style="position:absolute;left:1474px;top:472px;width:52.4px;height:14px;line-height:14px;text-align:right;font:11px 'Liberation Sans', sans-serif;color:#000;white-space:pre;">91</div><div style="position:absolute;left:1532px;top:472px;width:52.4px;height:14px;line-height:14px;text-align:right;font:11px 'Liberation Sans', sans-serif;color:#000;white-space:pre;">91</div><div style="position:absolute;left:1590px;top:472px;width:52.4px;height:14px;line-height:14px;text-align:right;font:11px 'Liberation Sans', sans-serif;color:#000;white-space:pre;">91</div><div style="position:absolute;left:1648px;top:472px;width:52.4px;height:14px;line-height:14px;text-align:right;font:11px 'Liberation Sans', sans-serif;color:#000;white-space:pre;">91</div><div style="position:absolute;left:1706px;top:472px;width:52.4px;height:14px;line-height:14px;text-align:right;font:11px 'Liberation Sans', sans-serif;color:#000;white-space:pre;">91</div><div style="position:absolute;left:1764px;top:472px;width:52.4px;height:14px;line-height:14px;text-align:right;font:11px 'Liberation Sans', sans-serif;color:#000;white-space:pre;">91</div><div style="position:absolute;left:1822px;top:472px;width:52.4px;height:14px;line-height:14px;text-align:right;font:11px 'Liberation Sans', sans-serif;color:#000;white-space:pre;">91</div><div style="position:absolute;left:342px;top:486px;height:14px;line-height:14px;font:11px 'Liberation Sans', sans-serif;color:#000;white-space:pre;">MPS</div><div style="position:absolute;left:662px;top:486px;width:52.4px;height:14px;line-height:14px;text-align:right;font:11px 'Liberation Sans', sans-serif;color:#000;white-space:pre;">3,500</div><div style="position:absolute;left:720px;top:486px;width:52.4px;height:14px;line-height:14px;text-align:right;font:11px 'Liberation Sans', sans-serif;color:#000;white-space:pre;">8,500</div><div style="position:absolute;left:778px;top:486px;width:52.4px;height:14px;line-height:14px;text-align:right;font:11px 'Liberation Sans', sans-serif;color:#000;white-space:pre;">4,000</div><div style="position:absolute;left:894px;top:486px;width:52.4px;height:14px;line-height:14px;text-align:right;font:11px 'Liberation Sans', sans-serif;color:#000;white-space:pre;">3,300</div><div style="position:absolute;left:952px;top:486px;width:52.4px;height:14px;line-height:14px;text-align:right;font:11px 'Liberation Sans', sans-serif;color:#000;white-space:pre;">3,200</div><div style="position:absolute;left:1010px;top:486px;width:52.4px;height:14px;line-height:14px;text-align:right;font:11px 'Liberation Sans', sans-serif;color:#000;white-space:pre;">7,500</div><div style="position:absolute;left:1068px;top:486px;width:52.4px;height:14px;line-height:14px;text-align:right;font:11px 'Liberation Sans', sans-serif;color:#000;white-space:pre;">7,500</div><div style="position:absolute;left:1126px;top:486px;width:52.4px;height:14px;line-height:14px;text-align:right;font:11px 'Liberation Sans', sans-serif;color:#000;white-space:pre;">3,000</div><div style="position:absolute;left:1242px;top:486px;width:52.4px;height:14px;line-height:14px;text-align:right;font:11px 'Liberation Sans', sans-serif;color:#000;white-space:pre;">4,600</div><div style="position:absolute;left:342px;top:500px;height:14px;line-height:14px;font:11px 'Liberation Sans', sans-serif;color:#000;white-space:pre;">Capacity</div><div style="position:absolute;left:546px;top:500px;width:55.4px;height:14px;line-height:14px;text-align:right;font:11px 'Liberation Sans', sans-serif;color:#000;white-space:pre;">0%</div><div style="position:absolute;left:604px;top:500px;width:55.4px;height:14px;line-height:14px;text-align:right;font:11px 'Liberation Sans', sans-serif;color:#000;white-space:pre;">0%</div><div style="position:absolute;left:662px;top:500px;width:55.4px;height:14px;line-height:14px;text-align:right;font:11px 'Liberation Sans', sans-serif;color:#000;white-space:pre;">35%</div><div style="position:absolute;left:720px;top:500px;width:55.4px;height:14px;line-height:14px;text-align:right;font:11px 'Liberation Sans', sans-serif;color:#000;white-space:pre;">85%</div><div style="position:absolute;left:778px;top:500px;width:55.4px;height:14px;line-height:14px;text-align:right;font:11px 'Liberation Sans', sans-serif;color:#000;white-space:pre;">40%</div><div style="position:absolute;left:836px;top:500px;width:55.4px;height:14px;line-height:14px;text-align:right;font:11px 'Liberation Sans', sans-serif;color:#000;white-space:pre;">0%</div><div style="position:absolute;left:894px;top:500px;width:55.4px;height:14px;line-height:14px;text-align:right;font:11px 'Liberation Sans', sans-serif;color:#000;white-space:pre;">33%</div><div style="position:absolute;left:952px;top:500px;width:55.4px;height:14px;line-height:14px;text-align:right;font:11px 'Liberation Sans', sans-serif;color:#000;white-space:pre;">32%</div><div style="position:absolute;left:1010px;top:500px;width:55.4px;height:14px;line-height:14px;text-align:right;font:11px 'Liberation Sans', sans-serif;color:#000;white-space:pre;">75%</div><div style="position:absolute;left:1068px;top:500px;width:55.4px;height:14px;line-height:14px;text-align:right;font:11px 'Liberation Sans', sans-serif;color:#000;white-space:pre;">75%</div><div style="position:absolute;left:1126px;top:500px;width:55.4px;height:14px;line-height:14px;text-align:right;font:11px 'Liberation Sans', sans-serif;color:#000;white-space:pre;">30%</div><div style="position:absolute;left:1184px;top:500px;width:55.4px;height:14px;line-height:14px;text-align:right;font:11px 'Liberation Sans', sans-serif;color:#000;white-space:pre;">0%</div><div style="position:absolute;left:1242px;top:500px;width:55.4px;height:14px;line-height:14px;text-align:right;font:11px 'Liberation Sans', sans-serif;color:#000;white-space:pre;">46%</div><div style="position:absolute;left:1300px;top:500px;width:55.4px;height:14px;line-height:14px;text-align:right;font:11px 'Liberation Sans', sans-serif;color:#000;white-space:pre;">0%</div><div style="position:absolute;left:1358px;top:500px;width:55.4px;height:14px;line-height:14px;text-align:right;font:11px 'Liberation Sans', sans-serif;color:#000;white-space:pre;">0%</div><div style="position:absolute;left:1416px;top:500px;width:55.4px;height:14px;line-height:14px;text-align:right;font:11px 'Liberation Sans', sans-serif;color:#000;white-space:pre;">0%</div><div style="position:absolute;left:1474px;top:500px;width:55.4px;height:14px;line-height:14px;text-align:right;font:11px 'Liberation Sans', sans-serif;color:#000;white-space:pre;">0%</div><div style="position:absolute;left:1532px;top:500px;width:55.4px;height:14px;line-height:14px;text-align:right;font:11px 'Liberation Sans', sans-serif;color:#000;white-space:pre;">0%</div><div style="position:absolute;left:1590px;top:500px;width:55.4px;height:14px;line-height:14px;text-align:right;font:11px 'Liberation Sans', sans-serif;color:#000;white-space:pre;">0%</div><div style="position:absolute;left:1648px;top:500px;width:55.4px;height:14px;line-height:14px;text-align:right;font:11px 'Liberation Sans', sans-serif;color:#000;white-space:pre;">0%</div><div style="position:absolute;left:1706px;top:500px;width:55.4px;height:14px;line-height:14px;text-align:right;font:11px 'Liberation Sans', sans-serif;color:#000;white-space:pre;">0%</div><div style="position:absolute;left:1764px;top:500px;width:55.4px;height:14px;line-height:14px;text-align:right;font:11px 'Liberation Sans', sans-serif;color:#000;white-space:pre;">0%</div><div style="position:absolute;left:1822px;top:500px;width:55.4px;height:14px;line-height:14px;text-align:right;font:11px 'Liberation Sans', sans-serif;color:#000;white-space:pre;">0%</div><div style="position:absolute;left:342px;top:514px;height:14px;line-height:14px;font:11px 'Liberation Sans', sans-serif;color:#000;white-space:pre;">ATP</div><div style="position:absolute;left:546px;top:514px;width:52.4px;height:14px;line-height:14px;text-align:right;font:11px 'Liberation Sans', sans-serif;color:#000;white-space:pre;">86</div><div style="position:absolute;left:778px;top:514px;width:52.4px;height:14px;line-height:14px;text-align:right;font:11px 'Liberation Sans', sans-serif;color:#000;white-space:pre;">16</div><div style="position:absolute;left:952px;top:514px;width:52.4px;height:14px;line-height:14px;text-align:right;font:11px 'Liberation Sans', sans-serif;color:#000;white-space:pre;">138</div><div style="position:absolute;left:1126px;top:514px;width:52.4px;height:14px;line-height:14px;text-align:right;font:11px 'Liberation Sans', sans-serif;color:#000;white-space:pre;">189</div><div style="position:absolute;left:1242px;top:514px;width:52.4px;height:14px;line-height:14px;text-align:right;font:11px 'Liberation Sans', sans-serif;color:#000;white-space:pre;">91</div><div style="position:absolute;left:1300px;top:514px;width:52.4px;height:14px;line-height:14px;text-align:right;font:11px 'Liberation Sans', sans-serif;color:#000;white-space:pre;">91</div><div style="position:absolute;left:1358px;top:514px;width:52.4px;height:14px;line-height:14px;text-align:right;font:11px 'Liberation Sans', sans-serif;color:#000;white-space:pre;">91</div><div style="position:absolute;left:1416px;top:514px;width:52.4px;height:14px;line-height:14px;text-align:right;font:11px 'Liberation Sans', sans-serif;color:#000;white-space:pre;">91</div><div style="position:absolute;left:1474px;top:514px;width:52.4px;height:14px;line-height:14px;text-align:right;font:11px 'Liberation Sans', sans-serif;color:#000;white-space:pre;">91</div><div style="position:absolute;left:1532px;top:514px;width:52.4px;height:14px;line-height:14px;text-align:right;font:11px 'Liberation Sans', sans-serif;color:#000;white-space:pre;">91</div><div style="position:absolute;left:1590px;top:514px;width:52.4px;height:14px;line-height:14px;text-align:right;font:11px 'Liberation Sans', sans-serif;color:#000;white-space:pre;">91</div><div style="position:absolute;left:1648px;top:514px;width:52.4px;height:14px;line-height:14px;text-align:right;font:11px 'Liberation Sans', sans-serif;color:#000;white-space:pre;">91</div><div style="position:absolute;left:1706px;top:514px;width:52.4px;height:14px;line-height:14px;text-align:right;font:11px 'Liberation Sans', sans-serif;color:#000;white-space:pre;">91</div><div style="position:absolute;left:1764px;top:514px;width:52.4px;height:14px;line-height:14px;text-align:right;font:11px 'Liberation Sans', sans-serif;color:#000;white-space:pre;">91</div><div style="position:absolute;left:1822px;top:514px;width:52.4px;height:14px;line-height:14px;text-align:right;font:11px 'Liberation Sans', sans-serif;color:#000;white-space:pre;">91</div><div style="position:absolute;left:31px;top:485px;width:77px;height:14px;line-height:14px;text-align:center;font:11px 'Liberation Sans', sans-serif;color:#000;">Product 3</div><div style="position:absolute;left:108px;top:485px;width:77px;height:14px;line-height:14px;text-align:center;font:11px 'Liberation Sans', sans-serif;color:#000;">Machine 3</div><div style="position:absolute;left:185px;top:485px;width:71.4px;height:14px;line-height:14px;text-align:right;font:11px 'Liberation Sans', sans-serif;color:#000;white-space:pre;">1,991</div><div style="position:absolute;left:262px;top:485px;width:71.4px;height:14px;line-height:14px;text-align:right;font:11px 'Liberation Sans', sans-serif;color:#000;white-space:pre;">9,957</div><div style="position:absolute;left:478px;top:472px;width:62.4px;height:14px;line-height:14px;text-align:right;font:11px 'Liberation Sans', sans-serif;font-weight:bold;color:#000;white-space:pre;">4,000</div><div style="position:absolute;left:342px;top:529px;height:14px;line-height:14px;font:11px 'Liberation Sans', sans-serif;color:#000;white-space:pre;">Customer Orders</div><div style="position:absolute;left:546px;top:529px;width:39.8px;height:14px;line-height:14px;text-align:right;font:11px 'Liberation Sans', sans-serif;color:#000;white-space:pre;">-</div><div style="position:absolute;left:604px;top:529px;width:52.4px;height:14px;line-height:14px;text-align:right;font:11px 'Liberation Sans', sans-serif;color:#000;white-space:pre;">3,039</div><div style="position:absolute;left:662px;top:529px;width:52.4px;height:14px;line-height:14px;text-align:right;font:11px 'Liberation Sans', sans-serif;color:#000;white-space:pre;">3,574</div><div style="position:absolute;left:720px;top:529px;width:52.4px;height:14px;line-height:14px;text-align:right;font:11px 'Liberation Sans', sans-serif;color:#000;white-space:pre;">8,403</div><div style="position:absolute;left:778px;top:529px;width:52.4px;height:14px;line-height:14px;text-align:right;font:11px 'Liberation Sans', sans-serif;color:#000;white-space:pre;">2,354</div><div style="position:absolute;left:836px;top:529px;width:39.8px;height:14px;line-height:14px;text-align:right;font:11px 'Liberation Sans', sans-serif;color:#000;white-space:pre;">-</div><div style="position:absolute;left:894px;top:529px;width:52.4px;height:14px;line-height:14px;text-align:right;font:11px 'Liberation Sans', sans-serif;color:#000;white-space:pre;">2,752</div><div style="position:absolute;left:952px;top:529px;width:52.4px;height:14px;line-height:14px;text-align:right;font:11px 'Liberation Sans', sans-serif;color:#000;white-space:pre;">3,440</div><div style="position:absolute;left:1010px;top:529px;width:39.8px;height:14px;line-height:14px;text-align:right;font:11px 'Liberation Sans', sans-serif;color:#000;white-space:pre;">-</div><div style="position:absolute;left:1068px;top:529px;width:52.4px;height:14px;line-height:14px;text-align:right;font:11px 'Liberation Sans', sans-serif;color:#000;white-space:pre;">10,616</div><div style="position:absolute;left:1126px;top:529px;width:52.4px;height:14px;line-height:14px;text-align:right;font:11px 'Liberation Sans', sans-serif;color:#000;white-space:pre;">2,023</div><div style="position:absolute;left:1184px;top:529px;width:39.8px;height:14px;line-height:14px;text-align:right;font:11px 'Liberation Sans', sans-serif;color:#000;white-space:pre;">-</div><div style="position:absolute;left:1242px;top:529px;width:52.4px;height:14px;line-height:14px;text-align:right;font:11px 'Liberation Sans', sans-serif;color:#000;white-space:pre;">3,151</div><div style="position:absolute;left:1300px;top:529px;width:39.8px;height:14px;line-height:14px;text-align:right;font:11px 'Liberation Sans', sans-serif;color:#000;white-space:pre;">-</div><div style="position:absolute;left:1358px;top:529px;width:39.8px;height:14px;line-height:14px;text-align:right;font:11px 'Liberation Sans', sans-serif;color:#000;white-space:pre;">-</div><div style="position:absolute;left:1416px;top:529px;width:39.8px;height:14px;line-height:14px;text-align:right;font:11px 'Liberation Sans', sans-serif;color:#000;white-space:pre;">-</div><div style="position:absolute;left:1474px;top:529px;width:39.8px;height:14px;line-height:14px;text-align:right;font:11px 'Liberation Sans', sans-serif;color:#000;white-space:pre;">-</div><div style="position:absolute;left:1532px;top:529px;width:39.8px;height:14px;line-height:14px;text-align:right;font:11px 'Liberation Sans', sans-serif;color:#000;white-space:pre;">-</div><div style="position:absolute;left:1590px;top:529px;width:39.8px;height:14px;line-height:14px;text-align:right;font:11px 'Liberation Sans', sans-serif;color:#000;white-space:pre;">-</div><div style="position:absolute;left:1648px;top:529px;width:39.8px;height:14px;line-height:14px;text-align:right;font:11px 'Liberation Sans', sans-serif;color:#000;white-space:pre;">-</div><div style="position:absolute;left:1706px;top:529px;width:39.8px;height:14px;line-height:14px;text-align:right;font:11px 'Liberation Sans', sans-serif;color:#000;white-space:pre;">-</div><div style="position:absolute;left:1764px;top:529px;width:39.8px;height:14px;line-height:14px;text-align:right;font:11px 'Liberation Sans', sans-serif;color:#000;white-space:pre;">-</div><div style="position:absolute;left:1822px;top:529px;width:39.8px;height:14px;line-height:14px;text-align:right;font:11px 'Liberation Sans', sans-serif;color:#000;white-space:pre;">-</div><div style="position:absolute;left:342px;top:543px;height:14px;line-height:14px;font:11px 'Liberation Sans', sans-serif;color:#000;white-space:pre;">Projected Inventory</div><div style="position:absolute;left:546px;top:543px;width:52.4px;height:14px;line-height:14px;text-align:right;font:11px 'Liberation Sans', sans-serif;color:#000;white-space:pre;">4,000</div><div style="position:absolute;left:604px;top:543px;width:52.4px;height:14px;line-height:14px;text-align:right;font:11px 'Liberation Sans', sans-serif;color:#000;white-space:pre;">961</div><div style="position:absolute;left:662px;top:543px;width:52.4px;height:14px;line-height:14px;text-align:right;font:11px 'Liberation Sans', sans-serif;color:#000;white-space:pre;">7,387</div><div style="position:absolute;left:720px;top:543px;width:52.4px;height:14px;line-height:14px;text-align:right;font:11px 'Liberation Sans', sans-serif;color:#000;white-space:pre;">2,484</div><div style="position:absolute;left:778px;top:543px;width:52.4px;height:14px;line-height:14px;text-align:right;font:11px 'Liberation Sans', sans-serif;color:#000;white-space:pre;">130</div><div style="position:absolute;left:836px;top:543px;width:52.4px;height:14px;line-height:14px;text-align:right;font:11px 'Liberation Sans', sans-serif;color:#000;white-space:pre;">130</div><div style="position:absolute;left:894px;top:543px;width:52.4px;height:14px;line-height:14px;text-align:right;font:11px 'Liberation Sans', sans-serif;color:#000;white-space:pre;">378</div><div style="position:absolute;left:952px;top:543px;width:52.4px;height:14px;line-height:14px;text-align:right;font:11px 'Liberation Sans', sans-serif;color:#000;white-space:pre;">138</div><div style="position:absolute;left:1010px;top:543px;width:52.4px;height:14px;line-height:14px;text-align:right;font:11px 'Liberation Sans', sans-serif;color:#000;white-space:pre;">2,638</div><div style="position:absolute;left:1068px;top:543px;width:52.4px;height:14px;line-height:14px;text-align:right;font:11px 'Liberation Sans', sans-serif;color:#000;white-space:pre;">22</div><div style="position:absolute;left:1126px;top:543px;width:52.4px;height:14px;line-height:14px;text-align:right;font:11px 'Liberation Sans', sans-serif;color:#000;white-space:pre;">199</div><div style="position:absolute;left:1184px;top:543px;width:52.4px;height:14px;line-height:14px;text-align:right;font:11px 'Liberation Sans', sans-serif;color:#000;white-space:pre;">199</div><div style="position:absolute;left:1242px;top:543px;width:52.4px;height:14px;line-height:14px;text-align:right;font:11px 'Liberation Sans', sans-serif;color:#000;white-space:pre;">48</div><div style="position:absolute;left:1300px;top:543px;width:52.4px;height:14px;line-height:14px;text-align:right;font:11px 'Liberation Sans', sans-serif;color:#000;white-space:pre;">48</div><div style="position:absolute;left:1358px;top:543px;width:52.4px;height:14px;line-height:14px;text-align:right;font:11px 'Liberation Sans', sans-serif;color:#000;white-space:pre;">48</div><div style="position:absolute;left:1416px;top:543px;width:52.4px;height:14px;line-height:14px;text-align:right;font:11px 'Liberation Sans', sans-serif;color:#000;white-space:pre;">48</div><div style="position:absolute;left:1474px;top:543px;width:52.4px;height:14px;line-height:14px;text-align:right;font:11px 'Liberation Sans', sans-serif;color:#000;white-space:pre;">48</div><div style="position:absolute;left:1532px;top:543px;width:52.4px;height:14px;line-height:14px;text-align:right;font:11px 'Liberation Sans', sans-serif;color:#000;white-space:pre;">48</div><div style="position:absolute;left:1590px;top:543px;width:52.4px;height:14px;line-height:14px;text-align:right;font:11px 'Liberation Sans', sans-serif;color:#000;white-space:pre;">48</div><div style="position:absolute;left:1648px;top:543px;width:52.4px;height:14px;line-height:14px;text-align:right;font:11px 'Liberation Sans', sans-serif;color:#000;white-space:pre;">48</div><div style="position:absolute;left:1706px;top:543px;width:52.4px;height:14px;line-height:14px;text-align:right;font:11px 'Liberation Sans', sans-serif;color:#000;white-space:pre;">48</div><div style="position:absolute;left:1764px;top:543px;width:52.4px;height:14px;line-height:14px;text-align:right;font:11px 'Liberation Sans', sans-serif;color:#000;white-space:pre;">48</div><div style="position:absolute;left:1822px;top:543px;width:52.4px;height:14px;line-height:14px;text-align:right;font:11px 'Liberation Sans', sans-serif;color:#000;white-space:pre;">48</div><div style="position:absolute;left:342px;top:557px;height:14px;line-height:14px;font:11px 'Liberation Sans', sans-serif;color:#000;white-space:pre;">MPS</div><div style="position:absolute;left:662px;top:557px;width:52.4px;height:14px;line-height:14px;text-align:right;font:11px 'Liberation Sans', sans-serif;color:#000;white-space:pre;">10,000</div><div style="position:absolute;left:720px;top:557px;width:52.4px;height:14px;line-height:14px;text-align:right;font:11px 'Liberation Sans', sans-serif;color:#000;white-space:pre;">3,500</div><div style="position:absolute;left:894px;top:557px;width:52.4px;height:14px;line-height:14px;text-align:right;font:11px 'Liberation Sans', sans-serif;color:#000;white-space:pre;">3,000</div><div style="position:absolute;left:952px;top:557px;width:52.4px;height:14px;line-height:14px;text-align:right;font:11px 'Liberation Sans', sans-serif;color:#000;white-space:pre;">3,200</div><div style="position:absolute;left:1010px;top:557px;width:52.4px;height:14px;line-height:14px;text-align:right;font:11px 'Liberation Sans', sans-serif;color:#000;white-space:pre;">2,500</div><div style="position:absolute;left:1068px;top:557px;width:52.4px;height:14px;line-height:14px;text-align:right;font:11px 'Liberation Sans', sans-serif;color:#000;white-space:pre;">8,000</div><div style="position:absolute;left:1126px;top:557px;width:52.4px;height:14px;line-height:14px;text-align:right;font:11px 'Liberation Sans', sans-serif;color:#000;white-space:pre;">2,200</div><div style="position:absolute;left:1242px;top:557px;width:52.4px;height:14px;line-height:14px;text-align:right;font:11px 'Liberation Sans', sans-serif;color:#000;white-space:pre;">3,000</div><div style="position:absolute;left:342px;top:571px;height:14px;line-height:14px;font:11px 'Liberation Sans', sans-serif;color:#000;white-space:pre;">Capacity</div><div style="position:absolute;left:546px;top:571px;width:55.4px;height:14px;line-height:14px;text-align:right;font:11px 'Liberation Sans', sans-serif;color:#000;white-space:pre;">0%</div><div style="position:absolute;left:604px;top:571px;width:55.4px;height:14px;line-height:14px;text-align:right;font:11px 'Liberation Sans', sans-serif;color:#000;white-space:pre;">0%</div><div style="position:absolute;left:662px;top:571px;width:55.4px;height:14px;line-height:14px;text-align:right;font:11px 'Liberation Sans', sans-serif;color:#000;white-space:pre;">98%</div><div style="position:absolute;left:720px;top:571px;width:55.4px;height:14px;line-height:14px;text-align:right;font:11px 'Liberation Sans', sans-serif;color:#000;white-space:pre;">34%</div><div style="position:absolute;left:778px;top:571px;width:55.4px;height:14px;line-height:14px;text-align:right;font:11px 'Liberation Sans', sans-serif;color:#000;white-space:pre;">0%</div><div style="position:absolute;left:836px;top:571px;width:55.4px;height:14px;line-height:14px;text-align:right;font:11px 'Liberation Sans', sans-serif;color:#000;white-space:pre;">0%</div><div style="position:absolute;left:894px;top:571px;width:55.4px;height:14px;line-height:14px;text-align:right;font:11px 'Liberation Sans', sans-serif;color:#000;white-space:pre;">30%</div><div style="position:absolute;left:952px;top:571px;width:55.4px;height:14px;line-height:14px;text-align:right;font:11px 'Liberation Sans', sans-serif;color:#000;white-space:pre;">31%</div><div style="position:absolute;left:1010px;top:571px;width:55.4px;height:14px;line-height:14px;text-align:right;font:11px 'Liberation Sans', sans-serif;color:#000;white-space:pre;">25%</div><div style="position:absolute;left:1068px;top:571px;width:55.4px;height:14px;line-height:14px;text-align:right;font:11px 'Liberation Sans', sans-serif;color:#000;white-space:pre;">79%</div><div style="position:absolute;left:1126px;top:571px;width:55.4px;height:14px;line-height:14px;text-align:right;font:11px 'Liberation Sans', sans-serif;color:#000;white-space:pre;">22%</div><div style="position:absolute;left:1184px;top:571px;width:55.4px;height:14px;line-height:14px;text-align:right;font:11px 'Liberation Sans', sans-serif;color:#000;white-space:pre;">0%</div><div style="position:absolute;left:1242px;top:571px;width:55.4px;height:14px;line-height:14px;text-align:right;font:11px 'Liberation Sans', sans-serif;color:#000;white-space:pre;">30%</div><div style="position:absolute;left:1300px;top:571px;width:55.4px;height:14px;line-height:14px;text-align:right;font:11px 'Liberation Sans', sans-serif;color:#000;white-space:pre;">0%</div><div style="position:absolute;left:1358px;top:571px;width:55.4px;height:14px;line-height:14px;text-align:right;font:11px 'Liberation Sans', sans-serif;color:#000;white-space:pre;">0%</div><div style="position:absolute;left:1416px;top:571px;width:55.4px;height:14px;line-height:14px;text-align:right;font:11px 'Liberation Sans', sans-serif;color:#000;white-space:pre;">0%</div><div style="position:absolute;left:1474px;top:571px;width:55.4px;height:14px;line-height:14px;text-align:right;font:11px 'Liberation Sans', sans-serif;color:#000;white-space:pre;">0%</div><div style="position:absolute;left:1532px;top:571px;width:55.4px;height:14px;line-height:14px;text-align:right;font:11px 'Liberation Sans', sans-serif;color:#000;white-space:pre;">0%</div><div style="position:absolute;left:1590px;top:571px;width:55.4px;height:14px;line-height:14px;text-align:right;font:11px 'Liberation Sans', sans-serif;color:#000;white-space:pre;">0%</div><div style="position:absolute;left:1648px;top:571px;width:55.4px;height:14px;line-height:14px;text-align:right;font:11px 'Liberation Sans', sans-serif;color:#000;white-space:pre;">0%</div><div style="position:absolute;left:1706px;top:571px;width:55.4px;height:14px;line-height:14px;text-align:right;font:11px 'Liberation Sans', sans-serif;color:#000;white-space:pre;">0%</div><div style="position:absolute;left:1764px;top:571px;width:55.4px;height:14px;line-height:14px;text-align:right;font:11px 'Liberation Sans', sans-serif;color:#000;white-space:pre;">0%</div><div style="position:absolute;left:1822px;top:571px;width:55.4px;height:14px;line-height:14px;text-align:right;font:11px 'Liberation Sans', sans-serif;color:#000;white-space:pre;">0%</div><div style="position:absolute;left:342px;top:585px;height:14px;line-height:14px;font:11px 'Liberation Sans', sans-serif;color:#000;white-space:pre;">ATP</div><div style="position:absolute;left:546px;top:585px;width:52.4px;height:14px;line-height:14px;text-align:right;font:11px 'Liberation Sans', sans-serif;color:#000;white-space:pre;">961</div><div style="position:absolute;left:720px;top:585px;width:52.4px;height:14px;line-height:14px;text-align:right;font:11px 'Liberation Sans', sans-serif;color:#000;white-space:pre;">130</div><div style="position:absolute;left:778px;top:585px;width:52.4px;height:14px;line-height:14px;text-align:right;font:11px 'Liberation Sans', sans-serif;color:#000;white-space:pre;">130</div><div style="position:absolute;left:952px;top:585px;width:52.4px;height:14px;line-height:14px;text-align:right;font:11px 'Liberation Sans', sans-serif;color:#000;white-space:pre;">138</div><div style="position:absolute;left:1126px;top:585px;width:52.4px;height:14px;line-height:14px;text-align:right;font:11px 'Liberation Sans', sans-serif;color:#000;white-space:pre;">199</div><div style="position:absolute;left:1242px;top:585px;width:52.4px;height:14px;line-height:14px;text-align:right;font:11px 'Liberation Sans', sans-serif;color:#000;white-space:pre;">48</div><div style="position:absolute;left:1300px;top:585px;width:52.4px;height:14px;line-height:14px;text-align:right;font:11px 'Liberation Sans', sans-serif;color:#000;white-space:pre;">48</div><div style="position:absolute;left:1358px;top:585px;width:52.4px;height:14px;line-height:14px;text-align:right;font:11px 'Liberation Sans', sans-serif;color:#000;white-space:pre;">48</div><div style="position:absolute;left:1416px;top:585px;width:52.4px;height:14px;line-height:14px;text-align:right;font:11px 'Liberation Sans', sans-serif;color:#000;white-space:pre;">48</div><div style="position:absolute;left:1474px;top:585px;width:52.4px;height:14px;line-height:14px;text-align:right;font:11px 'Liberation Sans', sans-serif;color:#000;white-space:pre;">48</div><div style="position:absolute;left:1532px;top:585px;width:52.4px;height:14px;line-height:14px;text-align:right;font:11px 'Liberation Sans', sans-serif;color:#000;white-space:pre;">48</div><div style="position:absolute;left:1590px;top:585px;width:52.4px;height:14px;line-height:14px;text-align:right;font:11px 'Liberation Sans', sans-serif;color:#000;white-space:pre;">48</div><div style="position:absolute;left:1648px;top:585px;width:52.4px;height:14px;line-height:14px;text-align:right;font:11px 'Liberation Sans', sans-serif;color:#000;white-space:pre;">48</div><div style="position:absolute;left:1706px;top:585px;width:52.4px;height:14px;line-height:14px;text-align:right;font:11px 'Liberation Sans', sans-serif;color:#000;white-space:pre;">48</div><div style="position:absolute;left:1764px;top:585px;width:52.4px;height:14px;line-height:14px;text-align:right;font:11px 'Liberation Sans', sans-serif;color:#000;white-space:pre;">48</div><div style="position:absolute;left:1822px;top:585px;width:52.4px;height:14px;line-height:14px;text-align:right;font:11px 'Liberation Sans', sans-serif;color:#000;white-space:pre;">48</div><div style="position:absolute;left:31px;top:556px;width:77px;height:14px;line-height:14px;text-align:center;font:11px 'Liberation Sans', sans-serif;color:#000;">Product 4</div><div style="position:absolute;left:108px;top:556px;width:77px;height:14px;line-height:14px;text-align:center;font:11px 'Liberation Sans', sans-serif;color:#000;">Machine 4</div><div style="position:absolute;left:185px;top:556px;width:71.4px;height:14px;line-height:14px;text-align:right;font:11px 'Liberation Sans', sans-serif;color:#000;white-space:pre;">2,034</div><div style="position:absolute;left:262px;top:556px;width:71.4px;height:14px;line-height:14px;text-align:right;font:11px 'Liberation Sans', sans-serif;color:#000;white-space:pre;">10,168</div><div style="position:absolute;left:478px;top:543px;width:62.4px;height:14px;line-height:14px;text-align:right;font:11px 'Liberation Sans', sans-serif;font-weight:bold;color:#000;white-space:pre;">4,000</div><div style="position:absolute;left:342px;top:600px;height:14px;line-height:14px;font:11px 'Liberation Sans', sans-serif;color:#000;white-space:pre;">Customer Orders</div><div style="position:absolute;left:546px;top:600px;width:39.8px;height:14px;line-height:14px;text-align:right;font:11px 'Liberation Sans', sans-serif;color:#000;white-space:pre;">-</div><div style="position:absolute;left:604px;top:600px;width:52.4px;height:14px;line-height:14px;text-align:right;font:11px 'Liberation Sans', sans-serif;color:#000;white-space:pre;">5,931</div><div style="position:absolute;left:662px;top:600px;width:52.4px;height:14px;line-height:14px;text-align:right;font:11px 'Liberation Sans', sans-serif;color:#000;white-space:pre;">3,165</div><div style="position:absolute;left:720px;top:600px;width:52.4px;height:14px;line-height:14px;text-align:right;font:11px 'Liberation Sans', sans-serif;color:#000;white-space:pre;">10,114</div><div style="position:absolute;left:778px;top:600px;width:52.4px;height:14px;line-height:14px;text-align:right;font:11px 'Liberation Sans', sans-serif;color:#000;white-space:pre;">3,781</div><div style="position:absolute;left:836px;top:600px;width:39.8px;height:14px;line-height:14px;text-align:right;font:11px 'Liberation Sans', sans-serif;color:#000;white-space:pre;">-</div><div style="position:absolute;left:894px;top:600px;width:52.4px;height:14px;line-height:14px;text-align:right;font:11px 'Liberation Sans', sans-serif;color:#000;white-space:pre;">3,640</div><div style="position:absolute;left:952px;top:600px;width:52.4px;height:14px;line-height:14px;text-align:right;font:11px 'Liberation Sans', sans-serif;color:#000;white-space:pre;">5,715</div><div style="position:absolute;left:1010px;top:600px;width:39.8px;height:14px;line-height:14px;text-align:right;font:11px 'Liberation Sans', sans-serif;color:#000;white-space:pre;">-</div><div style="position:absolute;left:1068px;top:600px;width:52.4px;height:14px;line-height:14px;text-align:right;font:11px 'Liberation Sans', sans-serif;color:#000;white-space:pre;">12,532</div><div style="position:absolute;left:1126px;top:600px;width:52.4px;height:14px;line-height:14px;text-align:right;font:11px 'Liberation Sans', sans-serif;color:#000;white-space:pre;">2,962</div><div style="position:absolute;left:1184px;top:600px;width:39.8px;height:14px;line-height:14px;text-align:right;font:11px 'Liberation Sans', sans-serif;color:#000;white-space:pre;">-</div><div style="position:absolute;left:1242px;top:600px;width:52.4px;height:14px;line-height:14px;text-align:right;font:11px 'Liberation Sans', sans-serif;color:#000;white-space:pre;">5,478</div><div style="position:absolute;left:1300px;top:600px;width:39.8px;height:14px;line-height:14px;text-align:right;font:11px 'Liberation Sans', sans-serif;color:#000;white-space:pre;">-</div><div style="position:absolute;left:1358px;top:600px;width:39.8px;height:14px;line-height:14px;text-align:right;font:11px 'Liberation Sans', sans-serif;color:#000;white-space:pre;">-</div><div style="position:absolute;left:1416px;top:600px;width:39.8px;height:14px;line-height:14px;text-align:right;font:11px 'Liberation Sans', sans-serif;color:#000;white-space:pre;">-</div><div style="position:absolute;left:1474px;top:600px;width:39.8px;height:14px;line-height:14px;text-align:right;font:11px 'Liberation Sans', sans-serif;color:#000;white-space:pre;">-</div><div style="position:absolute;left:1532px;top:600px;width:39.8px;height:14px;line-height:14px;text-align:right;font:11px 'Liberation Sans', sans-serif;color:#000;white-space:pre;">-</div><div style="position:absolute;left:1590px;top:600px;width:39.8px;height:14px;line-height:14px;text-align:right;font:11px 'Liberation Sans', sans-serif;color:#000;white-space:pre;">-</div><div style="position:absolute;left:1648px;top:600px;width:39.8px;height:14px;line-height:14px;text-align:right;font:11px 'Liberation Sans', sans-serif;color:#000;white-space:pre;">-</div><div style="position:absolute;left:1706px;top:600px;width:39.8px;height:14px;line-height:14px;text-align:right;font:11px 'Liberation Sans', sans-serif;color:#000;white-space:pre;">-</div><div style="position:absolute;left:1764px;top:600px;width:39.8px;height:14px;line-height:14px;text-align:right;font:11px 'Liberation Sans', sans-serif;color:#000;white-space:pre;">-</div><div style="position:absolute;left:1822px;top:600px;width:39.8px;height:14px;line-height:14px;text-align:right;font:11px 'Liberation Sans', sans-serif;color:#000;white-space:pre;">-</div><div style="position:absolute;left:342px;top:614px;height:14px;line-height:14px;font:11px 'Liberation Sans', sans-serif;color:#000;white-space:pre;">Projected Inventory</div><div style="position:absolute;left:546px;top:614px;width:52.4px;height:14px;line-height:14px;text-align:right;font:11px 'Liberation Sans', sans-serif;color:#000;white-space:pre;">8,000</div><div style="position:absolute;left:604px;top:614px;width:52.4px;height:14px;line-height:14px;text-align:right;font:11px 'Liberation Sans', sans-serif;color:#000;white-space:pre;">2,069</div><div style="position:absolute;left:662px;top:614px;width:52.4px;height:14px;line-height:14px;text-align:right;font:11px 'Liberation Sans', sans-serif;color:#000;white-space:pre;">3,404</div><div style="position:absolute;left:720px;top:614px;width:52.4px;height:14px;line-height:14px;text-align:right;font:11px 'Liberation Sans', sans-serif;color:#000;white-space:pre;">90</div><div style="position:absolute;left:778px;top:614px;width:52.4px;height:14px;line-height:14px;text-align:right;font:11px 'Liberation Sans', sans-serif;color:#000;white-space:pre;">309</div><div style="position:absolute;left:836px;top:614px;width:52.4px;height:14px;line-height:14px;text-align:right;font:11px 'Liberation Sans', sans-serif;color:#000;white-space:pre;">309</div><div style="position:absolute;left:894px;top:614px;width:52.4px;height:14px;line-height:14px;text-align:right;font:11px 'Liberation Sans', sans-serif;color:#000;white-space:pre;">169</div><div style="position:absolute;left:952px;top:614px;width:52.4px;height:14px;line-height:14px;text-align:right;font:11px 'Liberation Sans', sans-serif;color:#000;white-space:pre;">54</div><div style="position:absolute;left:1010px;top:614px;width:52.4px;height:14px;line-height:14px;text-align:right;font:11px 'Liberation Sans', sans-serif;color:#000;white-space:pre;">7,154</div><div style="position:absolute;left:1068px;top:614px;width:52.4px;height:14px;line-height:14px;text-align:right;font:11px 'Liberation Sans', sans-serif;color:#000;white-space:pre;">122</div><div style="position:absolute;left:1126px;top:614px;width:52.4px;height:14px;line-height:14px;text-align:right;font:11px 'Liberation Sans', sans-serif;color:#000;white-space:pre;">160</div><div style="position:absolute;left:1184px;top:614px;width:52.4px;height:14px;line-height:14px;text-align:right;font:11px 'Liberation Sans', sans-serif;color:#000;white-space:pre;">160</div><div style="position:absolute;left:1242px;top:614px;width:52.4px;height:14px;line-height:14px;text-align:right;font:11px 'Liberation Sans', sans-serif;color:#000;white-space:pre;">182</div><div style="position:absolute;left:1300px;top:614px;width:52.4px;height:14px;line-height:14px;text-align:right;font:11px 'Liberation Sans', sans-serif;color:#000;white-space:pre;">182</div><div style="position:absolute;left:1358px;top:614px;width:52.4px;height:14px;line-height:14px;text-align:right;font:11px 'Liberation Sans', sans-serif;color:#000;white-space:pre;">182</div><div style="position:absolute;left:1416px;top:614px;width:52.4px;height:14px;line-height:14px;text-align:right;font:11px 'Liberation Sans', sans-serif;color:#000;white-space:pre;">182</div><div style="position:absolute;left:1474px;top:614px;width:52.4px;height:14px;line-height:14px;text-align:right;font:11px 'Liberation Sans', sans-serif;color:#000;white-space:pre;">182</div><div style="position:absolute;left:1532px;top:614px;width:52.4px;height:14px;line-height:14px;text-align:right;font:11px 'Liberation Sans', sans-serif;color:#000;white-space:pre;">182</div><div style="position:absolute;left:1590px;top:614px;width:52.4px;height:14px;line-height:14px;text-align:right;font:11px 'Liberation Sans', sans-serif;color:#000;white-space:pre;">182</div><div style="position:absolute;left:1648px;top:614px;width:52.4px;height:14px;line-height:14px;text-align:right;font:11px 'Liberation Sans', sans-serif;color:#000;white-space:pre;">182</div><div style="position:absolute;left:1706px;top:614px;width:52.4px;height:14px;line-height:14px;text-align:right;font:11px 'Liberation Sans', sans-serif;color:#000;white-space:pre;">182</div><div style="position:absolute;left:1764px;top:614px;width:52.4px;height:14px;line-height:14px;text-align:right;font:11px 'Liberation Sans', sans-serif;color:#000;white-space:pre;">182</div><div style="position:absolute;left:1822px;top:614px;width:52.4px;height:14px;line-height:14px;text-align:right;font:11px 'Liberation Sans', sans-serif;color:#000;white-space:pre;">182</div><div style="position:absolute;left:342px;top:628px;height:14px;line-height:14px;font:11px 'Liberation Sans', sans-serif;color:#000;white-space:pre;">MPS</div><div style="position:absolute;left:662px;top:628px;width:52.4px;height:14px;line-height:14px;text-align:right;font:11px 'Liberation Sans', sans-serif;color:#000;white-space:pre;">4,500</div><div style="position:absolute;left:720px;top:628px;width:52.4px;height:14px;line-height:14px;text-align:right;font:11px 'Liberation Sans', sans-serif;color:#000;white-space:pre;">6,800</div><div style="position:absolute;left:778px;top:628px;width:52.4px;height:14px;line-height:14px;text-align:right;font:11px 'Liberation Sans', sans-serif;color:#000;white-space:pre;">4,000</div><div style="position:absolute;left:894px;top:628px;width:52.4px;height:14px;line-height:14px;text-align:right;font:11px 'Liberation Sans', sans-serif;color:#000;white-space:pre;">3,500</div><div style="position:absolute;left:952px;top:628px;width:52.4px;height:14px;line-height:14px;text-align:right;font:11px 'Liberation Sans', sans-serif;color:#000;white-space:pre;">5,600</div><div style="position:absolute;left:1010px;top:628px;width:52.4px;height:14px;line-height:14px;text-align:right;font:11px 'Liberation Sans', sans-serif;color:#000;white-space:pre;">7,100</div><div style="position:absolute;left:1068px;top:628px;width:52.4px;height:14px;line-height:14px;text-align:right;font:11px 'Liberation Sans', sans-serif;color:#000;white-space:pre;">5,500</div><div style="position:absolute;left:1126px;top:628px;width:52.4px;height:14px;line-height:14px;text-align:right;font:11px 'Liberation Sans', sans-serif;color:#000;white-space:pre;">3,000</div><div style="position:absolute;left:1242px;top:628px;width:52.4px;height:14px;line-height:14px;text-align:right;font:11px 'Liberation Sans', sans-serif;color:#000;white-space:pre;">5,500</div><div style="position:absolute;left:342px;top:642px;height:14px;line-height:14px;font:11px 'Liberation Sans', sans-serif;color:#000;white-space:pre;">Capacity</div><div style="position:absolute;left:546px;top:642px;width:55.4px;height:14px;line-height:14px;text-align:right;font:11px 'Liberation Sans', sans-serif;color:#000;white-space:pre;">0%</div><div style="position:absolute;left:604px;top:642px;width:55.4px;height:14px;line-height:14px;text-align:right;font:11px 'Liberation Sans', sans-serif;color:#000;white-space:pre;">0%</div><div style="position:absolute;left:662px;top:642px;width:55.4px;height:14px;line-height:14px;text-align:right;font:11px 'Liberation Sans', sans-serif;color:#000;white-space:pre;">63%</div><div style="position:absolute;left:720px;top:642px;width:55.4px;height:14px;line-height:14px;text-align:right;font:11px 'Liberation Sans', sans-serif;color:#000;white-space:pre;">95%</div><div style="position:absolute;left:778px;top:642px;width:55.4px;height:14px;line-height:14px;text-align:right;font:11px 'Liberation Sans', sans-serif;color:#000;white-space:pre;">56%</div><div style="position:absolute;left:836px;top:642px;width:55.4px;height:14px;line-height:14px;text-align:right;font:11px 'Liberation Sans', sans-serif;color:#000;white-space:pre;">0%</div><div style="position:absolute;left:894px;top:642px;width:55.4px;height:14px;line-height:14px;text-align:right;font:11px 'Liberation Sans', sans-serif;color:#000;white-space:pre;">49%</div><div style="position:absolute;left:952px;top:642px;width:55.4px;height:14px;line-height:14px;text-align:right;font:11px 'Liberation Sans', sans-serif;color:#000;white-space:pre;">79%</div><div style="position:absolute;left:1010px;top:642px;width:55.4px;height:14px;line-height:14px;text-align:right;font:11px 'Liberation Sans', sans-serif;color:#000;white-space:pre;">100%</div><div style="position:absolute;left:1068px;top:642px;width:55.4px;height:14px;line-height:14px;text-align:right;font:11px 'Liberation Sans', sans-serif;color:#000;white-space:pre;">77%</div><div style="position:absolute;left:1126px;top:642px;width:55.4px;height:14px;line-height:14px;text-align:right;font:11px 'Liberation Sans', sans-serif;color:#000;white-space:pre;">42%</div><div style="position:absolute;left:1184px;top:642px;width:55.4px;height:14px;line-height:14px;text-align:right;font:11px 'Liberation Sans', sans-serif;color:#000;white-space:pre;">0%</div><div style="position:absolute;left:1242px;top:642px;width:55.4px;height:14px;line-height:14px;text-align:right;font:11px 'Liberation Sans', sans-serif;color:#000;white-space:pre;">77%</div><div style="position:absolute;left:1300px;top:642px;width:55.4px;height:14px;line-height:14px;text-align:right;font:11px 'Liberation Sans', sans-serif;color:#000;white-space:pre;">0%</div><div style="position:absolute;left:1358px;top:642px;width:55.4px;height:14px;line-height:14px;text-align:right;font:11px 'Liberation Sans', sans-serif;color:#000;white-space:pre;">0%</div><div style="position:absolute;left:1416px;top:642px;width:55.4px;height:14px;line-height:14px;text-align:right;font:11px 'Liberation Sans', sans-serif;color:#000;white-space:pre;">0%</div><div style="position:absolute;left:1474px;top:642px;width:55.4px;height:14px;line-height:14px;text-align:right;font:11px 'Liberation Sans', sans-serif;color:#000;white-space:pre;">0%</div><div style="position:absolute;left:1532px;top:642px;width:55.4px;height:14px;line-height:14px;text-align:right;font:11px 'Liberation Sans', sans-serif;color:#000;white-space:pre;">0%</div><div style="position:absolute;left:1590px;top:642px;width:55.4px;height:14px;line-height:14px;text-align:right;font:11px 'Liberation Sans', sans-serif;color:#000;white-space:pre;">0%</div><div style="position:absolute;left:1648px;top:642px;width:55.4px;height:14px;line-height:14px;text-align:right;font:11px 'Liberation Sans', sans-serif;color:#000;white-space:pre;">0%</div><div style="position:absolute;left:1706px;top:642px;width:55.4px;height:14px;line-height:14px;text-align:right;font:11px 'Liberation Sans', sans-serif;color:#000;white-space:pre;">0%</div><div style="position:absolute;left:1764px;top:642px;width:55.4px;height:14px;line-height:14px;text-align:right;font:11px 'Liberation Sans', sans-serif;color:#000;white-space:pre;">0%</div><div style="position:absolute;left:1822px;top:642px;width:55.4px;height:14px;line-height:14px;text-align:right;font:11px 'Liberation Sans', sans-serif;color:#000;white-space:pre;">0%</div><div style="position:absolute;left:342px;top:656px;height:14px;line-height:14px;font:11px 'Liberation Sans', sans-serif;color:#000;white-space:pre;">ATP</div><div style="position:absolute;left:546px;top:656px;width:52.4px;height:14px;line-height:14px;text-align:right;font:11px 'Liberation Sans', sans-serif;color:#000;white-space:pre;">2,069</div><div style="position:absolute;left:778px;top:656px;width:52.4px;height:14px;line-height:14px;text-align:right;font:11px 'Liberation Sans', sans-serif;color:#000;white-space:pre;">309</div><div style="position:absolute;left:952px;top:656px;width:52.4px;height:14px;line-height:14px;text-align:right;font:11px 'Liberation Sans', sans-serif;color:#000;white-space:pre;">54</div><div style="position:absolute;left:1126px;top:656px;width:52.4px;height:14px;line-height:14px;text-align:right;font:11px 'Liberation Sans', sans-serif;color:#000;white-space:pre;">160</div><div style="position:absolute;left:1242px;top:656px;width:52.4px;height:14px;line-height:14px;text-align:right;font:11px 'Liberation Sans', sans-serif;color:#000;white-space:pre;">182</div><div style="position:absolute;left:1300px;top:656px;width:52.4px;height:14px;line-height:14px;text-align:right;font:11px 'Liberation Sans', sans-serif;color:#000;white-space:pre;">182</div><div style="position:absolute;left:1358px;top:656px;width:52.4px;height:14px;line-height:14px;text-align:right;font:11px 'Liberation Sans', sans-serif;color:#000;white-space:pre;">182</div><div style="position:absolute;left:1416px;top:656px;width:52.4px;height:14px;line-height:14px;text-align:right;font:11px 'Liberation Sans', sans-serif;color:#000;white-space:pre;">182</div><div style="position:absolute;left:1474px;top:656px;width:52.4px;height:14px;line-height:14px;text-align:right;font:11px 'Liberation Sans', sans-serif;color:#000;white-space:pre;">182</div><div style="position:absolute;left:1532px;top:656px;width:52.4px;height:14px;line-height:14px;text-align:right;font:11px 'Liberation Sans', sans-serif;color:#000;white-space:pre;">182</div><div style="position:absolute;left:1590px;top:656px;width:52.4px;height:14px;line-height:14px;text-align:right;font:11px 'Liberation Sans', sans-serif;color:#000;white-space:pre;">182</div><div style="position:absolute;left:1648px;top:656px;width:52.4px;height:14px;line-height:14px;text-align:right;font:11px 'Liberation Sans', sans-serif;color:#000;white-space:pre;">182</div><div style="position:absolute;left:1706px;top:656px;width:52.4px;height:14px;line-height:14px;text-align:right;font:11px 'Liberation Sans', sans-serif;color:#000;white-space:pre;">182</div><div style="position:absolute;left:1764px;top:656px;width:52.4px;height:14px;line-height:14px;text-align:right;font:11px 'Liberation Sans', sans-serif;color:#000;white-space:pre;">182</div><div style="position:absolute;left:1822px;top:656px;width:52.4px;height:14px;line-height:14px;text-align:right;font:11px 'Liberation Sans', sans-serif;color:#000;white-space:pre;">182</div><div style="position:absolute;left:31px;top:627px;width:77px;height:14px;line-height:14px;text-align:center;font:11px 'Liberation Sans', sans-serif;color:#000;">Product 5</div><div style="position:absolute;left:108px;top:627px;width:77px;height:14px;line-height:14px;text-align:center;font:11px 'Liberation Sans', sans-serif;color:#000;">Machine 5</div><div style="position:absolute;left:185px;top:627px;width:71.4px;height:14px;line-height:14px;text-align:right;font:11px 'Liberation Sans', sans-serif;color:#000;white-space:pre;">1,426</div><div style="position:absolute;left:262px;top:627px;width:71.4px;height:14px;line-height:14px;text-align:right;font:11px 'Liberation Sans', sans-serif;color:#000;white-space:pre;">7,128</div><div style="position:absolute;left:478px;top:614px;width:62.4px;height:14px;line-height:14px;text-align:right;font:11px 'Liberation Sans', sans-serif;font-weight:bold;color:#000;white-space:pre;">8,000</div><div style="position:absolute;left:342px;top:671px;height:14px;line-height:14px;font:11px 'Liberation Sans', sans-serif;color:#000;white-space:pre;">Customer Orders</div><div style="position:absolute;left:546px;top:671px;width:39.8px;height:14px;line-height:14px;text-align:right;font:11px 'Liberation Sans', sans-serif;color:#000;white-space:pre;">-</div><div style="position:absolute;left:604px;top:671px;width:39.8px;height:14px;line-height:14px;text-align:right;font:11px 'Liberation Sans', sans-serif;color:#000;white-space:pre;">-</div><div style="position:absolute;left:662px;top:671px;width:39.8px;height:14px;line-height:14px;text-align:right;font:11px 'Liberation Sans', sans-serif;color:#000;white-space:pre;">-</div><div style="position:absolute;left:720px;top:671px;width:39.8px;height:14px;line-height:14px;text-align:right;font:11px 'Liberation Sans', sans-serif;color:#000;white-space:pre;">-</div><div style="position:absolute;left:778px;top:671px;width:39.8px;height:14px;line-height:14px;text-align:right;font:11px 'Liberation Sans', sans-serif;color:#000;white-space:pre;">-</div><div style="position:absolute;left:836px;top:671px;width:39.8px;height:14px;line-height:14px;text-align:right;font:11px 'Liberation Sans', sans-serif;color:#000;white-space:pre;">-</div><div style="position:absolute;left:894px;top:671px;width:39.8px;height:14px;line-height:14px;text-align:right;font:11px 'Liberation Sans', sans-serif;color:#000;white-space:pre;">-</div><div style="position:absolute;left:952px;top:671px;width:39.8px;height:14px;line-height:14px;text-align:right;font:11px 'Liberation Sans', sans-serif;color:#000;white-space:pre;">-</div><div style="position:absolute;left:1010px;top:671px;width:39.8px;height:14px;line-height:14px;text-align:right;font:11px 'Liberation Sans', sans-serif;color:#000;white-space:pre;">-</div><div style="position:absolute;left:1068px;top:671px;width:39.8px;height:14px;line-height:14px;text-align:right;font:11px 'Liberation Sans', sans-serif;color:#000;white-space:pre;">-</div><div style="position:absolute;left:1126px;top:671px;width:39.8px;height:14px;line-height:14px;text-align:right;font:11px 'Liberation Sans', sans-serif;color:#000;white-space:pre;">-</div><div style="position:absolute;left:1184px;top:671px;width:39.8px;height:14px;line-height:14px;text-align:right;font:11px 'Liberation Sans', sans-serif;color:#000;white-space:pre;">-</div><div style="position:absolute;left:1242px;top:671px;width:39.8px;height:14px;line-height:14px;text-align:right;font:11px 'Liberation Sans', sans-serif;color:#000;white-space:pre;">-</div><div style="position:absolute;left:1300px;top:671px;width:39.8px;height:14px;line-height:14px;text-align:right;font:11px 'Liberation Sans', sans-serif;color:#000;white-space:pre;">-</div><div style="position:absolute;left:1358px;top:671px;width:39.8px;height:14px;line-height:14px;text-align:right;font:11px 'Liberation Sans', sans-serif;color:#000;white-space:pre;">-</div><div style="position:absolute;left:1416px;top:671px;width:39.8px;height:14px;line-height:14px;text-align:right;font:11px 'Liberation Sans', sans-serif;color:#000;white-space:pre;">-</div><div style="position:absolute;left:1474px;top:671px;width:39.8px;height:14px;line-height:14px;text-align:right;font:11px 'Liberation Sans', sans-serif;color:#000;white-space:pre;">-</div><div style="position:absolute;left:1532px;top:671px;width:39.8px;height:14px;line-height:14px;text-align:right;font:11px 'Liberation Sans', sans-serif;color:#000;white-space:pre;">-</div><div style="position:absolute;left:1590px;top:671px;width:39.8px;height:14px;line-height:14px;text-align:right;font:11px 'Liberation Sans', sans-serif;color:#000;white-space:pre;">-</div><div style="position:absolute;left:1648px;top:671px;width:39.8px;height:14px;line-height:14px;text-align:right;font:11px 'Liberation Sans', sans-serif;color:#000;white-space:pre;">-</div><div style="position:absolute;left:1706px;top:671px;width:39.8px;height:14px;line-height:14px;text-align:right;font:11px 'Liberation Sans', sans-serif;color:#000;white-space:pre;">-</div><div style="position:absolute;left:1764px;top:671px;width:39.8px;height:14px;line-height:14px;text-align:right;font:11px 'Liberation Sans', sans-serif;color:#000;white-space:pre;">-</div><div style="position:absolute;left:1822px;top:671px;width:39.8px;height:14px;line-height:14px;text-align:right;font:11px 'Liberation Sans', sans-serif;color:#000;white-space:pre;">-</div><div style="position:absolute;left:342px;top:685px;height:14px;line-height:14px;font:11px 'Liberation Sans', sans-serif;color:#000;white-space:pre;">Projected Inventory</div><div style="position:absolute;left:546px;top:685px;width:39.8px;height:14px;line-height:14px;text-align:right;font:11px 'Liberation Sans', sans-serif;color:#000;white-space:pre;">-</div><div style="position:absolute;left:604px;top:685px;width:39.8px;height:14px;line-height:14px;text-align:right;font:11px 'Liberation Sans', sans-serif;color:#000;white-space:pre;">-</div><div style="position:absolute;left:662px;top:685px;width:39.8px;height:14px;line-height:14px;text-align:right;font:11px 'Liberation Sans', sans-serif;color:#000;white-space:pre;">-</div><div style="position:absolute;left:720px;top:685px;width:39.8px;height:14px;line-height:14px;text-align:right;font:11px 'Liberation Sans', sans-serif;color:#000;white-space:pre;">-</div><div style="position:absolute;left:778px;top:685px;width:39.8px;height:14px;line-height:14px;text-align:right;font:11px 'Liberation Sans', sans-serif;color:#000;white-space:pre;">-</div><div style="position:absolute;left:836px;top:685px;width:39.8px;height:14px;line-height:14px;text-align:right;font:11px 'Liberation Sans', sans-serif;color:#000;white-space:pre;">-</div><div style="position:absolute;left:894px;top:685px;width:39.8px;height:14px;line-height:14px;text-align:right;font:11px 'Liberation Sans', sans-serif;color:#000;white-space:pre;">-</div><div style="position:absolute;left:952px;top:685px;width:39.8px;height:14px;line-height:14px;text-align:right;font:11px 'Liberation Sans', sans-serif;color:#000;white-space:pre;">-</div><div style="position:absolute;left:1010px;top:685px;width:39.8px;height:14px;line-height:14px;text-align:right;font:11px 'Liberation Sans', sans-serif;color:#000;white-space:pre;">-</div><div style="position:absolute;left:1068px;top:685px;width:39.8px;height:14px;line-height:14px;text-align:right;font:11px 'Liberation Sans', sans-serif;color:#000;white-space:pre;">-</div><div style="position:absolute;left:1126px;top:685px;width:39.8px;height:14px;line-height:14px;text-align:right;font:11px 'Liberation Sans', sans-serif;color:#000;white-space:pre;">-</div><div style="position:absolute;left:1184px;top:685px;width:39.8px;height:14px;line-height:14px;text-align:right;font:11px 'Liberation Sans', sans-serif;color:#000;white-space:pre;">-</div><div style="position:absolute;left:1242px;top:685px;width:39.8px;height:14px;line-height:14px;text-align:right;font:11px 'Liberation Sans', sans-serif;color:#000;white-space:pre;">-</div><div style="position:absolute;left:1300px;top:685px;width:39.8px;height:14px;line-height:14px;text-align:right;font:11px 'Liberation Sans', sans-serif;color:#000;white-space:pre;">-</div><div style="position:absolute;left:1358px;top:685px;width:39.8px;height:14px;line-height:14px;text-align:right;font:11px 'Liberation Sans', sans-serif;color:#000;white-space:pre;">-</div><div style="position:absolute;left:1416px;top:685px;width:39.8px;height:14px;line-height:14px;text-align:right;font:11px 'Liberation Sans', sans-serif;color:#000;white-space:pre;">-</div><div style="position:absolute;left:1474px;top:685px;width:39.8px;height:14px;line-height:14px;text-align:right;font:11px 'Liberation Sans', sans-serif;color:#000;white-space:pre;">-</div><div style="position:absolute;left:1532px;top:685px;width:39.8px;height:14px;line-height:14px;text-align:right;font:11px 'Liberation Sans', sans-serif;color:#000;white-space:pre;">-</div><div style="position:absolute;left:1590px;top:685px;width:39.8px;height:14px;line-height:14px;text-align:right;font:11px 'Liberation Sans', sans-serif;color:#000;white-space:pre;">-</div><div style="position:absolute;left:1648px;top:685px;width:39.8px;height:14px;line-height:14px;text-align:right;font:11px 'Liberation Sans', sans-serif;color:#000;white-space:pre;">-</div><div style="position:absolute;left:1706px;top:685px;width:39.8px;height:14px;line-height:14px;text-align:right;font:11px 'Liberation Sans', sans-serif;color:#000;white-space:pre;">-</div><div style="position:absolute;left:1764px;top:685px;width:39.8px;height:14px;line-height:14px;text-align:right;font:11px 'Liberation Sans', sans-serif;color:#000;white-space:pre;">-</div><div style="position:absolute;left:1822px;top:685px;width:39.8px;height:14px;line-height:14px;text-align:right;font:11px 'Liberation Sans', sans-serif;color:#000;white-space:pre;">-</div><div style="position:absolute;left:342px;top:699px;height:14px;line-height:14px;font:11px 'Liberation Sans', sans-serif;color:#000;white-space:pre;">MPS</div><div style="position:absolute;left:342px;top:713px;height:14px;line-height:14px;font:11px 'Liberation Sans', sans-serif;color:#000;white-space:pre;">Capacity</div><div style="position:absolute;left:342px;top:727px;height:14px;line-height:14px;font:11px 'Liberation Sans', sans-serif;color:#000;white-space:pre;">ATP</div><div style="position:absolute;left:546px;top:727px;width:39.8px;height:14px;line-height:14px;text-align:right;font:11px 'Liberation Sans', sans-serif;color:#000;white-space:pre;">-</div><div style="position:absolute;left:604px;top:727px;width:39.8px;height:14px;line-height:14px;text-align:right;font:11px 'Liberation Sans', sans-serif;color:#000;white-space:pre;">-</div><div style="position:absolute;left:662px;top:727px;width:39.8px;height:14px;line-height:14px;text-align:right;font:11px 'Liberation Sans', sans-serif;color:#000;white-space:pre;">-</div><div style="position:absolute;left:720px;top:727px;width:39.8px;height:14px;line-height:14px;text-align:right;font:11px 'Liberation Sans', sans-serif;color:#000;white-space:pre;">-</div><div style="position:absolute;left:778px;top:727px;width:39.8px;height:14px;line-height:14px;text-align:right;font:11px 'Liberation Sans', sans-serif;color:#000;white-space:pre;">-</div><div style="position:absolute;left:836px;top:727px;width:39.8px;height:14px;line-height:14px;text-align:right;font:11px 'Liberation Sans', sans-serif;color:#000;white-space:pre;">-</div><div style="position:absolute;left:894px;top:727px;width:39.8px;height:14px;line-height:14px;text-align:right;font:11px 'Liberation Sans', sans-serif;color:#000;white-space:pre;">-</div><div style="position:absolute;left:952px;top:727px;width:39.8px;height:14px;line-height:14px;text-align:right;font:11px 'Liberation Sans', sans-serif;color:#000;white-space:pre;">-</div><div style="position:absolute;left:1010px;top:727px;width:39.8px;height:14px;line-height:14px;text-align:right;font:11px 'Liberation Sans', sans-serif;color:#000;white-space:pre;">-</div><div style="position:absolute;left:1068px;top:727px;width:39.8px;height:14px;line-height:14px;text-align:right;font:11px 'Liberation Sans', sans-serif;color:#000;white-space:pre;">-</div><div style="position:absolute;left:1126px;top:727px;width:39.8px;height:14px;line-height:14px;text-align:right;font:11px 'Liberation Sans', sans-serif;color:#000;white-space:pre;">-</div><div style="position:absolute;left:1184px;top:727px;width:39.8px;height:14px;line-height:14px;text-align:right;font:11px 'Liberation Sans', sans-serif;color:#000;white-space:pre;">-</div><div style="position:absolute;left:1242px;top:727px;width:39.8px;height:14px;line-height:14px;text-align:right;font:11px 'Liberation Sans', sans-serif;color:#000;white-space:pre;">-</div><div style="position:absolute;left:1300px;top:727px;width:39.8px;height:14px;line-height:14px;text-align:right;font:11px 'Liberation Sans', sans-serif;color:#000;white-space:pre;">-</div><div style="position:absolute;left:1358px;top:727px;width:39.8px;height:14px;line-height:14px;text-align:right;font:11px 'Liberation Sans', sans-serif;color:#000;white-space:pre;">-</div><div style="position:absolute;left:1416px;top:727px;width:39.8px;height:14px;line-height:14px;text-align:right;font:11px 'Liberation Sans', sans-serif;color:#000;white-space:pre;">-</div><div style="position:absolute;left:1474px;top:727px;width:39.8px;height:14px;line-height:14px;text-align:right;font:11px 'Liberation Sans', sans-serif;color:#000;white-space:pre;">-</div><div style="position:absolute;left:1532px;top:727px;width:39.8px;height:14px;line-height:14px;text-align:right;font:11px 'Liberation Sans', sans-serif;color:#000;white-space:pre;">-</div><div style="position:absolute;left:1590px;top:727px;width:39.8px;height:14px;line-height:14px;text-align:right;font:11px 'Liberation Sans', sans-serif;color:#000;white-space:pre;">-</div><div style="position:absolute;left:1648px;top:727px;width:39.8px;height:14px;line-height:14px;text-align:right;font:11px 'Liberation Sans', sans-serif;color:#000;white-space:pre;">-</div><div style="position:absolute;left:1706px;top:727px;width:39.8px;height:14px;line-height:14px;text-align:right;font:11px 'Liberation Sans', sans-serif;color:#000;white-space:pre;">-</div><div style="position:absolute;left:1764px;top:727px;width:39.8px;height:14px;line-height:14px;text-align:right;font:11px 'Liberation Sans', sans-serif;color:#000;white-space:pre;">-</div><div style="position:absolute;left:1822px;top:727px;width:39.8px;height:14px;line-height:14px;text-align:right;font:11px 'Liberation Sans', sans-serif;color:#000;white-space:pre;">-</div><div style="position:absolute;left:342px;top:742px;height:14px;line-height:14px;font:11px 'Liberation Sans', sans-serif;color:#000;white-space:pre;">Customer Orders</div><div style="position:absolute;left:546px;top:742px;width:39.8px;height:14px;line-height:14px;text-align:right;font:11px 'Liberation Sans', sans-serif;color:#000;white-space:pre;">-</div><div style="position:absolute;left:604px;top:742px;width:39.8px;height:14px;line-height:14px;text-align:right;font:11px 'Liberation Sans', sans-serif;color:#000;white-space:pre;">-</div><div style="position:absolute;left:662px;top:742px;width:39.8px;height:14px;line-height:14px;text-align:right;font:11px 'Liberation Sans', sans-serif;color:#000;white-space:pre;">-</div><div style="position:absolute;left:720px;top:742px;width:39.8px;height:14px;line-height:14px;text-align:right;font:11px 'Liberation Sans', sans-serif;color:#000;white-space:pre;">-</div><div style="position:absolute;left:778px;top:742px;width:39.8px;height:14px;line-height:14px;text-align:right;font:11px 'Liberation Sans', sans-serif;color:#000;white-space:pre;">-</div><div style="position:absolute;left:836px;top:742px;width:39.8px;height:14px;line-height:14px;text-align:right;font:11px 'Liberation Sans', sans-serif;color:#000;white-space:pre;">-</div><div style="position:absolute;left:894px;top:742px;width:39.8px;height:14px;line-height:14px;text-align:right;font:11px 'Liberation Sans', sans-serif;color:#000;white-space:pre;">-</div><div style="position:absolute;left:952px;top:742px;width:39.8px;height:14px;line-height:14px;text-align:right;font:11px 'Liberation Sans', sans-serif;color:#000;white-space:pre;">-</div><div style="position:absolute;left:1010px;top:742px;width:39.8px;height:14px;line-height:14px;text-align:right;font:11px 'Liberation Sans', sans-serif;color:#000;white-space:pre;">-</div><div style="position:absolute;left:1068px;top:742px;width:39.8px;height:14px;line-height:14px;text-align:right;font:11px 'Liberation Sans', sans-serif;color:#000;white-space:pre;">-</div><div style="position:absolute;left:1126px;top:742px;width:39.8px;height:14px;line-height:14px;text-align:right;font:11px 'Liberation Sans', sans-serif;color:#000;white-space:pre;">-</div><div style="position:absolute;left:1184px;top:742px;width:39.8px;height:14px;line-height:14px;text-align:right;font:11px 'Liberation Sans', sans-serif;color:#000;white-space:pre;">-</div><div style="position:absolute;left:1242px;top:742px;width:39.8px;height:14px;line-height:14px;text-align:right;font:11px 'Liberation Sans', sans-serif;color:#000;white-space:pre;">-</div><div style="position:absolute;left:1300px;top:742px;width:39.8px;height:14px;line-height:14px;text-align:right;font:11px 'Liberation Sans', sans-serif;color:#000;white-space:pre;">-</div><div style="position:absolute;left:1358px;top:742px;width:39.8px;height:14px;line-height:14px;text-align:right;font:11px 'Liberation Sans', sans-serif;color:#000;white-space:pre;">-</div><div style="position:absolute;left:1416px;top:742px;width:39.8px;height:14px;line-height:14px;text-align:right;font:11px 'Liberation Sans', sans-serif;color:#000;white-space:pre;">-</div><div style="position:absolute;left:1474px;top:742px;width:39.8px;height:14px;line-height:14px;text-align:right;font:11px 'Liberation Sans', sans-serif;color:#000;white-space:pre;">-</div><div style="position:absolute;left:1532px;top:742px;width:39.8px;height:14px;line-height:14px;text-align:right;font:11px 'Liberation Sans', sans-serif;color:#000;white-space:pre;">-</div><div style="position:absolute;left:1590px;top:742px;width:39.8px;height:14px;line-height:14px;text-align:right;font:11px 'Liberation Sans', sans-serif;color:#000;white-space:pre;">-</div><div style="position:absolute;left:1648px;top:742px;width:39.8px;height:14px;line-height:14px;text-align:right;font:11px 'Liberation Sans', sans-serif;color:#000;white-space:pre;">-</div><div style="position:absolute;left:1706px;top:742px;width:39.8px;height:14px;line-height:14px;text-align:right;font:11px 'Liberation Sans', sans-serif;color:#000;white-space:pre;">-</div><div style="position:absolute;left:1764px;top:742px;width:39.8px;height:14px;line-height:14px;text-align:right;font:11px 'Liberation Sans', sans-serif;color:#000;white-space:pre;">-</div><div style="position:absolute;left:1822px;top:742px;width:39.8px;height:14px;line-height:14px;text-align:right;font:11px 'Liberation Sans', sans-serif;color:#000;white-space:pre;">-</div><div style="position:absolute;left:342px;top:756px;height:14px;line-height:14px;font:11px 'Liberation Sans', sans-serif;color:#000;white-space:pre;">Projected Inventory</div><div style="position:absolute;left:546px;top:756px;width:39.8px;height:14px;line-height:14px;text-align:right;font:11px 'Liberation Sans', sans-serif;color:#000;white-space:pre;">-</div><div style="position:absolute;left:604px;top:756px;width:39.8px;height:14px;line-height:14px;text-align:right;font:11px 'Liberation Sans', sans-serif;color:#000;white-space:pre;">-</div><div style="position:absolute;left:662px;top:756px;width:39.8px;height:14px;line-height:14px;text-align:right;font:11px 'Liberation Sans', sans-serif;color:#000;white-space:pre;">-</div><div style="position:absolute;left:720px;top:756px;width:39.8px;height:14px;line-height:14px;text-align:right;font:11px 'Liberation Sans', sans-serif;color:#000;white-space:pre;">-</div><div style="position:absolute;left:778px;top:756px;width:39.8px;height:14px;line-height:14px;text-align:right;font:11px 'Liberation Sans', sans-serif;color:#000;white-space:pre;">-</div><div style="position:absolute;left:836px;top:756px;width:39.8px;height:14px;line-height:14px;text-align:right;font:11px 'Liberation Sans', sans-serif;color:#000;white-space:pre;">-</div><div style="position:absolute;left:894px;top:756px;width:39.8px;height:14px;line-height:14px;text-align:right;font:11px 'Liberation Sans', sans-serif;color:#000;white-space:pre;">-</div><div style="position:absolute;left:952px;top:756px;width:39.8px;height:14px;line-height:14px;text-align:right;font:11px 'Liberation Sans', sans-serif;color:#000;white-space:pre;">-</div><div style="position:absolute;left:1010px;top:756px;width:39.8px;height:14px;line-height:14px;text-align:right;font:11px 'Liberation Sans', sans-serif;color:#000;white-space:pre;">-</div><div style="position:absolute;left:1068px;top:756px;width:39.8px;height:14px;line-height:14px;text-align:right;font:11px 'Liberation Sans', sans-serif;color:#000;white-space:pre;">-</div><div style="position:absolute;left:1126px;top:756px;width:39.8px;height:14px;line-height:14px;text-align:right;font:11px 'Liberation Sans', sans-serif;color:#000;white-space:pre;">-</div><div style="position:absolute;left:1184px;top:756px;width:39.8px;height:14px;line-height:14px;text-align:right;font:11px 'Liberation Sans', sans-serif;color:#000;white-space:pre;">-</div><div style="position:absolute;left:1242px;top:756px;width:39.8px;height:14px;line-height:14px;text-align:right;font:11px 'Liberation Sans', sans-serif;color:#000;white-space:pre;">-</div><div style="position:absolute;left:1300px;top:756px;width:39.8px;height:14px;line-height:14px;text-align:right;font:11px 'Liberation Sans', sans-serif;color:#000;white-space:pre;">-</div><div style="position:absolute;left:1358px;top:756px;width:39.8px;height:14px;line-height:14px;text-align:right;font:11px 'Liberation Sans', sans-serif;color:#000;white-space:pre;">-</div><div style="position:absolute;left:1416px;top:756px;width:39.8px;height:14px;line-height:14px;text-align:right;font:11px 'Liberation Sans', sans-serif;color:#000;white-space:pre;">-</div><div style="position:absolute;left:1474px;top:756px;width:39.8px;height:14px;line-height:14px;text-align:right;font:11px 'Liberation Sans', sans-serif;color:#000;white-space:pre;">-</div><div style="position:absolute;left:1532px;top:756px;width:39.8px;height:14px;line-height:14px;text-align:right;font:11px 'Liberation Sans', sans-serif;color:#000;white-space:pre;">-</div><div style="position:absolute;left:1590px;top:756px;width:39.8px;height:14px;line-height:14px;text-align:right;font:11px 'Liberation Sans', sans-serif;color:#000;white-space:pre;">-</div><div style="position:absolute;left:1648px;top:756px;width:39.8px;height:14px;line-height:14px;text-align:right;font:11px 'Liberation Sans', sans-serif;color:#000;white-space:pre;">-</div><div style="position:absolute;left:1706px;top:756px;width:39.8px;height:14px;line-height:14px;text-align:right;font:11px 'Liberation Sans', sans-serif;color:#000;white-space:pre;">-</div><div style="position:absolute;left:1764px;top:756px;width:39.8px;height:14px;line-height:14px;text-align:right;font:11px 'Liberation Sans', sans-serif;color:#000;white-space:pre;">-</div><div style="position:absolute;left:1822px;top:756px;width:39.8px;height:14px;line-height:14px;text-align:right;font:11px 'Liberation Sans', sans-serif;color:#000;white-space:pre;">-</div><div style="position:absolute;left:342px;top:770px;height:14px;line-height:14px;font:11px 'Liberation Sans', sans-serif;color:#000;white-space:pre;">MPS</div><div style="position:absolute;left:342px;top:784px;height:14px;line-height:14px;font:11px 'Liberation Sans', sans-serif;color:#000;white-space:pre;">Capacity</div><div style="position:absolute;left:342px;top:798px;height:14px;line-height:14px;font:11px 'Liberation Sans', sans-serif;color:#000;white-space:pre;">ATP</div><div style="position:absolute;left:546px;top:798px;width:39.8px;height:14px;line-height:14px;text-align:right;font:11px 'Liberation Sans', sans-serif;color:#000;white-space:pre;">-</div><div style="position:absolute;left:604px;top:798px;width:39.8px;height:14px;line-height:14px;text-align:right;font:11px 'Liberation Sans', sans-serif;color:#000;white-space:pre;">-</div><div style="position:absolute;left:662px;top:798px;width:39.8px;height:14px;line-height:14px;text-align:right;font:11px 'Liberation Sans', sans-serif;color:#000;white-space:pre;">-</div><div style="position:absolute;left:720px;top:798px;width:39.8px;height:14px;line-height:14px;text-align:right;font:11px 'Liberation Sans', sans-serif;color:#000;white-space:pre;">-</div><div style="position:absolute;left:778px;top:798px;width:39.8px;height:14px;line-height:14px;text-align:right;font:11px 'Liberation Sans', sans-serif;color:#000;white-space:pre;">-</div><div style="position:absolute;left:836px;top:798px;width:39.8px;height:14px;line-height:14px;text-align:right;font:11px 'Liberation Sans', sans-serif;color:#000;white-space:pre;">-</div><div style="position:absolute;left:894px;top:798px;width:39.8px;height:14px;line-height:14px;text-align:right;font:11px 'Liberation Sans', sans-serif;color:#000;white-space:pre;">-</div><div style="position:absolute;left:952px;top:798px;width:39.8px;height:14px;line-height:14px;text-align:right;font:11px 'Liberation Sans', sans-serif;color:#000;white-space:pre;">-</div><div style="position:absolute;left:1010px;top:798px;width:39.8px;height:14px;line-height:14px;text-align:right;font:11px 'Liberation Sans', sans-serif;color:#000;white-space:pre;">-</div><div style="position:absolute;left:1068px;top:798px;width:39.8px;height:14px;line-height:14px;text-align:right;font:11px 'Liberation Sans', sans-serif;color:#000;white-space:pre;">-</div><div style="position:absolute;left:1126px;top:798px;width:39.8px;height:14px;line-height:14px;text-align:right;font:11px 'Liberation Sans', sans-serif;color:#000;white-space:pre;">-</div><div style="position:absolute;left:1184px;top:798px;width:39.8px;height:14px;line-height:14px;text-align:right;font:11px 'Liberation Sans', sans-serif;color:#000;white-space:pre;">-</div><div style="position:absolute;left:1242px;top:798px;width:39.8px;height:14px;line-height:14px;text-align:right;font:11px 'Liberation Sans', sans-serif;color:#000;white-space:pre;">-</div><div style="position:absolute;left:1300px;top:798px;width:39.8px;height:14px;line-height:14px;text-align:right;font:11px 'Liberation Sans', sans-serif;color:#000;white-space:pre;">-</div><div style="position:absolute;left:1358px;top:798px;width:39.8px;height:14px;line-height:14px;text-align:right;font:11px 'Liberation Sans', sans-serif;color:#000;white-space:pre;">-</div><div style="position:absolute;left:1416px;top:798px;width:39.8px;height:14px;line-height:14px;text-align:right;font:11px 'Liberation Sans', sans-serif;color:#000;white-space:pre;">-</div><div style="position:absolute;left:1474px;top:798px;width:39.8px;height:14px;line-height:14px;text-align:right;font:11px 'Liberation Sans', sans-serif;color:#000;white-space:pre;">-</div><div style="position:absolute;left:1532px;top:798px;width:39.8px;height:14px;line-height:14px;text-align:right;font:11px 'Liberation Sans', sans-serif;color:#000;white-space:pre;">-</div><div style="position:absolute;left:1590px;top:798px;width:39.8px;height:14px;line-height:14px;text-align:right;font:11px 'Liberation Sans', sans-serif;color:#000;white-space:pre;">-</div><div style="position:absolute;left:1648px;top:798px;width:39.8px;height:14px;line-height:14px;text-align:right;font:11px 'Liberation Sans', sans-serif;color:#000;white-space:pre;">-</div><div style="position:absolute;left:1706px;top:798px;width:39.8px;height:14px;line-height:14px;text-align:right;font:11px 'Liberation Sans', sans-serif;color:#000;white-space:pre;">-</div><div style="position:absolute;left:1764px;top:798px;width:39.8px;height:14px;line-height:14px;text-align:right;font:11px 'Liberation Sans', sans-serif;color:#000;white-space:pre;">-</div><div style="position:absolute;left:1822px;top:798px;width:39.8px;height:14px;line-height:14px;text-align:right;font:11px 'Liberation Sans', sans-serif;color:#000;white-space:pre;">-</div><div style="position:absolute;left:342px;top:813px;height:14px;line-height:14px;font:11px 'Liberation Sans', sans-serif;color:#000;white-space:pre;">Customer Orders</div><div style="position:absolute;left:546px;top:813px;width:39.8px;height:14px;line-height:14px;text-align:right;font:11px 'Liberation Sans', sans-serif;color:#000;white-space:pre;">-</div><div style="position:absolute;left:604px;top:813px;width:39.8px;height:14px;line-height:14px;text-align:right;font:11px 'Liberation Sans', sans-serif;color:#000;white-space:pre;">-</div><div style="position:absolute;left:662px;top:813px;width:39.8px;height:14px;line-height:14px;text-align:right;font:11px 'Liberation Sans', sans-serif;color:#000;white-space:pre;">-</div><div style="position:absolute;left:720px;top:813px;width:39.8px;height:14px;line-height:14px;text-align:right;font:11px 'Liberation Sans', sans-serif;color:#000;white-space:pre;">-</div><div style="position:absolute;left:778px;top:813px;width:39.8px;height:14px;line-height:14px;text-align:right;font:11px 'Liberation Sans', sans-serif;color:#000;white-space:pre;">-</div><div style="position:absolute;left:836px;top:813px;width:39.8px;height:14px;line-height:14px;text-align:right;font:11px 'Liberation Sans', sans-serif;color:#000;white-space:pre;">-</div><div style="position:absolute;left:894px;top:813px;width:39.8px;height:14px;line-height:14px;text-align:right;font:11px 'Liberation Sans', sans-serif;color:#000;white-space:pre;">-</div><div style="position:absolute;left:952px;top:813px;width:39.8px;height:14px;line-height:14px;text-align:right;font:11px 'Liberation Sans', sans-serif;color:#000;white-space:pre;">-</div><div style="position:absolute;left:1010px;top:813px;width:39.8px;height:14px;line-height:14px;text-align:right;font:11px 'Liberation Sans', sans-serif;color:#000;white-space:pre;">-</div><div style="position:absolute;left:1068px;top:813px;width:39.8px;height:14px;line-height:14px;text-align:right;font:11px 'Liberation Sans', sans-serif;color:#000;white-space:pre;">-</div><div style="position:absolute;left:1126px;top:813px;width:39.8px;height:14px;line-height:14px;text-align:right;font:11px 'Liberation Sans', sans-serif;color:#000;white-space:pre;">-</div><div style="position:absolute;left:1184px;top:813px;width:39.8px;height:14px;line-height:14px;text-align:right;font:11px 'Liberation Sans', sans-serif;color:#000;white-space:pre;">-</div><div style="position:absolute;left:1242px;top:813px;width:39.8px;height:14px;line-height:14px;text-align:right;font:11px 'Liberation Sans', sans-serif;color:#000;white-space:pre;">-</div><div style="position:absolute;left:1300px;top:813px;width:39.8px;height:14px;line-height:14px;text-align:right;font:11px 'Liberation Sans', sans-serif;color:#000;white-space:pre;">-</div><div style="position:absolute;left:1358px;top:813px;width:39.8px;height:14px;line-height:14px;text-align:right;font:11px 'Liberation Sans', sans-serif;color:#000;white-space:pre;">-</div><div style="position:absolute;left:1416px;top:813px;width:39.8px;height:14px;line-height:14px;text-align:right;font:11px 'Liberation Sans', sans-serif;color:#000;white-space:pre;">-</div><div style="position:absolute;left:1474px;top:813px;width:39.8px;height:14px;line-height:14px;text-align:right;font:11px 'Liberation Sans', sans-serif;color:#000;white-space:pre;">-</div><div style="position:absolute;left:1532px;top:813px;width:39.8px;height:14px;line-height:14px;text-align:right;font:11px 'Liberation Sans', sans-serif;color:#000;white-space:pre;">-</div><div style="position:absolute;left:1590px;top:813px;width:39.8px;height:14px;line-height:14px;text-align:right;font:11px 'Liberation Sans', sans-serif;color:#000;white-space:pre;">-</div><div style="position:absolute;left:1648px;top:813px;width:39.8px;height:14px;line-height:14px;text-align:right;font:11px 'Liberation Sans', sans-serif;color:#000;white-space:pre;">-</div><div style="position:absolute;left:1706px;top:813px;width:39.8px;height:14px;line-height:14px;text-align:right;font:11px 'Liberation Sans', sans-serif;color:#000;white-space:pre;">-</div><div style="position:absolute;left:1764px;top:813px;width:39.8px;height:14px;line-height:14px;text-align:right;font:11px 'Liberation Sans', sans-serif;color:#000;white-space:pre;">-</div><div style="position:absolute;left:1822px;top:813px;width:39.8px;height:14px;line-height:14px;text-align:right;font:11px 'Liberation Sans', sans-serif;color:#000;white-space:pre;">-</div><div style="position:absolute;left:342px;top:827px;height:14px;line-height:14px;font:11px 'Liberation Sans', sans-serif;color:#000;white-space:pre;">Projected Inventory</div><div style="position:absolute;left:546px;top:827px;width:39.8px;height:14px;line-height:14px;text-align:right;font:11px 'Liberation Sans', sans-serif;color:#000;white-space:pre;">-</div><div style="position:absolute;left:604px;top:827px;width:39.8px;height:14px;line-height:14px;text-align:right;font:11px 'Liberation Sans', sans-serif;color:#000;white-space:pre;">-</div><div style="position:absolute;left:662px;top:827px;width:39.8px;height:14px;line-height:14px;text-align:right;font:11px 'Liberation Sans', sans-serif;color:#000;white-space:pre;">-</div><div style="position:absolute;left:720px;top:827px;width:39.8px;height:14px;line-height:14px;text-align:right;font:11px 'Liberation Sans', sans-serif;color:#000;white-space:pre;">-</div><div style="position:absolute;left:778px;top:827px;width:39.8px;height:14px;line-height:14px;text-align:right;font:11px 'Liberation Sans', sans-serif;color:#000;white-space:pre;">-</div><div style="position:absolute;left:836px;top:827px;width:39.8px;height:14px;line-height:14px;text-align:right;font:11px 'Liberation Sans', sans-serif;color:#000;white-space:pre;">-</div><div style="position:absolute;left:894px;top:827px;width:39.8px;height:14px;line-height:14px;text-align:right;font:11px 'Liberation Sans', sans-serif;color:#000;white-space:pre;">-</div><div style="position:absolute;left:952px;top:827px;width:39.8px;height:14px;line-height:14px;text-align:right;font:11px 'Liberation Sans', sans-serif;color:#000;white-space:pre;">-</div><div style="position:absolute;left:1010px;top:827px;width:39.8px;height:14px;line-height:14px;text-align:right;font:11px 'Liberation Sans', sans-serif;color:#000;white-space:pre;">-</div><div style="position:absolute;left:1068px;top:827px;width:39.8px;height:14px;line-height:14px;text-align:right;font:11px 'Liberation Sans', sans-serif;color:#000;white-space:pre;">-</div><div style="position:absolute;left:1126px;top:827px;width:39.8px;height:14px;line-height:14px;text-align:right;font:11px 'Liberation Sans', sans-serif;color:#000;white-space:pre;">-</div><div style="position:absolute;left:1184px;top:827px;width:39.8px;height:14px;line-height:14px;text-align:right;font:11px 'Liberation Sans', sans-serif;color:#000;white-space:pre;">-</div><div style="position:absolute;left:1242px;top:827px;width:39.8px;height:14px;line-height:14px;text-align:right;font:11px 'Liberation Sans', sans-serif;color:#000;white-space:pre;">-</div><div style="position:absolute;left:1300px;top:827px;width:39.8px;height:14px;line-height:14px;text-align:right;font:11px 'Liberation Sans', sans-serif;color:#000;white-space:pre;">-</div><div style="position:absolute;left:1358px;top:827px;width:39.8px;height:14px;line-height:14px;text-align:right;font:11px 'Liberation Sans', sans-serif;color:#000;white-space:pre;">-</div><div style="position:absolute;left:1416px;top:827px;width:39.8px;height:14px;line-height:14px;text-align:right;font:11px 'Liberation Sans', sans-serif;color:#000;white-space:pre;">-</div><div style="position:absolute;left:1474px;top:827px;width:39.8px;height:14px;line-height:14px;text-align:right;font:11px 'Liberation Sans', sans-serif;color:#000;white-space:pre;">-</div><div style="position:absolute;left:1532px;top:827px;width:39.8px;height:14px;line-height:14px;text-align:right;font:11px 'Liberation Sans', sans-serif;color:#000;white-space:pre;">-</div><div style="position:absolute;left:1590px;top:827px;width:39.8px;height:14px;line-height:14px;text-align:right;font:11px 'Liberation Sans', sans-serif;color:#000;white-space:pre;">-</div><div style="position:absolute;left:1648px;top:827px;width:39.8px;height:14px;line-height:14px;text-align:right;font:11px 'Liberation Sans', sans-serif;color:#000;white-space:pre;">-</div><div style="position:absolute;left:1706px;top:827px;width:39.8px;height:14px;line-height:14px;text-align:right;font:11px 'Liberation Sans', sans-serif;color:#000;white-space:pre;">-</div><div style="position:absolute;left:1764px;top:827px;width:39.8px;height:14px;line-height:14px;text-align:right;font:11px 'Liberation Sans', sans-serif;color:#000;white-space:pre;">-</div><div style="position:absolute;left:1822px;top:827px;width:39.8px;height:14px;line-height:14px;text-align:right;font:11px 'Liberation Sans', sans-serif;color:#000;white-space:pre;">-</div><div style="position:absolute;left:342px;top:841px;height:14px;line-height:14px;font:11px 'Liberation Sans', sans-serif;color:#000;white-space:pre;">MPS</div><div style="position:absolute;left:342px;top:855px;height:14px;line-height:14px;font:11px 'Liberation Sans', sans-serif;color:#000;white-space:pre;">Capacity</div><div style="position:absolute;left:342px;top:869px;height:14px;line-height:14px;font:11px 'Liberation Sans', sans-serif;color:#000;white-space:pre;">ATP</div><div style="position:absolute;left:546px;top:869px;width:39.8px;height:14px;line-height:14px;text-align:right;font:11px 'Liberation Sans', sans-serif;color:#000;white-space:pre;">-</div><div style="position:absolute;left:604px;top:869px;width:39.8px;height:14px;line-height:14px;text-align:right;font:11px 'Liberation Sans', sans-serif;color:#000;white-space:pre;">-</div><div style="position:absolute;left:662px;top:869px;width:39.8px;height:14px;line-height:14px;text-align:right;font:11px 'Liberation Sans', sans-serif;color:#000;white-space:pre;">-</div><div style="position:absolute;left:720px;top:869px;width:39.8px;height:14px;line-height:14px;text-align:right;font:11px 'Liberation Sans', sans-serif;color:#000;white-space:pre;">-</div><div style="position:absolute;left:778px;top:869px;width:39.8px;height:14px;line-height:14px;text-align:right;font:11px 'Liberation Sans', sans-serif;color:#000;white-space:pre;">-</div><div style="position:absolute;left:836px;top:869px;width:39.8px;height:14px;line-height:14px;text-align:right;font:11px 'Liberation Sans', sans-serif;color:#000;white-space:pre;">-</div><div style="position:absolute;left:894px;top:869px;width:39.8px;height:14px;line-height:14px;text-align:right;font:11px 'Liberation Sans', sans-serif;color:#000;white-space:pre;">-</div><div style="position:absolute;left:952px;top:869px;width:39.8px;height:14px;line-height:14px;text-align:right;font:11px 'Liberation Sans', sans-serif;color:#000;white-space:pre;">-</div><div style="position:absolute;left:1010px;top:869px;width:39.8px;height:14px;line-height:14px;text-align:right;font:11px 'Liberation Sans', sans-serif;color:#000;white-space:pre;">-</div><div style="position:absolute;left:1068px;top:869px;width:39.8px;height:14px;line-height:14px;text-align:right;font:11px 'Liberation Sans', sans-serif;color:#000;white-space:pre;">-</div><div style="position:absolute;left:1126px;top:869px;width:39.8px;height:14px;line-height:14px;text-align:right;font:11px 'Liberation Sans', sans-serif;color:#000;white-space:pre;">-</div><div style="position:absolute;left:1184px;top:869px;width:39.8px;height:14px;line-height:14px;text-align:right;font:11px 'Liberation Sans', sans-serif;color:#000;white-space:pre;">-</div><div style="position:absolute;left:1242px;top:869px;width:39.8px;height:14px;line-height:14px;text-align:right;font:11px 'Liberation Sans', sans-serif;color:#000;white-space:pre;">-</div><div style="position:absolute;left:1300px;top:869px;width:39.8px;height:14px;line-height:14px;text-align:right;font:11px 'Liberation Sans', sans-serif;color:#000;white-space:pre;">-</div><div style="position:absolute;left:1358px;top:869px;width:39.8px;height:14px;line-height:14px;text-align:right;font:11px 'Liberation Sans', sans-serif;color:#000;white-space:pre;">-</div><div style="position:absolute;left:1416px;top:869px;width:39.8px;height:14px;line-height:14px;text-align:right;font:11px 'Liberation Sans', sans-serif;color:#000;white-space:pre;">-</div><div style="position:absolute;left:1474px;top:869px;width:39.8px;height:14px;line-height:14px;text-align:right;font:11px 'Liberation Sans', sans-serif;color:#000;white-space:pre;">-</div><div style="position:absolute;left:1532px;top:869px;width:39.8px;height:14px;line-height:14px;text-align:right;font:11px 'Liberation Sans', sans-serif;color:#000;white-space:pre;">-</div><div style="position:absolute;left:1590px;top:869px;width:39.8px;height:14px;line-height:14px;text-align:right;font:11px 'Liberation Sans', sans-serif;color:#000;white-space:pre;">-</div><div style="position:absolute;left:1648px;top:869px;width:39.8px;height:14px;line-height:14px;text-align:right;font:11px 'Liberation Sans', sans-serif;color:#000;white-space:pre;">-</div><div style="position:absolute;left:1706px;top:869px;width:39.8px;height:14px;line-height:14px;text-align:right;font:11px 'Liberation Sans', sans-serif;color:#000;white-space:pre;">-</div><div style="position:absolute;left:1764px;top:869px;width:39.8px;height:14px;line-height:14px;text-align:right;font:11px 'Liberation Sans', sans-serif;color:#000;white-space:pre;">-</div><div style="position:absolute;left:1822px;top:869px;width:39.8px;height:14px;line-height:14px;text-align:right;font:11px 'Liberation Sans', sans-serif;color:#000;white-space:pre;">-</div><div style="position:absolute;left:342px;top:884px;height:14px;line-height:14px;font:11px 'Liberation Sans', sans-serif;color:#000;white-space:pre;">Customer Orders</div><div style="position:absolute;left:546px;top:884px;width:39.8px;height:14px;line-height:14px;text-align:right;font:11px 'Liberation Sans', sans-serif;color:#000;white-space:pre;">-</div><div style="position:absolute;left:604px;top:884px;width:39.8px;height:14px;line-height:14px;text-align:right;font:11px 'Liberation Sans', sans-serif;color:#000;white-space:pre;">-</div><div style="position:absolute;left:662px;top:884px;width:39.8px;height:14px;line-height:14px;text-align:right;font:11px 'Liberation Sans', sans-serif;color:#000;white-space:pre;">-</div><div style="position:absolute;left:720px;top:884px;width:39.8px;height:14px;line-height:14px;text-align:right;font:11px 'Liberation Sans', sans-serif;color:#000;white-space:pre;">-</div><div style="position:absolute;left:778px;top:884px;width:39.8px;height:14px;line-height:14px;text-align:right;font:11px 'Liberation Sans', sans-serif;color:#000;white-space:pre;">-</div><div style="position:absolute;left:836px;top:884px;width:39.8px;height:14px;line-height:14px;text-align:right;font:11px 'Liberation Sans', sans-serif;color:#000;white-space:pre;">-</div><div style="position:absolute;left:894px;top:884px;width:39.8px;height:14px;line-height:14px;text-align:right;font:11px 'Liberation Sans', sans-serif;color:#000;white-space:pre;">-</div><div style="position:absolute;left:952px;top:884px;width:39.8px;height:14px;line-height:14px;text-align:right;font:11px 'Liberation Sans', sans-serif;color:#000;white-space:pre;">-</div><div style="position:absolute;left:1010px;top:884px;width:39.8px;height:14px;line-height:14px;text-align:right;font:11px 'Liberation Sans', sans-serif;color:#000;white-space:pre;">-</div><div style="position:absolute;left:1068px;top:884px;width:39.8px;height:14px;line-height:14px;text-align:right;font:11px 'Liberation Sans', sans-serif;color:#000;white-space:pre;">-</div><div style="position:absolute;left:1126px;top:884px;width:39.8px;height:14px;line-height:14px;text-align:right;font:11px 'Liberation Sans', sans-serif;color:#000;white-space:pre;">-</div><div style="position:absolute;left:1184px;top:884px;width:39.8px;height:14px;line-height:14px;text-align:right;font:11px 'Liberation Sans', sans-serif;color:#000;white-space:pre;">-</div><div style="position:absolute;left:1242px;top:884px;width:39.8px;height:14px;line-height:14px;text-align:right;font:11px 'Liberation Sans', sans-serif;color:#000;white-space:pre;">-</div><div style="position:absolute;left:1300px;top:884px;width:39.8px;height:14px;line-height:14px;text-align:right;font:11px 'Liberation Sans', sans-serif;color:#000;white-space:pre;">-</div><div style="position:absolute;left:1358px;top:884px;width:39.8px;height:14px;line-height:14px;text-align:right;font:11px 'Liberation Sans', sans-serif;color:#000;white-space:pre;">-</div><div style="position:absolute;left:1416px;top:884px;width:39.8px;height:14px;line-height:14px;text-align:right;font:11px 'Liberation Sans', sans-serif;color:#000;white-space:pre;">-</div><div style="position:absolute;left:1474px;top:884px;width:39.8px;height:14px;line-height:14px;text-align:right;font:11px 'Liberation Sans', sans-serif;color:#000;white-space:pre;">-</div><div style="position:absolute;left:1532px;top:884px;width:39.8px;height:14px;line-height:14px;text-align:right;font:11px 'Liberation Sans', sans-serif;color:#000;white-space:pre;">-</div><div style="position:absolute;left:1590px;top:884px;width:39.8px;height:14px;line-height:14px;text-align:right;font:11px 'Liberation Sans', sans-serif;color:#000;white-space:pre;">-</div><div style="position:absolute;left:1648px;top:884px;width:39.8px;height:14px;line-height:14px;text-align:right;font:11px 'Liberation Sans', sans-serif;color:#000;white-space:pre;">-</div><div style="position:absolute;left:1706px;top:884px;width:39.8px;height:14px;line-height:14px;text-align:right;font:11px 'Liberation Sans', sans-serif;color:#000;white-space:pre;">-</div><div style="position:absolute;left:1764px;top:884px;width:39.8px;height:14px;line-height:14px;text-align:right;font:11px 'Liberation Sans', sans-serif;color:#000;white-space:pre;">-</div><div style="position:absolute;left:1822px;top:884px;width:39.8px;height:14px;line-height:14px;text-align:right;font:11px 'Liberation Sans', sans-serif;color:#000;white-space:pre;">-</div><div style="position:absolute;left:342px;top:898px;height:14px;line-height:14px;font:11px 'Liberation Sans', sans-serif;color:#000;white-space:pre;">Projected Inventory</div><div style="position:absolute;left:546px;top:898px;width:39.8px;height:14px;line-height:14px;text-align:right;font:11px 'Liberation Sans', sans-serif;color:#000;white-space:pre;">-</div><div style="position:absolute;left:604px;top:898px;width:39.8px;height:14px;line-height:14px;text-align:right;font:11px 'Liberation Sans', sans-serif;color:#000;white-space:pre;">-</div><div style="position:absolute;left:662px;top:898px;width:39.8px;height:14px;line-height:14px;text-align:right;font:11px 'Liberation Sans', sans-serif;color:#000;white-space:pre;">-</div><div style="position:absolute;left:720px;top:898px;width:39.8px;height:14px;line-height:14px;text-align:right;font:11px 'Liberation Sans', sans-serif;color:#000;white-space:pre;">-</div><div style="position:absolute;left:778px;top:898px;width:39.8px;height:14px;line-height:14px;text-align:right;font:11px 'Liberation Sans', sans-serif;color:#000;white-space:pre;">-</div><div style="position:absolute;left:836px;top:898px;width:39.8px;height:14px;line-height:14px;text-align:right;font:11px 'Liberation Sans', sans-serif;color:#000;white-space:pre;">-</div><div style="position:absolute;left:894px;top:898px;width:39.8px;height:14px;line-height:14px;text-align:right;font:11px 'Liberation Sans', sans-serif;color:#000;white-space:pre;">-</div><div style="position:absolute;left:952px;top:898px;width:39.8px;height:14px;line-height:14px;text-align:right;font:11px 'Liberation Sans', sans-serif;color:#000;white-space:pre;">-</div><div style="position:absolute;left:1010px;top:898px;width:39.8px;height:14px;line-height:14px;text-align:right;font:11px 'Liberation Sans', sans-serif;color:#000;white-space:pre;">-</div><div style="position:absolute;left:1068px;top:898px;width:39.8px;height:14px;line-height:14px;text-align:right;font:11px 'Liberation Sans', sans-serif;color:#000;white-space:pre;">-</div><div style="position:absolute;left:1126px;top:898px;width:39.8px;height:14px;line-height:14px;text-align:right;font:11px 'Liberation Sans', sans-serif;color:#000;white-space:pre;">-</div><div style="position:absolute;left:1184px;top:898px;width:39.8px;height:14px;line-height:14px;text-align:right;font:11px 'Liberation Sans', sans-serif;color:#000;white-space:pre;">-</div><div style="position:absolute;left:1242px;top:898px;width:39.8px;height:14px;line-height:14px;text-align:right;font:11px 'Liberation Sans', sans-serif;color:#000;white-space:pre;">-</div><div style="position:absolute;left:1300px;top:898px;width:39.8px;height:14px;line-height:14px;text-align:right;font:11px 'Liberation Sans', sans-serif;color:#000;white-space:pre;">-</div><div style="position:absolute;left:1358px;top:898px;width:39.8px;height:14px;line-height:14px;text-align:right;font:11px 'Liberation Sans', sans-serif;color:#000;white-space:pre;">-</div><div style="position:absolute;left:1416px;top:898px;width:39.8px;height:14px;line-height:14px;text-align:right;font:11px 'Liberation Sans', sans-serif;color:#000;white-space:pre;">-</div><div style="position:absolute;left:1474px;top:898px;width:39.8px;height:14px;line-height:14px;text-align:right;font:11px 'Liberation Sans', sans-serif;color:#000;white-space:pre;">-</div><div style="position:absolute;left:1532px;top:898px;width:39.8px;height:14px;line-height:14px;text-align:right;font:11px 'Liberation Sans', sans-serif;color:#000;white-space:pre;">-</div><div style="position:absolute;left:1590px;top:898px;width:39.8px;height:14px;line-height:14px;text-align:right;font:11px 'Liberation Sans', sans-serif;color:#000;white-space:pre;">-</div><div style="position:absolute;left:1648px;top:898px;width:39.8px;height:14px;line-height:14px;text-align:right;font:11px 'Liberation Sans', sans-serif;color:#000;white-space:pre;">-</div><div style="position:absolute;left:1706px;top:898px;width:39.8px;height:14px;line-height:14px;text-align:right;font:11px 'Liberation Sans', sans-serif;color:#000;white-space:pre;">-</div><div style="position:absolute;left:1764px;top:898px;width:39.8px;height:14px;line-height:14px;text-align:right;font:11px 'Liberation Sans', sans-serif;color:#000;white-space:pre;">-</div><div style="position:absolute;left:1822px;top:898px;width:39.8px;height:14px;line-height:14px;text-align:right;font:11px 'Liberation Sans', sans-serif;color:#000;white-space:pre;">-</div><div style="position:absolute;left:342px;top:912px;height:14px;line-height:14px;font:11px 'Liberation Sans', sans-serif;color:#000;white-space:pre;">MPS</div><div style="position:absolute;left:342px;top:926px;height:14px;line-height:14px;font:11px 'Liberation Sans', sans-serif;color:#000;white-space:pre;">Capacity</div><div style="position:absolute;left:342px;top:940px;height:14px;line-height:14px;font:11px 'Liberation Sans', sans-serif;color:#000;white-space:pre;">ATP</div><div style="position:absolute;left:546px;top:940px;width:39.8px;height:14px;line-height:14px;text-align:right;font:11px 'Liberation Sans', sans-serif;color:#000;white-space:pre;">-</div><div style="position:absolute;left:604px;top:940px;width:39.8px;height:14px;line-height:14px;text-align:right;font:11px 'Liberation Sans', sans-serif;color:#000;white-space:pre;">-</div><div style="position:absolute;left:662px;top:940px;width:39.8px;height:14px;line-height:14px;text-align:right;font:11px 'Liberation Sans', sans-serif;color:#000;white-space:pre;">-</div><div style="position:absolute;left:720px;top:940px;width:39.8px;height:14px;line-height:14px;text-align:right;font:11px 'Liberation Sans', sans-serif;color:#000;white-space:pre;">-</div><div style="position:absolute;left:778px;top:940px;width:39.8px;height:14px;line-height:14px;text-align:right;font:11px 'Liberation Sans', sans-serif;color:#000;white-space:pre;">-</div><div style="position:absolute;left:836px;top:940px;width:39.8px;height:14px;line-height:14px;text-align:right;font:11px 'Liberation Sans', sans-serif;color:#000;white-space:pre;">-</div><div style="position:absolute;left:894px;top:940px;width:39.8px;height:14px;line-height:14px;text-align:right;font:11px 'Liberation Sans', sans-serif;color:#000;white-space:pre;">-</div><div style="position:absolute;left:952px;top:940px;width:39.8px;height:14px;line-height:14px;text-align:right;font:11px 'Liberation Sans', sans-serif;color:#000;white-space:pre;">-</div><div style="position:absolute;left:1010px;top:940px;width:39.8px;height:14px;line-height:14px;text-align:right;font:11px 'Liberation Sans', sans-serif;color:#000;white-space:pre;">-</div><div style="position:absolute;left:1068px;top:940px;width:39.8px;height:14px;line-height:14px;text-align:right;font:11px 'Liberation Sans', sans-serif;color:#000;white-space:pre;">-</div><div style="position:absolute;left:1126px;top:940px;width:39.8px;height:14px;line-height:14px;text-align:right;font:11px 'Liberation Sans', sans-serif;color:#000;white-space:pre;">-</div><div style="position:absolute;left:1184px;top:940px;width:39.8px;height:14px;line-height:14px;text-align:right;font:11px 'Liberation Sans', sans-serif;color:#000;white-space:pre;">-</div><div style="position:absolute;left:1242px;top:940px;width:39.8px;height:14px;line-height:14px;text-align:right;font:11px 'Liberation Sans', sans-serif;color:#000;white-space:pre;">-</div><div style="position:absolute;left:1300px;top:940px;width:39.8px;height:14px;line-height:14px;text-align:right;font:11px 'Liberation Sans', sans-serif;color:#000;white-space:pre;">-</div><div style="position:absolute;left:1358px;top:940px;width:39.8px;height:14px;line-height:14px;text-align:right;font:11px 'Liberation Sans', sans-serif;color:#000;white-space:pre;">-</div><div style="position:absolute;left:1416px;top:940px;width:39.8px;height:14px;line-height:14px;text-align:right;font:11px 'Liberation Sans', sans-serif;color:#000;white-space:pre;">-</div><div style="position:absolute;left:1474px;top:940px;width:39.8px;height:14px;line-height:14px;text-align:right;font:11px 'Liberation Sans', sans-serif;color:#000;white-space:pre;">-</div><div style="position:absolute;left:1532px;top:940px;width:39.8px;height:14px;line-height:14px;text-align:right;font:11px 'Liberation Sans', sans-serif;color:#000;white-space:pre;">-</div><div style="position:absolute;left:1590px;top:940px;width:39.8px;height:14px;line-height:14px;text-align:right;font:11px 'Liberation Sans', sans-serif;color:#000;white-space:pre;">-</div><div style="position:absolute;left:1648px;top:940px;width:39.8px;height:14px;line-height:14px;text-align:right;font:11px 'Liberation Sans', sans-serif;color:#000;white-space:pre;">-</div><div style="position:absolute;left:1706px;top:940px;width:39.8px;height:14px;line-height:14px;text-align:right;font:11px 'Liberation Sans', sans-serif;color:#000;white-space:pre;">-</div><div style="position:absolute;left:1764px;top:940px;width:39.8px;height:14px;line-height:14px;text-align:right;font:11px 'Liberation Sans', sans-serif;color:#000;white-space:pre;">-</div><div style="position:absolute;left:1822px;top:940px;width:39.8px;height:14px;line-height:14px;text-align:right;font:11px 'Liberation Sans', sans-serif;color:#000;white-space:pre;">-</div><div style="position:absolute;left:342px;top:955px;height:14px;line-height:14px;font:11px 'Liberation Sans', sans-serif;color:#000;white-space:pre;">Customer Orders</div><div style="position:absolute;left:546px;top:955px;width:39.8px;height:14px;line-height:14px;text-align:right;font:11px 'Liberation Sans', sans-serif;color:#000;white-space:pre;">-</div><div style="position:absolute;left:604px;top:955px;width:39.8px;height:14px;line-height:14px;text-align:right;font:11px 'Liberation Sans', sans-serif;color:#000;white-space:pre;">-</div><div style="position:absolute;left:662px;top:955px;width:39.8px;height:14px;line-height:14px;text-align:right;font:11px 'Liberation Sans', sans-serif;color:#000;white-space:pre;">-</div><div style="position:absolute;left:720px;top:955px;width:39.8px;height:14px;line-height:14px;text-align:right;font:11px 'Liberation Sans', sans-serif;color:#000;white-space:pre;">-</div><div style="position:absolute;left:778px;top:955px;width:39.8px;height:14px;line-height:14px;text-align:right;font:11px 'Liberation Sans', sans-serif;color:#000;white-space:pre;">-</div><div style="position:absolute;left:836px;top:955px;width:39.8px;height:14px;line-height:14px;text-align:right;font:11px 'Liberation Sans', sans-serif;color:#000;white-space:pre;">-</div><div style="position:absolute;left:894px;top:955px;width:39.8px;height:14px;line-height:14px;text-align:right;font:11px 'Liberation Sans', sans-serif;color:#000;white-space:pre;">-</div><div style="position:absolute;left:952px;top:955px;width:39.8px;height:14px;line-height:14px;text-align:right;font:11px 'Liberation Sans', sans-serif;color:#000;white-space:pre;">-</div><div style="position:absolute;left:1010px;top:955px;width:39.8px;height:14px;line-height:14px;text-align:right;font:11px 'Liberation Sans', sans-serif;color:#000;white-space:pre;">-</div><div style="position:absolute;left:1068px;top:955px;width:39.8px;height:14px;line-height:14px;text-align:right;font:11px 'Liberation Sans', sans-serif;color:#000;white-space:pre;">-</div><div style="position:absolute;left:1126px;top:955px;width:39.8px;height:14px;line-height:14px;text-align:right;font:11px 'Liberation Sans', sans-serif;color:#000;white-space:pre;">-</div><div style="position:absolute;left:1184px;top:955px;width:39.8px;height:14px;line-height:14px;text-align:right;font:11px 'Liberation Sans', sans-serif;color:#000;white-space:pre;">-</div><div style="position:absolute;left:1242px;top:955px;width:39.8px;height:14px;line-height:14px;text-align:right;font:11px 'Liberation Sans', sans-serif;color:#000;white-space:pre;">-</div><div style="position:absolute;left:1300px;top:955px;width:39.8px;height:14px;line-height:14px;text-align:right;font:11px 'Liberation Sans', sans-serif;color:#000;white-space:pre;">-</div><div style="position:absolute;left:1358px;top:955px;width:39.8px;height:14px;line-height:14px;text-align:right;font:11px 'Liberation Sans', sans-serif;color:#000;white-space:pre;">-</div><div style="position:absolute;left:1416px;top:955px;width:39.8px;height:14px;line-height:14px;text-align:right;font:11px 'Liberation Sans', sans-serif;color:#000;white-space:pre;">-</div><div style="position:absolute;left:1474px;top:955px;width:39.8px;height:14px;line-height:14px;text-align:right;font:11px 'Liberation Sans', sans-serif;color:#000;white-space:pre;">-</div><div style="position:absolute;left:1532px;top:955px;width:39.8px;height:14px;line-height:14px;text-align:right;font:11px 'Liberation Sans', sans-serif;color:#000;white-space:pre;">-</div><div style="position:absolute;left:1590px;top:955px;width:39.8px;height:14px;line-height:14px;text-align:right;font:11px 'Liberation Sans', sans-serif;color:#000;white-space:pre;">-</div><div style="position:absolute;left:1648px;top:955px;width:39.8px;height:14px;line-height:14px;text-align:right;font:11px 'Liberation Sans', sans-serif;color:#000;white-space:pre;">-</div><div style="position:absolute;left:1706px;top:955px;width:39.8px;height:14px;line-height:14px;text-align:right;font:11px 'Liberation Sans', sans-serif;color:#000;white-space:pre;">-</div><div style="position:absolute;left:1764px;top:955px;width:39.8px;height:14px;line-height:14px;text-align:right;font:11px 'Liberation Sans', sans-serif;color:#000;white-space:pre;">-</div><div style="position:absolute;left:1822px;top:955px;width:39.8px;height:14px;line-height:14px;text-align:right;font:11px 'Liberation Sans', sans-serif;color:#000;white-space:pre;">-</div><div style="position:absolute;left:342px;top:969px;height:14px;line-height:14px;font:11px 'Liberation Sans', sans-serif;color:#000;white-space:pre;">Projected Inventory</div><div style="position:absolute;left:546px;top:969px;width:39.8px;height:14px;line-height:14px;text-align:right;font:11px 'Liberation Sans', sans-serif;color:#000;white-space:pre;">-</div><div style="position:absolute;left:604px;top:969px;width:39.8px;height:14px;line-height:14px;text-align:right;font:11px 'Liberation Sans', sans-serif;color:#000;white-space:pre;">-</div><div style="position:absolute;left:662px;top:969px;width:39.8px;height:14px;line-height:14px;text-align:right;font:11px 'Liberation Sans', sans-serif;color:#000;white-space:pre;">-</div><div style="position:absolute;left:720px;top:969px;width:39.8px;height:14px;line-height:14px;text-align:right;font:11px 'Liberation Sans', sans-serif;color:#000;white-space:pre;">-</div><div style="position:absolute;left:778px;top:969px;width:39.8px;height:14px;line-height:14px;text-align:right;font:11px 'Liberation Sans', sans-serif;color:#000;white-space:pre;">-</div><div style="position:absolute;left:836px;top:969px;width:39.8px;height:14px;line-height:14px;text-align:right;font:11px 'Liberation Sans', sans-serif;color:#000;white-space:pre;">-</div><div style="position:absolute;left:894px;top:969px;width:39.8px;height:14px;line-height:14px;text-align:right;font:11px 'Liberation Sans', sans-serif;color:#000;white-space:pre;">-</div><div style="position:absolute;left:952px;top:969px;width:39.8px;height:14px;line-height:14px;text-align:right;font:11px 'Liberation Sans', sans-serif;color:#000;white-space:pre;">-</div><div style="position:absolute;left:1010px;top:969px;width:39.8px;height:14px;line-height:14px;text-align:right;font:11px 'Liberation Sans', sans-serif;color:#000;white-space:pre;">-</div><div style="position:absolute;left:1068px;top:969px;width:39.8px;height:14px;line-height:14px;text-align:right;font:11px 'Liberation Sans', sans-serif;color:#000;white-space:pre;">-</div><div style="position:absolute;left:1126px;top:969px;width:39.8px;height:14px;line-height:14px;text-align:right;font:11px 'Liberation Sans', sans-serif;color:#000;white-space:pre;">-</div><div style="position:absolute;left:1184px;top:969px;width:39.8px;height:14px;line-height:14px;text-align:right;font:11px 'Liberation Sans', sans-serif;color:#000;white-space:pre;">-</div><div style="position:absolute;left:1242px;top:969px;width:39.8px;height:14px;line-height:14px;text-align:right;font:11px 'Liberation Sans', sans-serif;color:#000;white-space:pre;">-</div><div style="position:absolute;left:1300px;top:969px;width:39.8px;height:14px;line-height:14px;text-align:right;font:11px 'Liberation Sans', sans-serif;color:#000;white-space:pre;">-</div><div style="position:absolute;left:1358px;top:969px;width:39.8px;height:14px;line-height:14px;text-align:right;font:11px 'Liberation Sans', sans-serif;color:#000;white-space:pre;">-</div><div style="position:absolute;left:1416px;top:969px;width:39.8px;height:14px;line-height:14px;text-align:right;font:11px 'Liberation Sans', sans-serif;color:#000;white-space:pre;">-</div><div style="position:absolute;left:1474px;top:969px;width:39.8px;height:14px;line-height:14px;text-align:right;font:11px 'Liberation Sans', sans-serif;color:#000;white-space:pre;">-</div><div style="position:absolute;left:1532px;top:969px;width:39.8px;height:14px;line-height:14px;text-align:right;font:11px 'Liberation Sans', sans-serif;color:#000;white-space:pre;">-</div><div style="position:absolute;left:1590px;top:969px;width:39.8px;height:14px;line-height:14px;text-align:right;font:11px 'Liberation Sans', sans-serif;color:#000;white-space:pre;">-</div><div style="position:absolute;left:1648px;top:969px;width:39.8px;height:14px;line-height:14px;text-align:right;font:11px 'Liberation Sans', sans-serif;color:#000;white-space:pre;">-</div><div style="position:absolute;left:1706px;top:969px;width:39.8px;height:14px;line-height:14px;text-align:right;font:11px 'Liberation Sans', sans-serif;color:#000;white-space:pre;">-</div><div style="position:absolute;left:1764px;top:969px;width:39.8px;height:14px;line-height:14px;text-align:right;font:11px 'Liberation Sans', sans-serif;color:#000;white-space:pre;">-</div><div style="position:absolute;left:1822px;top:969px;width:39.8px;height:14px;line-height:14px;text-align:right;font:11px 'Liberation Sans', sans-serif;color:#000;white-space:pre;">-</div><div style="position:absolute;left:342px;top:983px;height:14px;line-height:14px;font:11px 'Liberation Sans', sans-serif;color:#000;white-space:pre;">MPS</div><div style="position:absolute;left:0px;top:990px;width:1915px;height:28px;background:#E6E6E6;"></div><div style="position:absolute;left:0px;top:990px;width:1898px;height:1px;background:#A3A3A3;"></div><svg style="position:absolute;left:25px;top:998px;" width="8" height="10" viewBox="0 0 8 10"><path d="M6 1 L1 5 L6 9 Z" fill="#C4C4C4"/></svg><svg style="position:absolute;left:55px;top:998px;" width="8" height="10" viewBox="0 0 8 10"><path d="M1 1 L6 5 L1 9 Z" fill="#C4C4C4"/></svg><div style="position:absolute;left:99px;top:994px;width:1px;height:20px;background:#9E9E9E;"></div><div style="position:absolute;left:103px;top:993px;width:96px;height:22px;background:#C00000;"></div><div style="position:absolute;left:103px;top:995.5px;width:96px;text-align:center;font:13.3px 'Liberation Sans', sans-serif;color:#FFFFFF;">Introduction</div><div style="position:absolute;left:200px;top:990px;width:52px;height:24px;background:linear-gradient(#FFFFFF 20%,#D9EEE0);border-left:1px solid #A3A3A3;border-right:1px solid #A3A3A3;box-sizing:border-box;"></div><div style="position:absolute;left:199px;top:1013px;width:54px;height:2px;background:#217346;"></div><div style="position:absolute;left:200px;top:995.5px;width:52px;text-align:center;font:bold 13px 'Liberation Sans', sans-serif;color:#217346;">MPS</div><div style="position:absolute;left:254px;top:993px;width:112px;height:22px;background:#52B27E;"></div><div style="position:absolute;left:254px;top:995.5px;width:112px;text-align:center;font:13.3px 'Liberation Sans', sans-serif;color:#1A1A1A;">Operation Rate</div><div style="position:absolute;left:368px;top:994px;width:1px;height:20px;background:#9E9E9E;"></div><div style="position:absolute;left:371px;top:993px;width:123px;height:22px;background:#8FCEA9;"></div><div style="position:absolute;left:371px;top:995.5px;width:123px;text-align:center;font:13.3px 'Liberation Sans', sans-serif;color:#1A1A1A;">Customer Orders</div><div style="position:absolute;left:496px;top:994px;width:1px;height:20px;background:#9E9E9E;"></div><div style="position:absolute;left:499px;top:993px;width:76px;height:22px;background:#8FCEA9;"></div><div style="position:absolute;left:499px;top:995.5px;width:76px;text-align:center;font:13.3px 'Liberation Sans', sans-serif;color:#1A1A1A;">Database</div><div style="position:absolute;left:577px;top:994px;width:1px;height:20px;background:#9E9E9E;"></div><svg style="position:absolute;left:609px;top:994px;" width="19" height="19" viewBox="0 0 19 19"><circle cx="9.5" cy="9.5" r="8" fill="none" stroke="#707070" stroke-width="1.2"/><path d="M9.5 5 V14 M5 9.5 H14" stroke="#707070" stroke-width="1.4"/></svg><svg style="position:absolute;left:1151px;top:998px;" width="4" height="12" viewBox="0 0 4 12"><g fill="#A0A0A0"><rect x="1" y="1" width="2" height="2"/><rect x="1" y="5" width="2" height="2"/><rect x="1" y="9" width="2" height="2"/></g></svg><div style="position:absolute;left:1169px;top:997px;width:727px;height:15px;background:#DBDBDB;"></div><div style="position:absolute;left:1169px;top:997px;width:15px;height:15px;background:#fff;border:1px solid #ABABAB;box-sizing:border-box;"></div><svg style="position:absolute;left:1173px;top:1000px;" width="7" height="9" viewBox="0 0 7 9"><path d="M5.5 0.5 L1 4.5 L5.5 8.5 Z" fill="#555"/></svg><div style="position:absolute;left:1183px;top:997px;width:309px;height:15px;background:#fff;border:1px solid #ABABAB;box-sizing:border-box;"></div><div style="position:absolute;left:1882px;top:997px;width:15px;height:15px;background:#fff;border:1px solid #ABABAB;box-sizing:border-box;"></div><svg style="position:absolute;left:1887px;top:1000px;" width="7" height="9" viewBox="0 0 7 9"><path d="M1.5 0.5 L6 4.5 L1.5 8.5 Z" fill="#555"/></svg><div style="position:absolute;left:0px;top:1018px;width:1915px;height:1px;background:#C8C6C4;"></div><div style="position:absolute;left:1899px;top:207px;width:16px;height:783px;background:#E6E6E6;"></div><div style="position:absolute;left:1902px;top:209px;width:13px;height:781px;background:#DBDBDB;"></div><div style="position:absolute;left:1902px;top:209px;width:13px;height:15px;background:#fff;border:1px solid #ABABAB;border-right:none;box-sizing:border-box;"></div><svg style="position:absolute;left:1905px;top:213px;" width="9" height="6" viewBox="0 0 9 6"><path d="M0.5 5.5 L4.5 1 L8.5 5.5 Z" fill="#666"/></svg><div style="position:absolute;left:1902px;top:224px;width:13px;height:371px;background:#fff;border:1px solid #ABABAB;border-right:none;box-sizing:border-box;"></div><div style="position:absolute;left:1902px;top:975px;width:13px;height:15px;background:#fff;border:1px solid #ABABAB;border-right:none;box-sizing:border-box;"></div><svg style="position:absolute;left:1906px;top:980px;" width="9" height="6" viewBox="0 0 9 6"><path d="M0.5 0.5 L4.5 5 L8.5 0.5 Z" fill="#666"/></svg><div style="position:absolute;left:0px;top:1019px;width:1915px;height:20px;background:#F3F2F1;"></div><div style="position:absolute;left:1626px;top:1019px;width:40px;height:20px;background:#C8C8C8;"></div><svg style="position:absolute;left:1638px;top:1022px;" width="14" height="14" viewBox="0 0 14 14"><rect x="0" y="0" width="14" height="14" fill="#333"/><g fill="#C8C8C8"><rect x="1.5" y="1.5" width="3" height="3"/><rect x="5.5" y="1.5" width="3" height="3"/><rect x="9.5" y="1.5" width="3" height="3"/><rect x="1.5" y="5.5" width="3" height="3"/><rect x="5.5" y="5.5" width="3" height="3"/><rect x="9.5" y="5.5" width="3" height="3"/><rect x="1.5" y="9.5" width="3" height="3"/><rect x="5.5" y="9.5" width="3" height="3"/><rect x="9.5" y="9.5" width="3" height="3"/></g></svg><svg style="position:absolute;left:1678px;top:1022px;" width="15" height="14" viewBox="0 0 15 14"><g fill="none" stroke="#333" stroke-width="1.1"><rect x="0.5" y="0.5" width="13" height="13"/><rect x="3.5" y="2.5" width="7" height="9"/><path d="M5 5 H9 M5 7 H9 M5 9 H9"/></g></svg><svg style="position:absolute;left:1718px;top:1022px;" width="15" height="14" viewBox="0 0 15 14"><g fill="none" stroke="#333" stroke-width="1.1"><path d="M0.5 0.5 H13.5 V13.5 H0.5 Z M0.5 8.5 H8.5 V0.5 M4.5 0.5 V5.5 H8.5"/></g></svg><div style="position:absolute;left:1751px;top:1028px;width:9px;height:1px;background:#444;"></div><div style="position:absolute;left:1765px;top:1028px;width:100px;height:1px;background:#A0A0A0;"></div><div style="position:absolute;left:1805px;top:1024px;width:5px;height:10px;background:#6E6E6E;"></div><div style="position:absolute;left:1814px;top:1025px;width:1px;height:6px;background:#A0A0A0;"></div><div style="position:absolute;left:1868px;top:1028px;width:10px;height:1px;background:#444;"></div><div style="position:absolute;left:1872px;top:1024px;width:1px;height:9px;background:#444;"></div><div style="position:absolute;left:1891px;top:1022px;white-space:pre;font:11px 'Liberation Sans', sans-serif;color:#444;">85%</div></body></html>
